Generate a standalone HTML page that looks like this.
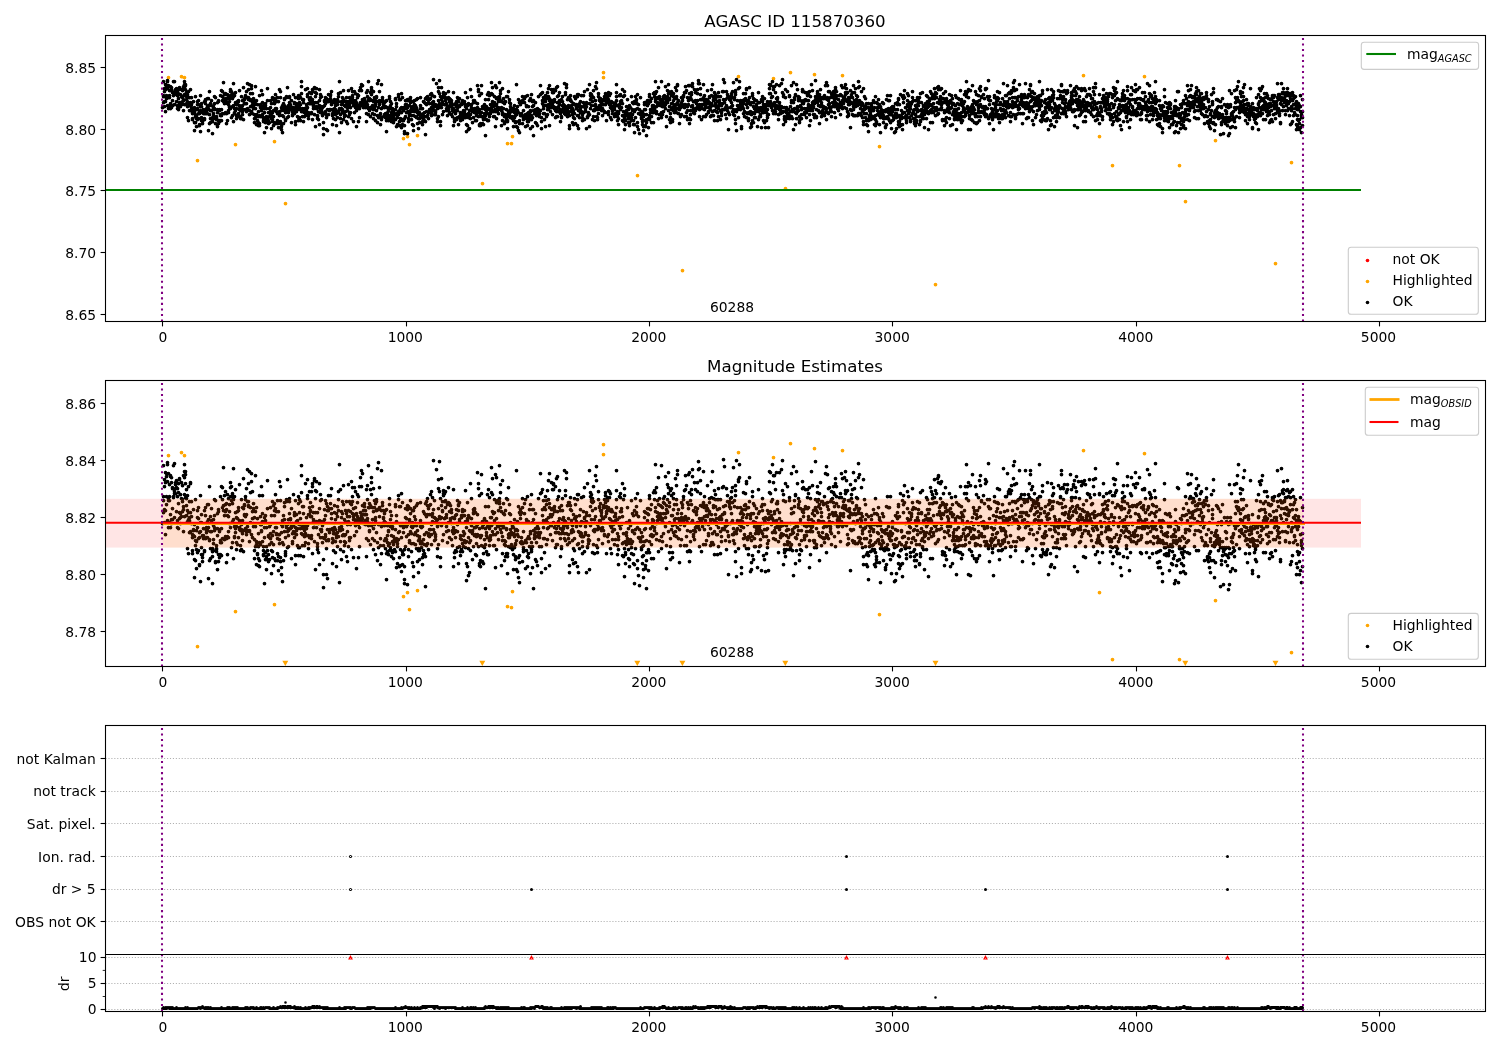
<!DOCTYPE html>
<html><head><meta charset="utf-8"><title>AGASC ID 115870360</title>
<style>html,body{margin:0;padding:0;background:#fff}svg{display:block;will-change:transform}text{font-family:"DejaVu Sans","Liberation Sans",sans-serif;fill:#000}</style></head><body>
<svg width="1500" height="1050" viewBox="0 0 1500 1050">
<rect width="1500" height="1050" fill="#fff"/>
<defs><clipPath id="c1"><rect x="105.5" y="35.5" width="1380" height="286"/></clipPath><clipPath id="c2"><rect x="105.5" y="380.5" width="1380" height="286"/></clipPath><clipPath id="c3"><rect x="105.5" y="725.5" width="1380" height="286"/></clipPath></defs>
<g clip-path="url(#c1)">
<path d="M168.5 77.5h0M181.5 76.5h0M184.5 77.5h0M197.5 160.5h0M235.5 144.5h0M274.5 141.5h0M285.5 203.5h0M403.5 138.5h0M407.5 136.5h0M409.5 144.5h0M417.5 135.5h0M482.5 183.5h0M507.5 143.5h0M511.5 143.5h0M512.5 136.5h0M603.5 72.5h0M603.5 77.5h0M637.5 175.5h0M682.5 270.5h0M738.5 76.5h0M773.5 78.5h0M790.5 72.5h0M814.5 74.5h0M842.5 75.5h0M785.5 188.5h0M879.5 146.5h0M935.5 284.5h0M1083.5 75.5h0M1144.5 76.5h0M1099.5 136.5h0M1112.5 165.5h0M1179.5 165.5h0M1185.5 201.5h0M1215.5 140.5h0M1291.5 162.5h0M1275.5 263.5h0" stroke="#ffa500" stroke-width="3.75" stroke-linecap="round" fill="none"/>
<path d="M162.5 107.5h0M163.5 81.5h0M163.5 102.5h0M163.5 96.5h0M163.5 95.5h0M164.5 101.5h0M164.5 106.5h0M164.5 88.5h0M164.5 91.5h0M165.5 111.5h0M165.5 89.5h0M165.5 84.5h0M165.5 101.5h0M166.5 85.5h0M166.5 98.5h0M166.5 95.5h0M166.5 86.5h0M167.5 105.5h0M167.5 88.5h0M167.5 80.5h0M167.5 81.5h0M168.5 97.5h0M168.5 85.5h0M168.5 108.5h0M168.5 96.5h0M169.5 90.5h0M169.5 106.5h0M169.5 95.5h0M169.5 97.5h0M170.5 108.5h0M170.5 86.5h0M170.5 86.5h0M170.5 103.5h0M171.5 105.5h0M171.5 107.5h0M171.5 89.5h0M171.5 87.5h0M172.5 100.5h0M172.5 105.5h0M172.5 92.5h0M172.5 91.5h0M173.5 95.5h0M173.5 81.5h0M173.5 95.5h0M173.5 95.5h0M174.5 104.5h0M174.5 93.5h0M174.5 81.5h0M174.5 94.5h0M175.5 93.5h0M175.5 90.5h0M175.5 91.5h0M175.5 89.5h0M176.5 89.5h0M176.5 88.5h0M176.5 101.5h0M176.5 91.5h0M177.5 108.5h0M177.5 91.5h0M177.5 105.5h0M177.5 95.5h0M178.5 89.5h0M178.5 98.5h0M178.5 93.5h0M178.5 109.5h0M179.5 102.5h0M179.5 87.5h0M179.5 104.5h0M179.5 88.5h0M180.5 106.5h0M180.5 102.5h0M180.5 104.5h0M180.5 94.5h0M181.5 89.5h0M181.5 104.5h0M181.5 96.5h0M181.5 89.5h0M182.5 97.5h0M182.5 101.5h0M182.5 90.5h0M182.5 96.5h0M183.5 100.5h0M183.5 110.5h0M183.5 86.5h0M183.5 99.5h0M184.5 94.5h0M184.5 104.5h0M184.5 81.5h0M184.5 87.5h0M184.5 84.5h0M185.5 95.5h0M185.5 89.5h0M185.5 85.5h0M185.5 84.5h0M186.5 92.5h0M186.5 96.5h0M186.5 99.5h0M186.5 103.5h0M187.5 106.5h0M187.5 94.5h0M187.5 101.5h0M187.5 117.5h0M188.5 102.5h0M188.5 91.5h0M188.5 105.5h0M188.5 120.5h0M189.5 105.5h0M189.5 97.5h0M189.5 104.5h0M189.5 110.5h0M190.5 89.5h0M190.5 89.5h0M190.5 110.5h0M190.5 102.5h0M191.5 107.5h0M191.5 103.5h0M191.5 97.5h0M191.5 104.5h0M192.5 111.5h0M192.5 118.5h0M192.5 119.5h0M192.5 113.5h0M193.5 101.5h0M193.5 109.5h0M193.5 112.5h0M193.5 110.5h0M194.5 112.5h0M194.5 107.5h0M194.5 122.5h0M194.5 130.5h0M195.5 116.5h0M195.5 122.5h0M195.5 96.5h0M195.5 114.5h0M196.5 115.5h0M196.5 126.5h0M196.5 109.5h0M196.5 118.5h0M197.5 101.5h0M197.5 104.5h0M197.5 119.5h0M197.5 108.5h0M198.5 113.5h0M198.5 118.5h0M198.5 100.5h0M198.5 104.5h0M199.5 111.5h0M199.5 113.5h0M199.5 125.5h0M199.5 124.5h0M200.5 110.5h0M200.5 95.5h0M200.5 131.5h0M200.5 106.5h0M201.5 106.5h0M201.5 103.5h0M201.5 120.5h0M201.5 117.5h0M202.5 112.5h0M202.5 121.5h0M202.5 123.5h0M202.5 120.5h0M203.5 113.5h0M203.5 109.5h0M203.5 113.5h0M203.5 112.5h0M204.5 118.5h0M204.5 119.5h0M204.5 101.5h0M204.5 113.5h0M205.5 113.5h0M205.5 103.5h0M205.5 100.5h0M205.5 99.5h0M206.5 108.5h0M206.5 113.5h0M206.5 109.5h0M206.5 111.5h0M207.5 98.5h0M207.5 109.5h0M207.5 106.5h0M207.5 113.5h0M208.5 98.5h0M208.5 130.5h0M208.5 108.5h0M208.5 105.5h0M209.5 123.5h0M209.5 91.5h0M209.5 114.5h0M209.5 114.5h0M210.5 122.5h0M210.5 103.5h0M210.5 110.5h0M210.5 118.5h0M211.5 110.5h0M211.5 105.5h0M211.5 100.5h0M211.5 110.5h0M212.5 121.5h0M212.5 117.5h0M212.5 133.5h0M212.5 119.5h0M213.5 105.5h0M213.5 108.5h0M213.5 113.5h0M213.5 115.5h0M214.5 96.5h0M214.5 109.5h0M214.5 103.5h0M214.5 108.5h0M215.5 118.5h0M215.5 97.5h0M215.5 123.5h0M215.5 123.5h0M216.5 116.5h0M216.5 119.5h0M216.5 117.5h0M216.5 118.5h0M217.5 102.5h0M217.5 112.5h0M217.5 109.5h0M217.5 126.5h0M218.5 120.5h0M218.5 101.5h0M218.5 123.5h0M218.5 100.5h0M219.5 121.5h0M219.5 109.5h0M219.5 120.5h0M219.5 110.5h0M220.5 120.5h0M220.5 114.5h0M220.5 95.5h0M220.5 115.5h0M221.5 90.5h0M221.5 115.5h0M221.5 120.5h0M221.5 109.5h0M222.5 113.5h0M222.5 91.5h0M222.5 100.5h0M222.5 96.5h0M223.5 101.5h0M223.5 82.5h0M223.5 99.5h0M223.5 101.5h0M224.5 113.5h0M224.5 113.5h0M224.5 103.5h0M224.5 94.5h0M225.5 93.5h0M225.5 112.5h0M225.5 98.5h0M225.5 102.5h0M226.5 113.5h0M226.5 98.5h0M226.5 123.5h0M226.5 101.5h0M227.5 94.5h0M227.5 112.5h0M227.5 103.5h0M227.5 120.5h0M228.5 110.5h0M228.5 96.5h0M228.5 112.5h0M228.5 104.5h0M229.5 106.5h0M229.5 107.5h0M229.5 101.5h0M229.5 98.5h0M230.5 91.5h0M230.5 95.5h0M230.5 108.5h0M230.5 89.5h0M231.5 91.5h0M231.5 117.5h0M231.5 97.5h0M231.5 95.5h0M232.5 93.5h0M232.5 98.5h0M232.5 115.5h0M232.5 106.5h0M233.5 121.5h0M233.5 105.5h0M233.5 83.5h0M233.5 96.5h0M234.5 95.5h0M234.5 108.5h0M234.5 112.5h0M234.5 113.5h0M235.5 102.5h0M235.5 110.5h0M235.5 109.5h0M235.5 92.5h0M236.5 118.5h0M236.5 115.5h0M236.5 108.5h0M236.5 104.5h0M237.5 104.5h0M237.5 116.5h0M237.5 101.5h0M237.5 104.5h0M238.5 100.5h0M238.5 113.5h0M238.5 101.5h0M238.5 101.5h0M239.5 109.5h0M239.5 105.5h0M239.5 108.5h0M239.5 90.5h0M240.5 110.5h0M240.5 116.5h0M240.5 118.5h0M240.5 107.5h0M241.5 109.5h0M241.5 107.5h0M241.5 96.5h0M241.5 118.5h0M242.5 111.5h0M242.5 105.5h0M242.5 114.5h0M242.5 100.5h0M243.5 100.5h0M243.5 109.5h0M243.5 119.5h0M243.5 87.5h0M244.5 98.5h0M244.5 99.5h0M244.5 103.5h0M244.5 103.5h0M245.5 95.5h0M245.5 103.5h0M245.5 109.5h0M245.5 96.5h0M246.5 103.5h0M246.5 110.5h0M246.5 111.5h0M246.5 91.5h0M247.5 97.5h0M247.5 83.5h0M247.5 108.5h0M247.5 110.5h0M248.5 99.5h0M248.5 89.5h0M248.5 97.5h0M248.5 99.5h0M249.5 84.5h0M249.5 110.5h0M249.5 114.5h0M249.5 110.5h0M250.5 106.5h0M250.5 100.5h0M250.5 93.5h0M250.5 99.5h0M251.5 88.5h0M251.5 111.5h0M251.5 85.5h0M251.5 111.5h0M252.5 93.5h0M252.5 113.5h0M252.5 101.5h0M252.5 104.5h0M253.5 100.5h0M253.5 98.5h0M253.5 108.5h0M253.5 107.5h0M254.5 104.5h0M254.5 118.5h0M254.5 114.5h0M254.5 122.5h0M255.5 108.5h0M255.5 86.5h0M255.5 101.5h0M255.5 117.5h0M256.5 116.5h0M256.5 100.5h0M256.5 114.5h0M256.5 124.5h0M257.5 120.5h0M257.5 120.5h0M257.5 120.5h0M257.5 104.5h0M258.5 111.5h0M258.5 125.5h0M258.5 116.5h0M258.5 122.5h0M259.5 123.5h0M259.5 125.5h0M259.5 95.5h0M259.5 115.5h0M260.5 106.5h0M260.5 104.5h0M260.5 116.5h0M260.5 107.5h0M261.5 107.5h0M261.5 110.5h0M261.5 90.5h0M261.5 109.5h0M262.5 114.5h0M262.5 106.5h0M262.5 94.5h0M262.5 102.5h0M263.5 117.5h0M263.5 120.5h0M263.5 121.5h0M263.5 118.5h0M264.5 108.5h0M264.5 104.5h0M264.5 132.5h0M264.5 112.5h0M265.5 122.5h0M265.5 105.5h0M265.5 103.5h0M265.5 119.5h0M266.5 116.5h0M266.5 121.5h0M266.5 108.5h0M266.5 127.5h0M267.5 122.5h0M267.5 118.5h0M267.5 100.5h0M267.5 88.5h0M268.5 112.5h0M268.5 123.5h0M268.5 112.5h0M268.5 120.5h0M269.5 108.5h0M269.5 122.5h0M269.5 116.5h0M269.5 112.5h0M270.5 107.5h0M270.5 113.5h0M270.5 100.5h0M270.5 111.5h0M271.5 128.5h0M271.5 103.5h0M271.5 115.5h0M271.5 118.5h0M272.5 97.5h0M272.5 121.5h0M272.5 112.5h0M272.5 119.5h0M273.5 99.5h0M273.5 116.5h0M273.5 110.5h0M273.5 125.5h0M274.5 98.5h0M274.5 122.5h0M274.5 103.5h0M274.5 101.5h0M275.5 100.5h0M275.5 94.5h0M275.5 123.5h0M275.5 108.5h0M276.5 111.5h0M276.5 108.5h0M276.5 101.5h0M276.5 111.5h0M277.5 120.5h0M277.5 113.5h0M277.5 97.5h0M277.5 123.5h0M278.5 112.5h0M278.5 121.5h0M278.5 101.5h0M278.5 127.5h0M279.5 115.5h0M279.5 113.5h0M279.5 111.5h0M279.5 89.5h0M280.5 97.5h0M280.5 121.5h0M280.5 91.5h0M280.5 123.5h0M281.5 129.5h0M281.5 126.5h0M281.5 110.5h0M281.5 107.5h0M282.5 132.5h0M282.5 108.5h0M282.5 115.5h0M282.5 105.5h0M283.5 116.5h0M283.5 103.5h0M283.5 107.5h0M283.5 123.5h0M284.5 98.5h0M284.5 110.5h0M284.5 105.5h0M284.5 99.5h0M285.5 120.5h0M285.5 112.5h0M285.5 119.5h0M285.5 120.5h0M286.5 108.5h0M286.5 107.5h0M286.5 97.5h0M286.5 96.5h0M287.5 110.5h0M287.5 117.5h0M287.5 107.5h0M287.5 87.5h0M288.5 110.5h0M288.5 116.5h0M288.5 112.5h0M288.5 105.5h0M289.5 96.5h0M289.5 97.5h0M289.5 102.5h0M289.5 109.5h0M290.5 104.5h0M290.5 109.5h0M290.5 105.5h0M290.5 106.5h0M291.5 100.5h0M291.5 122.5h0M291.5 108.5h0M291.5 108.5h0M292.5 115.5h0M292.5 107.5h0M292.5 114.5h0M292.5 111.5h0M293.5 108.5h0M293.5 107.5h0M293.5 110.5h0M293.5 94.5h0M294.5 103.5h0M294.5 102.5h0M294.5 103.5h0M294.5 111.5h0M294.5 113.5h0M295.5 97.5h0M295.5 108.5h0M295.5 121.5h0M295.5 124.5h0M296.5 103.5h0M296.5 111.5h0M296.5 106.5h0M296.5 110.5h0M297.5 109.5h0M297.5 106.5h0M297.5 116.5h0M297.5 105.5h0M298.5 95.5h0M298.5 98.5h0M298.5 120.5h0M298.5 117.5h0M299.5 117.5h0M299.5 107.5h0M299.5 96.5h0M299.5 102.5h0M300.5 120.5h0M300.5 104.5h0M300.5 97.5h0M300.5 109.5h0M301.5 86.5h0M301.5 111.5h0M301.5 93.5h0M301.5 81.5h0M302.5 116.5h0M302.5 108.5h0M302.5 99.5h0M302.5 111.5h0M303.5 121.5h0M303.5 99.5h0M303.5 102.5h0M303.5 109.5h0M304.5 112.5h0M304.5 110.5h0M304.5 108.5h0M304.5 116.5h0M305.5 89.5h0M305.5 115.5h0M305.5 109.5h0M305.5 111.5h0M306.5 109.5h0M306.5 104.5h0M306.5 112.5h0M306.5 107.5h0M307.5 88.5h0M307.5 94.5h0M307.5 107.5h0M307.5 96.5h0M308.5 112.5h0M308.5 103.5h0M308.5 118.5h0M308.5 115.5h0M309.5 113.5h0M309.5 92.5h0M309.5 103.5h0M309.5 99.5h0M310.5 103.5h0M310.5 101.5h0M310.5 101.5h0M310.5 97.5h0M311.5 103.5h0M311.5 113.5h0M311.5 112.5h0M311.5 93.5h0M312.5 91.5h0M312.5 99.5h0M312.5 119.5h0M312.5 89.5h0M313.5 102.5h0M313.5 106.5h0M313.5 105.5h0M313.5 108.5h0M314.5 87.5h0M314.5 88.5h0M314.5 114.5h0M314.5 107.5h0M315.5 102.5h0M315.5 92.5h0M315.5 126.5h0M315.5 96.5h0M316.5 88.5h0M316.5 108.5h0M316.5 106.5h0M316.5 93.5h0M317.5 102.5h0M317.5 118.5h0M317.5 116.5h0M317.5 115.5h0M318.5 119.5h0M318.5 107.5h0M318.5 111.5h0M318.5 107.5h0M319.5 100.5h0M319.5 89.5h0M319.5 105.5h0M319.5 124.5h0M320.5 94.5h0M320.5 109.5h0M320.5 97.5h0M320.5 112.5h0M321.5 106.5h0M321.5 110.5h0M321.5 109.5h0M321.5 96.5h0M322.5 115.5h0M322.5 107.5h0M322.5 107.5h0M322.5 112.5h0M323.5 128.5h0M323.5 106.5h0M323.5 134.5h0M323.5 122.5h0M324.5 113.5h0M324.5 105.5h0M324.5 100.5h0M324.5 101.5h0M325.5 103.5h0M325.5 112.5h0M325.5 97.5h0M325.5 111.5h0M326.5 98.5h0M326.5 129.5h0M326.5 117.5h0M326.5 114.5h0M327.5 109.5h0M327.5 130.5h0M327.5 101.5h0M327.5 99.5h0M328.5 101.5h0M328.5 114.5h0M328.5 94.5h0M328.5 114.5h0M329.5 100.5h0M329.5 110.5h0M329.5 109.5h0M329.5 110.5h0M330.5 109.5h0M330.5 98.5h0M330.5 94.5h0M330.5 95.5h0M331.5 100.5h0M331.5 102.5h0M331.5 104.5h0M331.5 91.5h0M332.5 113.5h0M332.5 115.5h0M332.5 109.5h0M332.5 124.5h0M333.5 111.5h0M333.5 110.5h0M333.5 118.5h0M333.5 114.5h0M334.5 102.5h0M334.5 111.5h0M334.5 108.5h0M334.5 99.5h0M335.5 114.5h0M335.5 119.5h0M335.5 109.5h0M335.5 105.5h0M336.5 125.5h0M336.5 102.5h0M336.5 112.5h0M336.5 113.5h0M337.5 117.5h0M337.5 111.5h0M337.5 99.5h0M337.5 104.5h0M338.5 101.5h0M338.5 112.5h0M338.5 93.5h0M338.5 96.5h0M339.5 109.5h0M339.5 132.5h0M339.5 108.5h0M339.5 81.5h0M340.5 109.5h0M340.5 118.5h0M340.5 92.5h0M340.5 114.5h0M341.5 104.5h0M341.5 101.5h0M341.5 122.5h0M341.5 108.5h0M342.5 97.5h0M342.5 112.5h0M342.5 102.5h0M342.5 109.5h0M343.5 99.5h0M343.5 90.5h0M343.5 119.5h0M343.5 111.5h0M344.5 105.5h0M344.5 114.5h0M344.5 116.5h0M344.5 112.5h0M345.5 111.5h0M345.5 115.5h0M345.5 106.5h0M345.5 101.5h0M346.5 101.5h0M346.5 102.5h0M346.5 97.5h0M346.5 121.5h0M347.5 110.5h0M347.5 107.5h0M347.5 104.5h0M347.5 123.5h0M348.5 90.5h0M348.5 116.5h0M348.5 106.5h0M348.5 101.5h0M349.5 97.5h0M349.5 114.5h0M349.5 112.5h0M349.5 104.5h0M350.5 101.5h0M350.5 98.5h0M350.5 107.5h0M350.5 112.5h0M351.5 118.5h0M351.5 88.5h0M351.5 118.5h0M351.5 98.5h0M352.5 102.5h0M352.5 97.5h0M352.5 95.5h0M352.5 91.5h0M353.5 105.5h0M353.5 100.5h0M353.5 121.5h0M353.5 103.5h0M354.5 112.5h0M354.5 105.5h0M354.5 91.5h0M354.5 103.5h0M355.5 93.5h0M355.5 105.5h0M355.5 100.5h0M355.5 107.5h0M356.5 126.5h0M356.5 110.5h0M356.5 106.5h0M356.5 102.5h0M357.5 104.5h0M357.5 105.5h0M357.5 94.5h0M357.5 97.5h0M358.5 107.5h0M358.5 95.5h0M358.5 121.5h0M358.5 106.5h0M359.5 105.5h0M359.5 90.5h0M359.5 108.5h0M359.5 117.5h0M360.5 102.5h0M360.5 87.5h0M360.5 105.5h0M360.5 104.5h0M361.5 105.5h0M361.5 103.5h0M361.5 90.5h0M361.5 84.5h0M362.5 99.5h0M362.5 104.5h0M362.5 85.5h0M362.5 103.5h0M363.5 103.5h0M363.5 107.5h0M363.5 106.5h0M363.5 101.5h0M364.5 106.5h0M364.5 99.5h0M364.5 103.5h0M364.5 98.5h0M365.5 107.5h0M365.5 105.5h0M365.5 101.5h0M365.5 103.5h0M366.5 102.5h0M366.5 92.5h0M366.5 113.5h0M366.5 121.5h0M367.5 96.5h0M367.5 106.5h0M367.5 90.5h0M367.5 104.5h0M368.5 114.5h0M368.5 81.5h0M368.5 99.5h0M368.5 108.5h0M369.5 110.5h0M369.5 98.5h0M369.5 109.5h0M369.5 100.5h0M370.5 92.5h0M370.5 116.5h0M370.5 107.5h0M370.5 99.5h0M371.5 87.5h0M371.5 94.5h0M371.5 108.5h0M371.5 89.5h0M372.5 107.5h0M372.5 105.5h0M372.5 100.5h0M372.5 113.5h0M373.5 118.5h0M373.5 91.5h0M373.5 101.5h0M373.5 109.5h0M374.5 114.5h0M374.5 100.5h0M374.5 97.5h0M374.5 107.5h0M375.5 105.5h0M375.5 98.5h0M375.5 104.5h0M375.5 120.5h0M376.5 97.5h0M376.5 101.5h0M376.5 96.5h0M376.5 110.5h0M377.5 122.5h0M377.5 115.5h0M377.5 101.5h0M377.5 83.5h0M378.5 80.5h0M378.5 101.5h0M378.5 117.5h0M378.5 107.5h0M379.5 100.5h0M379.5 100.5h0M379.5 104.5h0M379.5 91.5h0M380.5 113.5h0M380.5 124.5h0M380.5 113.5h0M380.5 116.5h0M381.5 84.5h0M381.5 108.5h0M381.5 119.5h0M381.5 101.5h0M382.5 97.5h0M382.5 107.5h0M382.5 107.5h0M382.5 99.5h0M383.5 104.5h0M383.5 116.5h0M383.5 104.5h0M383.5 101.5h0M384.5 107.5h0M384.5 102.5h0M384.5 106.5h0M384.5 114.5h0M385.5 113.5h0M385.5 106.5h0M385.5 117.5h0M385.5 101.5h0M386.5 100.5h0M386.5 131.5h0M386.5 114.5h0M386.5 120.5h0M387.5 119.5h0M387.5 112.5h0M387.5 115.5h0M387.5 107.5h0M388.5 110.5h0M388.5 109.5h0M388.5 120.5h0M388.5 116.5h0M389.5 98.5h0M389.5 115.5h0M389.5 96.5h0M389.5 118.5h0M390.5 101.5h0M390.5 108.5h0M390.5 117.5h0M390.5 105.5h0M391.5 112.5h0M391.5 103.5h0M391.5 121.5h0M391.5 118.5h0M392.5 119.5h0M392.5 108.5h0M392.5 109.5h0M392.5 114.5h0M393.5 115.5h0M393.5 116.5h0M393.5 112.5h0M393.5 122.5h0M394.5 114.5h0M394.5 114.5h0M394.5 118.5h0M394.5 118.5h0M395.5 98.5h0M395.5 119.5h0M395.5 109.5h0M395.5 99.5h0M396.5 106.5h0M396.5 113.5h0M396.5 103.5h0M396.5 126.5h0M397.5 124.5h0M397.5 117.5h0M397.5 115.5h0M397.5 114.5h0M398.5 94.5h0M398.5 96.5h0M398.5 114.5h0M398.5 111.5h0M399.5 121.5h0M399.5 110.5h0M399.5 125.5h0M399.5 99.5h0M400.5 118.5h0M400.5 108.5h0M400.5 125.5h0M400.5 99.5h0M401.5 107.5h0M401.5 93.5h0M401.5 112.5h0M401.5 127.5h0M402.5 120.5h0M402.5 124.5h0M402.5 97.5h0M402.5 119.5h0M403.5 120.5h0M403.5 107.5h0M403.5 110.5h0M403.5 108.5h0M404.5 118.5h0M404.5 131.5h0M404.5 125.5h0M404.5 133.5h0M405.5 100.5h0M405.5 104.5h0M405.5 116.5h0M405.5 107.5h0M405.5 106.5h0M406.5 107.5h0M406.5 108.5h0M406.5 104.5h0M406.5 112.5h0M407.5 133.5h0M407.5 99.5h0M407.5 100.5h0M407.5 107.5h0M408.5 99.5h0M408.5 111.5h0M408.5 121.5h0M408.5 118.5h0M409.5 115.5h0M409.5 105.5h0M409.5 114.5h0M409.5 105.5h0M410.5 102.5h0M410.5 100.5h0M410.5 97.5h0M410.5 110.5h0M411.5 111.5h0M411.5 119.5h0M411.5 108.5h0M411.5 115.5h0M412.5 124.5h0M412.5 101.5h0M412.5 106.5h0M412.5 108.5h0M413.5 130.5h0M413.5 115.5h0M413.5 125.5h0M413.5 101.5h0M414.5 111.5h0M414.5 107.5h0M414.5 104.5h0M414.5 100.5h0M415.5 116.5h0M415.5 107.5h0M415.5 110.5h0M415.5 105.5h0M416.5 107.5h0M416.5 99.5h0M416.5 108.5h0M416.5 117.5h0M417.5 112.5h0M417.5 123.5h0M417.5 110.5h0M417.5 98.5h0M418.5 118.5h0M418.5 128.5h0M418.5 114.5h0M418.5 118.5h0M419.5 113.5h0M419.5 118.5h0M419.5 112.5h0M419.5 122.5h0M420.5 97.5h0M420.5 115.5h0M420.5 108.5h0M420.5 105.5h0M421.5 114.5h0M421.5 108.5h0M421.5 115.5h0M421.5 117.5h0M422.5 115.5h0M422.5 108.5h0M422.5 124.5h0M422.5 121.5h0M423.5 120.5h0M423.5 118.5h0M423.5 101.5h0M423.5 113.5h0M424.5 116.5h0M424.5 112.5h0M424.5 102.5h0M424.5 120.5h0M425.5 103.5h0M425.5 134.5h0M425.5 121.5h0M425.5 98.5h0M426.5 97.5h0M426.5 111.5h0M426.5 116.5h0M426.5 104.5h0M427.5 115.5h0M427.5 96.5h0M427.5 99.5h0M427.5 103.5h0M428.5 118.5h0M428.5 100.5h0M428.5 112.5h0M428.5 111.5h0M429.5 112.5h0M429.5 109.5h0M429.5 103.5h0M429.5 99.5h0M430.5 98.5h0M430.5 111.5h0M430.5 109.5h0M430.5 94.5h0M431.5 112.5h0M431.5 107.5h0M431.5 115.5h0M431.5 93.5h0M432.5 102.5h0M432.5 103.5h0M432.5 106.5h0M432.5 95.5h0M433.5 109.5h0M433.5 101.5h0M433.5 79.5h0M433.5 106.5h0M434.5 110.5h0M434.5 114.5h0M434.5 96.5h0M434.5 104.5h0M435.5 111.5h0M435.5 112.5h0M435.5 104.5h0M435.5 114.5h0M436.5 83.5h0M436.5 106.5h0M436.5 106.5h0M436.5 105.5h0M437.5 121.5h0M437.5 118.5h0M437.5 108.5h0M437.5 105.5h0M438.5 116.5h0M438.5 87.5h0M438.5 100.5h0M438.5 91.5h0M439.5 93.5h0M439.5 107.5h0M439.5 80.5h0M439.5 103.5h0M440.5 121.5h0M440.5 125.5h0M440.5 105.5h0M440.5 96.5h0M441.5 104.5h0M441.5 87.5h0M441.5 107.5h0M441.5 99.5h0M442.5 97.5h0M442.5 114.5h0M442.5 101.5h0M442.5 101.5h0M443.5 93.5h0M443.5 92.5h0M443.5 95.5h0M443.5 111.5h0M444.5 97.5h0M444.5 94.5h0M444.5 104.5h0M444.5 97.5h0M445.5 97.5h0M445.5 93.5h0M445.5 104.5h0M445.5 100.5h0M446.5 103.5h0M446.5 104.5h0M446.5 110.5h0M446.5 108.5h0M447.5 115.5h0M447.5 106.5h0M447.5 98.5h0M447.5 98.5h0M448.5 97.5h0M448.5 106.5h0M448.5 91.5h0M448.5 109.5h0M449.5 98.5h0M449.5 101.5h0M449.5 113.5h0M449.5 112.5h0M450.5 99.5h0M450.5 106.5h0M450.5 104.5h0M450.5 105.5h0M451.5 102.5h0M451.5 106.5h0M451.5 100.5h0M451.5 114.5h0M452.5 110.5h0M452.5 104.5h0M452.5 116.5h0M452.5 109.5h0M453.5 111.5h0M453.5 108.5h0M453.5 125.5h0M453.5 92.5h0M454.5 111.5h0M454.5 104.5h0M454.5 119.5h0M454.5 121.5h0M455.5 110.5h0M455.5 113.5h0M455.5 103.5h0M455.5 118.5h0M456.5 119.5h0M456.5 106.5h0M456.5 103.5h0M456.5 101.5h0M457.5 110.5h0M457.5 107.5h0M457.5 117.5h0M457.5 97.5h0M458.5 98.5h0M458.5 99.5h0M458.5 124.5h0M458.5 101.5h0M459.5 116.5h0M459.5 105.5h0M459.5 106.5h0M459.5 98.5h0M460.5 112.5h0M460.5 113.5h0M460.5 119.5h0M460.5 120.5h0M461.5 104.5h0M461.5 118.5h0M461.5 103.5h0M461.5 113.5h0M462.5 115.5h0M462.5 100.5h0M462.5 101.5h0M462.5 119.5h0M463.5 112.5h0M463.5 110.5h0M463.5 103.5h0M463.5 117.5h0M464.5 114.5h0M464.5 111.5h0M464.5 103.5h0M464.5 101.5h0M465.5 115.5h0M465.5 92.5h0M465.5 106.5h0M465.5 117.5h0M466.5 124.5h0M466.5 114.5h0M466.5 131.5h0M466.5 108.5h0M467.5 104.5h0M467.5 97.5h0M467.5 105.5h0M467.5 125.5h0M468.5 113.5h0M468.5 103.5h0M468.5 129.5h0M468.5 117.5h0M469.5 104.5h0M469.5 110.5h0M469.5 128.5h0M469.5 115.5h0M470.5 110.5h0M470.5 89.5h0M470.5 114.5h0M470.5 118.5h0M471.5 108.5h0M471.5 107.5h0M471.5 104.5h0M471.5 96.5h0M472.5 111.5h0M472.5 122.5h0M472.5 110.5h0M472.5 110.5h0M473.5 100.5h0M473.5 102.5h0M473.5 117.5h0M473.5 102.5h0M474.5 100.5h0M474.5 112.5h0M474.5 101.5h0M474.5 108.5h0M475.5 108.5h0M475.5 111.5h0M475.5 102.5h0M475.5 120.5h0M476.5 108.5h0M476.5 120.5h0M476.5 112.5h0M476.5 115.5h0M477.5 107.5h0M477.5 111.5h0M477.5 85.5h0M477.5 103.5h0M478.5 91.5h0M478.5 116.5h0M478.5 112.5h0M478.5 89.5h0M479.5 125.5h0M479.5 109.5h0M479.5 124.5h0M479.5 95.5h0M480.5 123.5h0M480.5 113.5h0M480.5 112.5h0M480.5 125.5h0M481.5 85.5h0M481.5 112.5h0M481.5 93.5h0M481.5 116.5h0M482.5 123.5h0M482.5 108.5h0M482.5 108.5h0M482.5 106.5h0M483.5 119.5h0M483.5 124.5h0M483.5 116.5h0M483.5 107.5h0M484.5 104.5h0M484.5 117.5h0M484.5 113.5h0M484.5 105.5h0M485.5 99.5h0M485.5 115.5h0M485.5 109.5h0M485.5 135.5h0M486.5 119.5h0M486.5 106.5h0M486.5 110.5h0M486.5 112.5h0M487.5 94.5h0M487.5 113.5h0M487.5 120.5h0M487.5 108.5h0M488.5 108.5h0M488.5 120.5h0M488.5 99.5h0M488.5 92.5h0M489.5 114.5h0M489.5 116.5h0M489.5 109.5h0M489.5 95.5h0M490.5 112.5h0M490.5 113.5h0M490.5 112.5h0M490.5 104.5h0M491.5 104.5h0M491.5 107.5h0M491.5 93.5h0M491.5 82.5h0M492.5 110.5h0M492.5 94.5h0M492.5 101.5h0M492.5 87.5h0M493.5 111.5h0M493.5 106.5h0M493.5 102.5h0M493.5 116.5h0M494.5 105.5h0M494.5 96.5h0M494.5 116.5h0M494.5 102.5h0M495.5 85.5h0M495.5 109.5h0M495.5 111.5h0M495.5 126.5h0M496.5 104.5h0M496.5 118.5h0M496.5 98.5h0M496.5 87.5h0M497.5 98.5h0M497.5 110.5h0M497.5 97.5h0M497.5 107.5h0M498.5 113.5h0M498.5 108.5h0M498.5 101.5h0M498.5 107.5h0M499.5 98.5h0M499.5 82.5h0M499.5 97.5h0M499.5 96.5h0M500.5 109.5h0M500.5 90.5h0M500.5 100.5h0M500.5 93.5h0M501.5 110.5h0M501.5 101.5h0M501.5 125.5h0M501.5 107.5h0M502.5 112.5h0M502.5 114.5h0M502.5 88.5h0M502.5 120.5h0M503.5 108.5h0M503.5 108.5h0M503.5 102.5h0M503.5 98.5h0M504.5 123.5h0M504.5 114.5h0M504.5 116.5h0M504.5 103.5h0M505.5 101.5h0M505.5 114.5h0M505.5 116.5h0M505.5 121.5h0M506.5 109.5h0M506.5 96.5h0M506.5 109.5h0M506.5 119.5h0M507.5 121.5h0M507.5 120.5h0M507.5 128.5h0M507.5 96.5h0M508.5 113.5h0M508.5 116.5h0M508.5 91.5h0M508.5 111.5h0M509.5 99.5h0M509.5 111.5h0M509.5 102.5h0M509.5 113.5h0M510.5 117.5h0M510.5 109.5h0M510.5 106.5h0M510.5 103.5h0M511.5 111.5h0M511.5 116.5h0M511.5 117.5h0M511.5 110.5h0M512.5 118.5h0M512.5 116.5h0M512.5 108.5h0M512.5 108.5h0M513.5 108.5h0M513.5 120.5h0M513.5 126.5h0M513.5 111.5h0M514.5 112.5h0M514.5 117.5h0M514.5 111.5h0M514.5 105.5h0M515.5 115.5h0M515.5 109.5h0M515.5 122.5h0M515.5 115.5h0M515.5 121.5h0M516.5 126.5h0M516.5 109.5h0M516.5 84.5h0M516.5 114.5h0M517.5 106.5h0M517.5 110.5h0M517.5 127.5h0M517.5 111.5h0M518.5 130.5h0M518.5 121.5h0M518.5 99.5h0M518.5 112.5h0M519.5 102.5h0M519.5 123.5h0M519.5 132.5h0M519.5 120.5h0M520.5 101.5h0M520.5 104.5h0M520.5 103.5h0M520.5 115.5h0M521.5 114.5h0M521.5 115.5h0M521.5 102.5h0M521.5 113.5h0M522.5 96.5h0M522.5 115.5h0M522.5 100.5h0M522.5 123.5h0M523.5 118.5h0M523.5 110.5h0M523.5 119.5h0M523.5 117.5h0M524.5 115.5h0M524.5 118.5h0M524.5 98.5h0M524.5 102.5h0M525.5 126.5h0M525.5 96.5h0M525.5 114.5h0M525.5 114.5h0M526.5 115.5h0M526.5 105.5h0M526.5 106.5h0M526.5 118.5h0M527.5 113.5h0M527.5 125.5h0M527.5 95.5h0M527.5 121.5h0M528.5 121.5h0M528.5 120.5h0M528.5 112.5h0M528.5 106.5h0M529.5 117.5h0M529.5 113.5h0M529.5 116.5h0M529.5 100.5h0M530.5 111.5h0M530.5 128.5h0M530.5 98.5h0M530.5 110.5h0M531.5 94.5h0M531.5 119.5h0M531.5 118.5h0M531.5 115.5h0M532.5 126.5h0M532.5 117.5h0M532.5 101.5h0M532.5 106.5h0M533.5 135.5h0M533.5 100.5h0M533.5 110.5h0M533.5 105.5h0M534.5 113.5h0M534.5 111.5h0M534.5 113.5h0M534.5 113.5h0M535.5 122.5h0M535.5 102.5h0M535.5 111.5h0M535.5 109.5h0M536.5 109.5h0M536.5 115.5h0M536.5 112.5h0M536.5 123.5h0M537.5 108.5h0M537.5 108.5h0M537.5 112.5h0M537.5 125.5h0M538.5 96.5h0M538.5 110.5h0M538.5 109.5h0M538.5 111.5h0M539.5 113.5h0M539.5 111.5h0M539.5 116.5h0M539.5 111.5h0M540.5 85.5h0M540.5 94.5h0M540.5 85.5h0M540.5 110.5h0M541.5 121.5h0M541.5 117.5h0M541.5 128.5h0M541.5 93.5h0M542.5 92.5h0M542.5 103.5h0M542.5 100.5h0M542.5 100.5h0M543.5 105.5h0M543.5 97.5h0M543.5 113.5h0M543.5 108.5h0M544.5 105.5h0M544.5 119.5h0M544.5 113.5h0M544.5 100.5h0M545.5 101.5h0M545.5 126.5h0M545.5 95.5h0M545.5 101.5h0M546.5 96.5h0M546.5 105.5h0M546.5 98.5h0M546.5 116.5h0M547.5 106.5h0M547.5 114.5h0M547.5 109.5h0M547.5 92.5h0M548.5 88.5h0M548.5 104.5h0M548.5 108.5h0M548.5 96.5h0M549.5 100.5h0M549.5 85.5h0M549.5 98.5h0M549.5 125.5h0M550.5 104.5h0M550.5 107.5h0M550.5 111.5h0M550.5 103.5h0M551.5 104.5h0M551.5 107.5h0M551.5 89.5h0M551.5 100.5h0M552.5 100.5h0M552.5 103.5h0M552.5 92.5h0M552.5 114.5h0M553.5 92.5h0M553.5 106.5h0M553.5 89.5h0M553.5 90.5h0M554.5 99.5h0M554.5 108.5h0M554.5 101.5h0M554.5 101.5h0M555.5 117.5h0M555.5 107.5h0M555.5 110.5h0M555.5 90.5h0M556.5 87.5h0M556.5 111.5h0M556.5 109.5h0M556.5 116.5h0M557.5 102.5h0M557.5 96.5h0M557.5 86.5h0M557.5 116.5h0M558.5 95.5h0M558.5 106.5h0M558.5 111.5h0M558.5 107.5h0M559.5 111.5h0M559.5 100.5h0M559.5 104.5h0M559.5 92.5h0M560.5 109.5h0M560.5 121.5h0M560.5 113.5h0M560.5 101.5h0M561.5 117.5h0M561.5 111.5h0M561.5 99.5h0M561.5 116.5h0M562.5 96.5h0M562.5 101.5h0M562.5 109.5h0M562.5 105.5h0M563.5 109.5h0M563.5 108.5h0M563.5 107.5h0M563.5 104.5h0M564.5 105.5h0M564.5 111.5h0M564.5 113.5h0M564.5 83.5h0M565.5 114.5h0M565.5 106.5h0M565.5 92.5h0M565.5 94.5h0M566.5 111.5h0M566.5 84.5h0M566.5 87.5h0M566.5 108.5h0M567.5 116.5h0M567.5 99.5h0M567.5 107.5h0M567.5 108.5h0M568.5 113.5h0M568.5 111.5h0M568.5 105.5h0M568.5 97.5h0M569.5 125.5h0M569.5 128.5h0M569.5 97.5h0M569.5 115.5h0M570.5 100.5h0M570.5 107.5h0M570.5 95.5h0M570.5 99.5h0M571.5 111.5h0M571.5 110.5h0M571.5 105.5h0M571.5 101.5h0M572.5 114.5h0M572.5 122.5h0M572.5 108.5h0M572.5 109.5h0M573.5 110.5h0M573.5 117.5h0M573.5 103.5h0M573.5 124.5h0M574.5 113.5h0M574.5 96.5h0M574.5 118.5h0M574.5 104.5h0M575.5 104.5h0M575.5 104.5h0M575.5 123.5h0M575.5 98.5h0M576.5 107.5h0M576.5 104.5h0M576.5 106.5h0M576.5 108.5h0M577.5 96.5h0M577.5 94.5h0M577.5 125.5h0M577.5 115.5h0M578.5 110.5h0M578.5 128.5h0M578.5 94.5h0M578.5 115.5h0M579.5 103.5h0M579.5 106.5h0M579.5 110.5h0M579.5 117.5h0M580.5 112.5h0M580.5 108.5h0M580.5 101.5h0M580.5 110.5h0M581.5 112.5h0M581.5 111.5h0M581.5 95.5h0M581.5 106.5h0M582.5 114.5h0M582.5 120.5h0M582.5 112.5h0M582.5 117.5h0M583.5 112.5h0M583.5 95.5h0M583.5 102.5h0M583.5 106.5h0M584.5 104.5h0M584.5 91.5h0M584.5 119.5h0M584.5 104.5h0M585.5 110.5h0M585.5 107.5h0M585.5 108.5h0M585.5 111.5h0M586.5 103.5h0M586.5 128.5h0M586.5 106.5h0M586.5 102.5h0M587.5 117.5h0M587.5 117.5h0M587.5 89.5h0M587.5 116.5h0M588.5 112.5h0M588.5 115.5h0M588.5 114.5h0M588.5 114.5h0M589.5 126.5h0M589.5 84.5h0M589.5 114.5h0M589.5 103.5h0M590.5 108.5h0M590.5 93.5h0M590.5 99.5h0M590.5 95.5h0M591.5 94.5h0M591.5 97.5h0M591.5 105.5h0M591.5 96.5h0M592.5 119.5h0M592.5 96.5h0M592.5 97.5h0M592.5 101.5h0M593.5 116.5h0M593.5 90.5h0M593.5 110.5h0M593.5 97.5h0M594.5 120.5h0M594.5 105.5h0M594.5 109.5h0M594.5 110.5h0M595.5 109.5h0M595.5 86.5h0M595.5 104.5h0M595.5 100.5h0M596.5 82.5h0M596.5 116.5h0M596.5 88.5h0M596.5 107.5h0M597.5 109.5h0M597.5 107.5h0M597.5 119.5h0M597.5 117.5h0M598.5 113.5h0M598.5 108.5h0M598.5 96.5h0M598.5 93.5h0M599.5 107.5h0M599.5 100.5h0M599.5 99.5h0M599.5 105.5h0M600.5 101.5h0M600.5 109.5h0M600.5 98.5h0M600.5 105.5h0M601.5 103.5h0M601.5 101.5h0M601.5 102.5h0M601.5 110.5h0M602.5 115.5h0M602.5 104.5h0M602.5 108.5h0M602.5 108.5h0M603.5 104.5h0M603.5 110.5h0M603.5 99.5h0M603.5 99.5h0M604.5 111.5h0M604.5 100.5h0M604.5 112.5h0M604.5 96.5h0M605.5 97.5h0M605.5 104.5h0M605.5 95.5h0M605.5 93.5h0M606.5 99.5h0M606.5 120.5h0M606.5 102.5h0M606.5 101.5h0M607.5 95.5h0M607.5 112.5h0M607.5 96.5h0M607.5 100.5h0M608.5 99.5h0M608.5 114.5h0M608.5 111.5h0M608.5 92.5h0M609.5 95.5h0M609.5 104.5h0M609.5 93.5h0M609.5 101.5h0M610.5 107.5h0M610.5 117.5h0M610.5 93.5h0M610.5 105.5h0M611.5 101.5h0M611.5 119.5h0M611.5 108.5h0M611.5 101.5h0M612.5 106.5h0M612.5 110.5h0M612.5 113.5h0M612.5 102.5h0M613.5 107.5h0M613.5 107.5h0M613.5 106.5h0M613.5 109.5h0M614.5 107.5h0M614.5 109.5h0M614.5 103.5h0M614.5 116.5h0M615.5 113.5h0M615.5 103.5h0M615.5 105.5h0M615.5 102.5h0M616.5 84.5h0M616.5 96.5h0M616.5 92.5h0M616.5 100.5h0M617.5 105.5h0M617.5 111.5h0M617.5 120.5h0M617.5 116.5h0M618.5 124.5h0M618.5 113.5h0M618.5 118.5h0M618.5 112.5h0M619.5 104.5h0M619.5 107.5h0M619.5 95.5h0M619.5 95.5h0M620.5 94.5h0M620.5 95.5h0M620.5 101.5h0M620.5 109.5h0M621.5 100.5h0M621.5 107.5h0M621.5 107.5h0M621.5 101.5h0M622.5 115.5h0M622.5 120.5h0M622.5 103.5h0M622.5 89.5h0M623.5 96.5h0M623.5 111.5h0M623.5 121.5h0M623.5 115.5h0M624.5 129.5h0M624.5 117.5h0M624.5 91.5h0M624.5 95.5h0M625.5 120.5h0M625.5 114.5h0M625.5 119.5h0M625.5 124.5h0M625.5 115.5h0M626.5 115.5h0M626.5 112.5h0M626.5 110.5h0M626.5 106.5h0M627.5 99.5h0M627.5 114.5h0M627.5 115.5h0M627.5 113.5h0M628.5 109.5h0M628.5 114.5h0M628.5 122.5h0M628.5 118.5h0M629.5 106.5h0M629.5 122.5h0M629.5 105.5h0M629.5 125.5h0M630.5 107.5h0M630.5 107.5h0M630.5 115.5h0M630.5 113.5h0M631.5 115.5h0M631.5 96.5h0M631.5 117.5h0M631.5 120.5h0M632.5 109.5h0M632.5 102.5h0M632.5 110.5h0M632.5 114.5h0M633.5 103.5h0M633.5 120.5h0M633.5 120.5h0M633.5 124.5h0M634.5 101.5h0M634.5 132.5h0M634.5 124.5h0M634.5 111.5h0M635.5 109.5h0M635.5 96.5h0M635.5 109.5h0M635.5 117.5h0M636.5 99.5h0M636.5 103.5h0M636.5 102.5h0M636.5 103.5h0M637.5 108.5h0M637.5 126.5h0M637.5 122.5h0M637.5 94.5h0M638.5 113.5h0M638.5 129.5h0M638.5 113.5h0M638.5 104.5h0M639.5 109.5h0M639.5 113.5h0M639.5 133.5h0M639.5 113.5h0M640.5 114.5h0M640.5 97.5h0M640.5 113.5h0M640.5 114.5h0M641.5 117.5h0M641.5 114.5h0M641.5 111.5h0M641.5 118.5h0M642.5 121.5h0M642.5 124.5h0M642.5 112.5h0M642.5 116.5h0M643.5 116.5h0M643.5 126.5h0M643.5 120.5h0M643.5 130.5h0M644.5 104.5h0M644.5 102.5h0M644.5 109.5h0M644.5 114.5h0M645.5 109.5h0M645.5 126.5h0M645.5 125.5h0M645.5 102.5h0M646.5 122.5h0M646.5 114.5h0M646.5 119.5h0M646.5 135.5h0M647.5 119.5h0M647.5 105.5h0M647.5 100.5h0M647.5 102.5h0M648.5 127.5h0M648.5 118.5h0M648.5 103.5h0M648.5 100.5h0M649.5 96.5h0M649.5 94.5h0M649.5 115.5h0M649.5 119.5h0M650.5 101.5h0M650.5 112.5h0M650.5 109.5h0M650.5 112.5h0M651.5 111.5h0M651.5 98.5h0M651.5 116.5h0M651.5 122.5h0M652.5 112.5h0M652.5 105.5h0M652.5 108.5h0M652.5 106.5h0M653.5 122.5h0M653.5 112.5h0M653.5 93.5h0M653.5 105.5h0M654.5 109.5h0M654.5 92.5h0M654.5 108.5h0M654.5 96.5h0M655.5 101.5h0M655.5 99.5h0M655.5 93.5h0M655.5 81.5h0M656.5 91.5h0M656.5 111.5h0M656.5 113.5h0M656.5 106.5h0M657.5 105.5h0M657.5 97.5h0M657.5 103.5h0M657.5 102.5h0M658.5 118.5h0M658.5 104.5h0M658.5 98.5h0M658.5 87.5h0M659.5 96.5h0M659.5 103.5h0M659.5 114.5h0M659.5 104.5h0M660.5 104.5h0M660.5 105.5h0M660.5 102.5h0M660.5 99.5h0M661.5 99.5h0M661.5 81.5h0M661.5 112.5h0M661.5 117.5h0M662.5 100.5h0M662.5 114.5h0M662.5 106.5h0M662.5 104.5h0M663.5 111.5h0M663.5 96.5h0M663.5 97.5h0M663.5 102.5h0M664.5 98.5h0M664.5 95.5h0M664.5 106.5h0M664.5 98.5h0M665.5 102.5h0M665.5 104.5h0M665.5 108.5h0M665.5 86.5h0M666.5 101.5h0M666.5 116.5h0M666.5 99.5h0M666.5 126.5h0M667.5 101.5h0M667.5 96.5h0M667.5 90.5h0M667.5 102.5h0M668.5 110.5h0M668.5 84.5h0M668.5 93.5h0M668.5 91.5h0M669.5 106.5h0M669.5 98.5h0M669.5 119.5h0M669.5 99.5h0M670.5 122.5h0M670.5 113.5h0M670.5 117.5h0M670.5 92.5h0M671.5 95.5h0M671.5 109.5h0M671.5 91.5h0M671.5 103.5h0M672.5 121.5h0M672.5 107.5h0M672.5 119.5h0M672.5 103.5h0M673.5 100.5h0M673.5 110.5h0M673.5 96.5h0M673.5 93.5h0M674.5 112.5h0M674.5 98.5h0M674.5 105.5h0M674.5 106.5h0M675.5 87.5h0M675.5 110.5h0M675.5 107.5h0M675.5 104.5h0M676.5 98.5h0M676.5 96.5h0M676.5 112.5h0M676.5 90.5h0M677.5 85.5h0M677.5 84.5h0M677.5 102.5h0M677.5 108.5h0M678.5 113.5h0M678.5 100.5h0M678.5 104.5h0M678.5 104.5h0M679.5 109.5h0M679.5 123.5h0M679.5 106.5h0M679.5 105.5h0M680.5 107.5h0M680.5 116.5h0M680.5 106.5h0M680.5 105.5h0M681.5 114.5h0M681.5 97.5h0M681.5 104.5h0M681.5 102.5h0M682.5 100.5h0M682.5 106.5h0M682.5 104.5h0M682.5 98.5h0M683.5 96.5h0M683.5 95.5h0M683.5 105.5h0M683.5 96.5h0M684.5 92.5h0M684.5 116.5h0M684.5 107.5h0M684.5 104.5h0M685.5 104.5h0M685.5 86.5h0M685.5 92.5h0M685.5 105.5h0M686.5 105.5h0M686.5 116.5h0M686.5 112.5h0M686.5 90.5h0M687.5 119.5h0M687.5 97.5h0M687.5 110.5h0M687.5 106.5h0M688.5 104.5h0M688.5 85.5h0M688.5 100.5h0M688.5 98.5h0M689.5 93.5h0M689.5 123.5h0M689.5 85.5h0M689.5 118.5h0M690.5 110.5h0M690.5 97.5h0M690.5 114.5h0M690.5 119.5h0M691.5 92.5h0M691.5 106.5h0M691.5 94.5h0M691.5 99.5h0M692.5 105.5h0M692.5 86.5h0M692.5 106.5h0M692.5 83.5h0M693.5 111.5h0M693.5 112.5h0M693.5 109.5h0M693.5 101.5h0M694.5 113.5h0M694.5 109.5h0M694.5 89.5h0M694.5 101.5h0M695.5 92.5h0M695.5 100.5h0M695.5 108.5h0M695.5 110.5h0M696.5 101.5h0M696.5 103.5h0M696.5 108.5h0M696.5 108.5h0M697.5 89.5h0M697.5 93.5h0M697.5 100.5h0M697.5 106.5h0M698.5 107.5h0M698.5 83.5h0M698.5 108.5h0M698.5 80.5h0M699.5 109.5h0M699.5 116.5h0M699.5 83.5h0M699.5 104.5h0M700.5 88.5h0M700.5 99.5h0M700.5 105.5h0M700.5 94.5h0M701.5 106.5h0M701.5 99.5h0M701.5 104.5h0M701.5 119.5h0M702.5 99.5h0M702.5 108.5h0M702.5 104.5h0M702.5 99.5h0M703.5 116.5h0M703.5 98.5h0M703.5 97.5h0M703.5 84.5h0M704.5 95.5h0M704.5 100.5h0M704.5 109.5h0M704.5 103.5h0M705.5 116.5h0M705.5 99.5h0M705.5 105.5h0M705.5 107.5h0M706.5 103.5h0M706.5 99.5h0M706.5 101.5h0M706.5 114.5h0M707.5 90.5h0M707.5 103.5h0M707.5 100.5h0M707.5 103.5h0M708.5 112.5h0M708.5 101.5h0M708.5 107.5h0M708.5 111.5h0M709.5 102.5h0M709.5 96.5h0M709.5 97.5h0M709.5 102.5h0M710.5 109.5h0M710.5 106.5h0M710.5 105.5h0M710.5 116.5h0M711.5 95.5h0M711.5 103.5h0M711.5 115.5h0M711.5 89.5h0M712.5 84.5h0M712.5 115.5h0M712.5 105.5h0M712.5 111.5h0M713.5 96.5h0M713.5 115.5h0M713.5 99.5h0M713.5 100.5h0M714.5 92.5h0M714.5 120.5h0M714.5 110.5h0M714.5 105.5h0M715.5 94.5h0M715.5 103.5h0M715.5 96.5h0M715.5 99.5h0M716.5 111.5h0M716.5 105.5h0M716.5 107.5h0M716.5 106.5h0M717.5 112.5h0M717.5 96.5h0M717.5 101.5h0M717.5 120.5h0M718.5 96.5h0M718.5 108.5h0M718.5 116.5h0M718.5 92.5h0M719.5 104.5h0M719.5 100.5h0M719.5 105.5h0M719.5 104.5h0M720.5 119.5h0M720.5 96.5h0M720.5 110.5h0M720.5 103.5h0M721.5 104.5h0M721.5 112.5h0M721.5 115.5h0M721.5 105.5h0M722.5 91.5h0M722.5 109.5h0M722.5 109.5h0M722.5 103.5h0M723.5 109.5h0M723.5 91.5h0M723.5 99.5h0M723.5 79.5h0M724.5 102.5h0M724.5 82.5h0M724.5 109.5h0M724.5 102.5h0M725.5 114.5h0M725.5 108.5h0M725.5 107.5h0M725.5 99.5h0M726.5 91.5h0M726.5 107.5h0M726.5 118.5h0M726.5 105.5h0M727.5 107.5h0M727.5 110.5h0M727.5 97.5h0M727.5 94.5h0M728.5 112.5h0M728.5 112.5h0M728.5 129.5h0M728.5 112.5h0M729.5 98.5h0M729.5 114.5h0M729.5 97.5h0M729.5 99.5h0M730.5 100.5h0M730.5 100.5h0M730.5 107.5h0M730.5 96.5h0M731.5 95.5h0M731.5 102.5h0M731.5 106.5h0M731.5 93.5h0M732.5 91.5h0M732.5 111.5h0M732.5 97.5h0M732.5 105.5h0M733.5 82.5h0M733.5 109.5h0M733.5 111.5h0M733.5 114.5h0M734.5 97.5h0M734.5 115.5h0M734.5 99.5h0M734.5 110.5h0M735.5 92.5h0M735.5 90.5h0M735.5 94.5h0M735.5 123.5h0M735.5 119.5h0M736.5 130.5h0M736.5 79.5h0M736.5 111.5h0M736.5 109.5h0M737.5 105.5h0M737.5 100.5h0M737.5 109.5h0M737.5 105.5h0M738.5 106.5h0M738.5 117.5h0M738.5 88.5h0M738.5 88.5h0M739.5 105.5h0M739.5 107.5h0M739.5 87.5h0M739.5 81.5h0M740.5 105.5h0M740.5 100.5h0M740.5 109.5h0M740.5 102.5h0M741.5 128.5h0M741.5 126.5h0M741.5 101.5h0M741.5 108.5h0M742.5 102.5h0M742.5 106.5h0M742.5 100.5h0M742.5 104.5h0M743.5 108.5h0M743.5 103.5h0M743.5 113.5h0M743.5 93.5h0M744.5 116.5h0M744.5 111.5h0M744.5 99.5h0M744.5 111.5h0M745.5 98.5h0M745.5 93.5h0M745.5 100.5h0M745.5 112.5h0M746.5 89.5h0M746.5 104.5h0M746.5 117.5h0M746.5 88.5h0M747.5 107.5h0M747.5 103.5h0M747.5 100.5h0M747.5 113.5h0M748.5 100.5h0M748.5 120.5h0M748.5 118.5h0M748.5 112.5h0M749.5 87.5h0M749.5 103.5h0M749.5 97.5h0M749.5 113.5h0M750.5 103.5h0M750.5 127.5h0M750.5 111.5h0M750.5 104.5h0M751.5 114.5h0M751.5 126.5h0M751.5 123.5h0M751.5 102.5h0M752.5 95.5h0M752.5 112.5h0M752.5 93.5h0M752.5 120.5h0M753.5 102.5h0M753.5 106.5h0M753.5 98.5h0M753.5 122.5h0M754.5 99.5h0M754.5 108.5h0M754.5 117.5h0M754.5 113.5h0M755.5 111.5h0M755.5 106.5h0M755.5 117.5h0M755.5 117.5h0M756.5 108.5h0M756.5 109.5h0M756.5 104.5h0M756.5 100.5h0M757.5 126.5h0M757.5 110.5h0M757.5 107.5h0M757.5 109.5h0M758.5 119.5h0M758.5 102.5h0M758.5 92.5h0M758.5 111.5h0M759.5 116.5h0M759.5 102.5h0M759.5 109.5h0M759.5 108.5h0M760.5 107.5h0M760.5 114.5h0M760.5 110.5h0M760.5 116.5h0M761.5 127.5h0M761.5 99.5h0M761.5 107.5h0M761.5 110.5h0M762.5 96.5h0M762.5 111.5h0M762.5 98.5h0M762.5 101.5h0M763.5 112.5h0M763.5 120.5h0M763.5 104.5h0M763.5 107.5h0M764.5 98.5h0M764.5 122.5h0M764.5 109.5h0M764.5 105.5h0M765.5 104.5h0M765.5 106.5h0M765.5 104.5h0M765.5 127.5h0M766.5 109.5h0M766.5 112.5h0M766.5 120.5h0M766.5 104.5h0M767.5 109.5h0M767.5 115.5h0M767.5 117.5h0M767.5 101.5h0M768.5 127.5h0M768.5 105.5h0M768.5 114.5h0M768.5 102.5h0M769.5 84.5h0M769.5 93.5h0M769.5 104.5h0M769.5 88.5h0M770.5 84.5h0M770.5 93.5h0M770.5 85.5h0M770.5 101.5h0M771.5 97.5h0M771.5 104.5h0M771.5 107.5h0M771.5 103.5h0M772.5 110.5h0M772.5 104.5h0M772.5 81.5h0M772.5 96.5h0M773.5 105.5h0M773.5 86.5h0M773.5 89.5h0M773.5 113.5h0M774.5 110.5h0M774.5 86.5h0M774.5 102.5h0M774.5 102.5h0M775.5 108.5h0M775.5 113.5h0M775.5 92.5h0M775.5 111.5h0M776.5 98.5h0M776.5 84.5h0M776.5 98.5h0M776.5 105.5h0M777.5 97.5h0M777.5 98.5h0M777.5 107.5h0M777.5 101.5h0M778.5 114.5h0M778.5 119.5h0M778.5 108.5h0M778.5 119.5h0M779.5 109.5h0M779.5 105.5h0M779.5 102.5h0M779.5 85.5h0M780.5 112.5h0M780.5 108.5h0M780.5 108.5h0M780.5 113.5h0M781.5 83.5h0M781.5 111.5h0M781.5 106.5h0M781.5 106.5h0M782.5 79.5h0M782.5 107.5h0M782.5 112.5h0M782.5 92.5h0M783.5 111.5h0M783.5 124.5h0M783.5 94.5h0M783.5 96.5h0M784.5 119.5h0M784.5 118.5h0M784.5 107.5h0M784.5 116.5h0M785.5 121.5h0M785.5 118.5h0M785.5 89.5h0M785.5 97.5h0M786.5 118.5h0M786.5 110.5h0M786.5 107.5h0M786.5 112.5h0M787.5 109.5h0M787.5 91.5h0M787.5 114.5h0M787.5 116.5h0M788.5 109.5h0M788.5 115.5h0M788.5 113.5h0M788.5 113.5h0M789.5 118.5h0M789.5 96.5h0M789.5 115.5h0M789.5 95.5h0M790.5 117.5h0M790.5 117.5h0M790.5 106.5h0M790.5 111.5h0M791.5 100.5h0M791.5 102.5h0M791.5 85.5h0M791.5 116.5h0M792.5 118.5h0M792.5 109.5h0M792.5 111.5h0M792.5 109.5h0M793.5 82.5h0M793.5 129.5h0M793.5 102.5h0M793.5 110.5h0M794.5 108.5h0M794.5 97.5h0M794.5 108.5h0M794.5 99.5h0M795.5 94.5h0M795.5 95.5h0M795.5 124.5h0M795.5 112.5h0M796.5 118.5h0M796.5 113.5h0M796.5 108.5h0M796.5 84.5h0M797.5 111.5h0M797.5 108.5h0M797.5 106.5h0M797.5 89.5h0M798.5 110.5h0M798.5 100.5h0M798.5 96.5h0M798.5 98.5h0M799.5 122.5h0M799.5 116.5h0M799.5 97.5h0M799.5 120.5h0M800.5 106.5h0M800.5 118.5h0M800.5 100.5h0M800.5 105.5h0M801.5 118.5h0M801.5 107.5h0M801.5 114.5h0M801.5 109.5h0M802.5 91.5h0M802.5 102.5h0M802.5 101.5h0M802.5 89.5h0M803.5 103.5h0M803.5 91.5h0M803.5 100.5h0M803.5 102.5h0M804.5 108.5h0M804.5 112.5h0M804.5 114.5h0M804.5 113.5h0M805.5 99.5h0M805.5 100.5h0M805.5 112.5h0M805.5 92.5h0M806.5 110.5h0M806.5 108.5h0M806.5 117.5h0M806.5 112.5h0M807.5 95.5h0M807.5 100.5h0M807.5 110.5h0M807.5 92.5h0M808.5 105.5h0M808.5 104.5h0M808.5 94.5h0M808.5 100.5h0M809.5 107.5h0M809.5 114.5h0M809.5 91.5h0M809.5 125.5h0M810.5 110.5h0M810.5 120.5h0M810.5 110.5h0M810.5 96.5h0M811.5 107.5h0M811.5 108.5h0M811.5 105.5h0M811.5 84.5h0M812.5 90.5h0M812.5 102.5h0M812.5 110.5h0M812.5 108.5h0M813.5 101.5h0M813.5 107.5h0M813.5 106.5h0M813.5 114.5h0M814.5 117.5h0M814.5 115.5h0M814.5 103.5h0M814.5 114.5h0M815.5 80.5h0M815.5 100.5h0M815.5 99.5h0M815.5 96.5h0M816.5 116.5h0M816.5 117.5h0M816.5 109.5h0M816.5 101.5h0M817.5 102.5h0M817.5 91.5h0M817.5 93.5h0M817.5 97.5h0M818.5 96.5h0M818.5 105.5h0M818.5 99.5h0M818.5 110.5h0M819.5 112.5h0M819.5 98.5h0M819.5 123.5h0M819.5 94.5h0M820.5 89.5h0M820.5 112.5h0M820.5 100.5h0M820.5 106.5h0M821.5 116.5h0M821.5 104.5h0M821.5 102.5h0M821.5 97.5h0M822.5 110.5h0M822.5 106.5h0M822.5 113.5h0M822.5 97.5h0M823.5 108.5h0M823.5 98.5h0M823.5 113.5h0M823.5 106.5h0M824.5 115.5h0M824.5 113.5h0M824.5 95.5h0M824.5 108.5h0M825.5 107.5h0M825.5 98.5h0M825.5 112.5h0M825.5 85.5h0M826.5 111.5h0M826.5 108.5h0M826.5 82.5h0M826.5 119.5h0M827.5 85.5h0M827.5 99.5h0M827.5 97.5h0M827.5 112.5h0M828.5 100.5h0M828.5 113.5h0M828.5 91.5h0M828.5 104.5h0M829.5 107.5h0M829.5 106.5h0M829.5 103.5h0M829.5 91.5h0M830.5 97.5h0M830.5 108.5h0M830.5 109.5h0M830.5 110.5h0M831.5 93.5h0M831.5 96.5h0M831.5 111.5h0M831.5 116.5h0M832.5 102.5h0M832.5 106.5h0M832.5 96.5h0M832.5 102.5h0M833.5 97.5h0M833.5 93.5h0M833.5 91.5h0M833.5 103.5h0M834.5 94.5h0M834.5 106.5h0M834.5 112.5h0M834.5 99.5h0M835.5 89.5h0M835.5 87.5h0M835.5 102.5h0M835.5 117.5h0M836.5 98.5h0M836.5 103.5h0M836.5 95.5h0M836.5 91.5h0M837.5 105.5h0M837.5 108.5h0M837.5 105.5h0M837.5 108.5h0M838.5 110.5h0M838.5 99.5h0M838.5 108.5h0M838.5 104.5h0M839.5 104.5h0M839.5 107.5h0M839.5 95.5h0M839.5 106.5h0M840.5 102.5h0M840.5 94.5h0M840.5 103.5h0M840.5 114.5h0M841.5 106.5h0M841.5 106.5h0M841.5 95.5h0M841.5 85.5h0M842.5 100.5h0M842.5 103.5h0M842.5 87.5h0M842.5 108.5h0M843.5 99.5h0M843.5 97.5h0M843.5 102.5h0M843.5 103.5h0M844.5 100.5h0M844.5 87.5h0M844.5 96.5h0M844.5 107.5h0M845.5 99.5h0M845.5 92.5h0M845.5 84.5h0M845.5 94.5h0M845.5 100.5h0M846.5 88.5h0M846.5 93.5h0M846.5 100.5h0M846.5 108.5h0M847.5 101.5h0M847.5 92.5h0M847.5 111.5h0M847.5 116.5h0M848.5 97.5h0M848.5 115.5h0M848.5 113.5h0M848.5 104.5h0M849.5 104.5h0M849.5 101.5h0M849.5 100.5h0M849.5 97.5h0M850.5 103.5h0M850.5 109.5h0M850.5 127.5h0M850.5 90.5h0M851.5 94.5h0M851.5 96.5h0M851.5 102.5h0M851.5 110.5h0M852.5 97.5h0M852.5 103.5h0M852.5 114.5h0M852.5 92.5h0M853.5 115.5h0M853.5 106.5h0M853.5 85.5h0M853.5 109.5h0M854.5 100.5h0M854.5 92.5h0M854.5 102.5h0M854.5 115.5h0M855.5 106.5h0M855.5 103.5h0M855.5 115.5h0M855.5 88.5h0M856.5 99.5h0M856.5 95.5h0M856.5 100.5h0M856.5 99.5h0M857.5 105.5h0M857.5 115.5h0M857.5 96.5h0M857.5 102.5h0M858.5 87.5h0M858.5 113.5h0M858.5 101.5h0M858.5 81.5h0M859.5 114.5h0M859.5 113.5h0M859.5 100.5h0M859.5 86.5h0M860.5 113.5h0M860.5 102.5h0M860.5 104.5h0M860.5 108.5h0M861.5 105.5h0M861.5 91.5h0M861.5 102.5h0M861.5 115.5h0M862.5 109.5h0M862.5 103.5h0M862.5 117.5h0M862.5 111.5h0M863.5 109.5h0M863.5 124.5h0M863.5 88.5h0M863.5 121.5h0M864.5 106.5h0M864.5 109.5h0M864.5 113.5h0M864.5 96.5h0M865.5 108.5h0M865.5 117.5h0M865.5 98.5h0M865.5 105.5h0M866.5 120.5h0M866.5 124.5h0M866.5 103.5h0M866.5 113.5h0M867.5 125.5h0M867.5 107.5h0M867.5 125.5h0M867.5 119.5h0M868.5 120.5h0M868.5 131.5h0M868.5 107.5h0M868.5 103.5h0M869.5 108.5h0M869.5 110.5h0M869.5 116.5h0M869.5 115.5h0M870.5 112.5h0M870.5 108.5h0M870.5 119.5h0M870.5 114.5h0M871.5 116.5h0M871.5 109.5h0M871.5 105.5h0M871.5 103.5h0M872.5 118.5h0M872.5 118.5h0M872.5 107.5h0M872.5 116.5h0M873.5 116.5h0M873.5 109.5h0M873.5 110.5h0M873.5 100.5h0M874.5 124.5h0M874.5 102.5h0M874.5 118.5h0M874.5 107.5h0M875.5 125.5h0M875.5 115.5h0M875.5 119.5h0M875.5 96.5h0M876.5 122.5h0M876.5 102.5h0M876.5 121.5h0M876.5 123.5h0M877.5 110.5h0M877.5 103.5h0M877.5 114.5h0M877.5 107.5h0M878.5 111.5h0M878.5 114.5h0M878.5 99.5h0M878.5 113.5h0M879.5 105.5h0M879.5 124.5h0M879.5 115.5h0M879.5 104.5h0M880.5 117.5h0M880.5 132.5h0M880.5 106.5h0M880.5 107.5h0M881.5 116.5h0M881.5 112.5h0M881.5 116.5h0M881.5 109.5h0M882.5 102.5h0M882.5 110.5h0M882.5 114.5h0M882.5 117.5h0M883.5 115.5h0M883.5 118.5h0M883.5 103.5h0M883.5 122.5h0M884.5 118.5h0M884.5 110.5h0M884.5 110.5h0M884.5 111.5h0M885.5 117.5h0M885.5 111.5h0M885.5 126.5h0M885.5 127.5h0M886.5 124.5h0M886.5 109.5h0M886.5 99.5h0M886.5 117.5h0M887.5 118.5h0M887.5 116.5h0M887.5 95.5h0M887.5 111.5h0M888.5 112.5h0M888.5 118.5h0M888.5 108.5h0M888.5 100.5h0M889.5 111.5h0M889.5 120.5h0M889.5 100.5h0M889.5 113.5h0M890.5 95.5h0M890.5 122.5h0M890.5 114.5h0M890.5 110.5h0M891.5 128.5h0M891.5 112.5h0M891.5 107.5h0M891.5 114.5h0M892.5 108.5h0M892.5 111.5h0M892.5 120.5h0M892.5 106.5h0M893.5 119.5h0M893.5 116.5h0M893.5 119.5h0M893.5 106.5h0M894.5 117.5h0M894.5 117.5h0M894.5 132.5h0M894.5 115.5h0M895.5 103.5h0M895.5 131.5h0M895.5 109.5h0M895.5 113.5h0M896.5 128.5h0M896.5 117.5h0M896.5 103.5h0M896.5 113.5h0M897.5 109.5h0M897.5 102.5h0M897.5 116.5h0M897.5 104.5h0M898.5 124.5h0M898.5 121.5h0M898.5 98.5h0M898.5 99.5h0M899.5 104.5h0M899.5 126.5h0M899.5 115.5h0M899.5 121.5h0M900.5 94.5h0M900.5 125.5h0M900.5 124.5h0M900.5 118.5h0M901.5 110.5h0M901.5 118.5h0M901.5 116.5h0M901.5 110.5h0M902.5 113.5h0M902.5 129.5h0M902.5 124.5h0M902.5 96.5h0M903.5 112.5h0M903.5 95.5h0M903.5 98.5h0M903.5 102.5h0M904.5 112.5h0M904.5 97.5h0M904.5 117.5h0M904.5 90.5h0M905.5 107.5h0M905.5 107.5h0M905.5 116.5h0M905.5 117.5h0M906.5 115.5h0M906.5 117.5h0M906.5 120.5h0M906.5 122.5h0M907.5 110.5h0M907.5 100.5h0M907.5 93.5h0M907.5 104.5h0M908.5 113.5h0M908.5 106.5h0M908.5 95.5h0M908.5 111.5h0M909.5 102.5h0M909.5 108.5h0M909.5 111.5h0M909.5 117.5h0M910.5 105.5h0M910.5 119.5h0M910.5 121.5h0M910.5 108.5h0M911.5 102.5h0M911.5 103.5h0M911.5 103.5h0M911.5 115.5h0M912.5 113.5h0M912.5 101.5h0M912.5 91.5h0M912.5 97.5h0M913.5 100.5h0M913.5 110.5h0M913.5 112.5h0M913.5 118.5h0M914.5 118.5h0M914.5 123.5h0M914.5 109.5h0M914.5 121.5h0M915.5 114.5h0M915.5 125.5h0M915.5 100.5h0M915.5 105.5h0M916.5 122.5h0M916.5 108.5h0M916.5 116.5h0M916.5 120.5h0M917.5 111.5h0M917.5 104.5h0M917.5 97.5h0M917.5 109.5h0M918.5 100.5h0M918.5 105.5h0M918.5 105.5h0M918.5 102.5h0M919.5 124.5h0M919.5 116.5h0M919.5 97.5h0M919.5 124.5h0M920.5 120.5h0M920.5 93.5h0M920.5 121.5h0M920.5 110.5h0M921.5 109.5h0M921.5 114.5h0M921.5 102.5h0M921.5 102.5h0M922.5 117.5h0M922.5 92.5h0M922.5 117.5h0M922.5 113.5h0M923.5 110.5h0M923.5 106.5h0M923.5 118.5h0M923.5 105.5h0M924.5 127.5h0M924.5 111.5h0M924.5 114.5h0M924.5 112.5h0M925.5 107.5h0M925.5 103.5h0M925.5 112.5h0M925.5 105.5h0M926.5 118.5h0M926.5 108.5h0M926.5 95.5h0M926.5 110.5h0M927.5 107.5h0M927.5 105.5h0M927.5 96.5h0M927.5 101.5h0M928.5 106.5h0M928.5 113.5h0M928.5 102.5h0M928.5 129.5h0M929.5 100.5h0M929.5 111.5h0M929.5 98.5h0M929.5 105.5h0M930.5 91.5h0M930.5 110.5h0M930.5 122.5h0M930.5 104.5h0M931.5 109.5h0M931.5 105.5h0M931.5 93.5h0M931.5 112.5h0M932.5 98.5h0M932.5 96.5h0M932.5 94.5h0M932.5 122.5h0M933.5 103.5h0M933.5 111.5h0M933.5 107.5h0M933.5 112.5h0M934.5 107.5h0M934.5 95.5h0M934.5 88.5h0M934.5 98.5h0M935.5 115.5h0M935.5 92.5h0M935.5 115.5h0M935.5 108.5h0M936.5 93.5h0M936.5 110.5h0M936.5 97.5h0M936.5 107.5h0M937.5 114.5h0M937.5 102.5h0M937.5 109.5h0M937.5 87.5h0M938.5 86.5h0M938.5 89.5h0M938.5 113.5h0M938.5 86.5h0M939.5 101.5h0M939.5 99.5h0M939.5 103.5h0M939.5 109.5h0M940.5 103.5h0M940.5 96.5h0M940.5 89.5h0M940.5 99.5h0M941.5 104.5h0M941.5 109.5h0M941.5 107.5h0M941.5 88.5h0M942.5 98.5h0M942.5 102.5h0M942.5 119.5h0M942.5 120.5h0M943.5 98.5h0M943.5 98.5h0M943.5 93.5h0M943.5 102.5h0M944.5 110.5h0M944.5 119.5h0M944.5 112.5h0M944.5 125.5h0M945.5 102.5h0M945.5 100.5h0M945.5 91.5h0M945.5 120.5h0M946.5 117.5h0M946.5 98.5h0M946.5 101.5h0M946.5 122.5h0M947.5 111.5h0M947.5 104.5h0M947.5 108.5h0M947.5 101.5h0M948.5 104.5h0M948.5 110.5h0M948.5 101.5h0M948.5 106.5h0M949.5 94.5h0M949.5 118.5h0M949.5 108.5h0M949.5 112.5h0M950.5 108.5h0M950.5 102.5h0M950.5 100.5h0M950.5 125.5h0M951.5 95.5h0M951.5 102.5h0M951.5 102.5h0M951.5 107.5h0M952.5 98.5h0M952.5 104.5h0M952.5 124.5h0M952.5 114.5h0M953.5 111.5h0M953.5 112.5h0M953.5 113.5h0M953.5 103.5h0M954.5 119.5h0M954.5 115.5h0M954.5 118.5h0M954.5 109.5h0M955.5 105.5h0M955.5 117.5h0M955.5 105.5h0M955.5 114.5h0M955.5 95.5h0M956.5 129.5h0M956.5 109.5h0M956.5 97.5h0M956.5 112.5h0M957.5 119.5h0M957.5 117.5h0M957.5 103.5h0M957.5 114.5h0M958.5 98.5h0M958.5 108.5h0M958.5 114.5h0M958.5 113.5h0M959.5 104.5h0M959.5 99.5h0M959.5 116.5h0M959.5 119.5h0M960.5 119.5h0M960.5 104.5h0M960.5 90.5h0M960.5 113.5h0M961.5 102.5h0M961.5 112.5h0M961.5 99.5h0M961.5 122.5h0M962.5 103.5h0M962.5 120.5h0M962.5 116.5h0M962.5 105.5h0M963.5 111.5h0M963.5 109.5h0M963.5 103.5h0M963.5 107.5h0M964.5 94.5h0M964.5 101.5h0M964.5 116.5h0M964.5 109.5h0M965.5 113.5h0M965.5 112.5h0M965.5 91.5h0M965.5 115.5h0M966.5 96.5h0M966.5 93.5h0M966.5 81.5h0M966.5 108.5h0M967.5 106.5h0M967.5 106.5h0M967.5 112.5h0M967.5 91.5h0M968.5 89.5h0M968.5 129.5h0M968.5 111.5h0M968.5 97.5h0M969.5 118.5h0M969.5 115.5h0M969.5 108.5h0M969.5 109.5h0M970.5 110.5h0M970.5 110.5h0M970.5 90.5h0M970.5 129.5h0M971.5 113.5h0M971.5 119.5h0M971.5 106.5h0M971.5 113.5h0M972.5 104.5h0M972.5 109.5h0M972.5 85.5h0M972.5 120.5h0M973.5 113.5h0M973.5 100.5h0M973.5 112.5h0M973.5 107.5h0M974.5 122.5h0M974.5 101.5h0M974.5 109.5h0M974.5 102.5h0M975.5 116.5h0M975.5 113.5h0M975.5 115.5h0M975.5 91.5h0M976.5 123.5h0M976.5 103.5h0M976.5 104.5h0M976.5 94.5h0M977.5 104.5h0M977.5 116.5h0M977.5 101.5h0M977.5 122.5h0M978.5 95.5h0M978.5 107.5h0M978.5 112.5h0M978.5 110.5h0M979.5 100.5h0M979.5 120.5h0M979.5 88.5h0M979.5 112.5h0M980.5 90.5h0M980.5 104.5h0M980.5 86.5h0M980.5 116.5h0M981.5 96.5h0M981.5 106.5h0M981.5 111.5h0M981.5 97.5h0M982.5 107.5h0M982.5 112.5h0M982.5 107.5h0M982.5 112.5h0M983.5 107.5h0M983.5 106.5h0M983.5 94.5h0M983.5 106.5h0M984.5 112.5h0M984.5 98.5h0M984.5 109.5h0M984.5 114.5h0M985.5 116.5h0M985.5 88.5h0M985.5 106.5h0M985.5 89.5h0M986.5 114.5h0M986.5 115.5h0M986.5 88.5h0M986.5 108.5h0M987.5 108.5h0M987.5 108.5h0M987.5 116.5h0M987.5 96.5h0M988.5 118.5h0M988.5 99.5h0M988.5 117.5h0M988.5 80.5h0M989.5 100.5h0M989.5 96.5h0M989.5 123.5h0M989.5 104.5h0M990.5 114.5h0M990.5 116.5h0M990.5 116.5h0M990.5 100.5h0M991.5 108.5h0M991.5 113.5h0M991.5 114.5h0M991.5 115.5h0M992.5 114.5h0M992.5 111.5h0M992.5 119.5h0M992.5 117.5h0M993.5 129.5h0M993.5 109.5h0M993.5 103.5h0M993.5 113.5h0M994.5 95.5h0M994.5 116.5h0M994.5 109.5h0M994.5 97.5h0M995.5 107.5h0M995.5 116.5h0M995.5 105.5h0M995.5 113.5h0M996.5 98.5h0M996.5 101.5h0M996.5 111.5h0M996.5 104.5h0M997.5 91.5h0M997.5 97.5h0M997.5 100.5h0M997.5 110.5h0M998.5 114.5h0M998.5 115.5h0M998.5 98.5h0M998.5 118.5h0M999.5 104.5h0M999.5 92.5h0M999.5 122.5h0M999.5 104.5h0M1000.5 116.5h0M1000.5 108.5h0M1000.5 102.5h0M1000.5 115.5h0M1001.5 118.5h0M1001.5 110.5h0M1001.5 104.5h0M1001.5 109.5h0M1002.5 114.5h0M1002.5 98.5h0M1002.5 115.5h0M1002.5 118.5h0M1003.5 104.5h0M1003.5 83.5h0M1003.5 109.5h0M1003.5 105.5h0M1004.5 113.5h0M1004.5 110.5h0M1004.5 114.5h0M1004.5 101.5h0M1005.5 110.5h0M1005.5 111.5h0M1005.5 95.5h0M1005.5 117.5h0M1006.5 95.5h0M1006.5 106.5h0M1006.5 112.5h0M1006.5 104.5h0M1007.5 107.5h0M1007.5 101.5h0M1007.5 106.5h0M1007.5 85.5h0M1008.5 93.5h0M1008.5 93.5h0M1008.5 115.5h0M1008.5 107.5h0M1009.5 92.5h0M1009.5 98.5h0M1009.5 104.5h0M1009.5 105.5h0M1010.5 93.5h0M1010.5 121.5h0M1010.5 112.5h0M1010.5 116.5h0M1011.5 92.5h0M1011.5 116.5h0M1011.5 106.5h0M1011.5 90.5h0M1012.5 107.5h0M1012.5 101.5h0M1012.5 104.5h0M1012.5 97.5h0M1013.5 82.5h0M1013.5 114.5h0M1013.5 104.5h0M1013.5 87.5h0M1014.5 80.5h0M1014.5 106.5h0M1014.5 90.5h0M1014.5 97.5h0M1015.5 97.5h0M1015.5 117.5h0M1015.5 118.5h0M1015.5 102.5h0M1016.5 105.5h0M1016.5 105.5h0M1016.5 114.5h0M1016.5 89.5h0M1017.5 106.5h0M1017.5 97.5h0M1017.5 106.5h0M1017.5 100.5h0M1018.5 96.5h0M1018.5 107.5h0M1018.5 113.5h0M1018.5 109.5h0M1019.5 104.5h0M1019.5 108.5h0M1019.5 84.5h0M1019.5 108.5h0M1020.5 96.5h0M1020.5 96.5h0M1020.5 102.5h0M1020.5 113.5h0M1021.5 99.5h0M1021.5 94.5h0M1021.5 102.5h0M1021.5 104.5h0M1022.5 123.5h0M1022.5 113.5h0M1022.5 105.5h0M1022.5 102.5h0M1023.5 96.5h0M1023.5 106.5h0M1023.5 102.5h0M1023.5 113.5h0M1024.5 97.5h0M1024.5 96.5h0M1024.5 105.5h0M1024.5 94.5h0M1025.5 106.5h0M1025.5 108.5h0M1025.5 106.5h0M1025.5 83.5h0M1026.5 118.5h0M1026.5 102.5h0M1026.5 107.5h0M1026.5 103.5h0M1027.5 117.5h0M1027.5 96.5h0M1027.5 97.5h0M1027.5 106.5h0M1028.5 108.5h0M1028.5 103.5h0M1028.5 94.5h0M1028.5 117.5h0M1029.5 89.5h0M1029.5 106.5h0M1029.5 95.5h0M1029.5 111.5h0M1030.5 84.5h0M1030.5 101.5h0M1030.5 85.5h0M1030.5 109.5h0M1031.5 109.5h0M1031.5 92.5h0M1031.5 96.5h0M1031.5 100.5h0M1032.5 91.5h0M1032.5 99.5h0M1032.5 106.5h0M1032.5 120.5h0M1033.5 124.5h0M1033.5 97.5h0M1033.5 97.5h0M1033.5 111.5h0M1034.5 98.5h0M1034.5 105.5h0M1034.5 103.5h0M1034.5 93.5h0M1035.5 117.5h0M1035.5 100.5h0M1035.5 98.5h0M1035.5 105.5h0M1036.5 102.5h0M1036.5 114.5h0M1036.5 102.5h0M1036.5 97.5h0M1037.5 96.5h0M1037.5 110.5h0M1037.5 96.5h0M1037.5 101.5h0M1038.5 98.5h0M1038.5 105.5h0M1038.5 99.5h0M1038.5 104.5h0M1039.5 81.5h0M1039.5 109.5h0M1039.5 95.5h0M1039.5 107.5h0M1040.5 120.5h0M1040.5 102.5h0M1040.5 95.5h0M1040.5 100.5h0M1041.5 100.5h0M1041.5 115.5h0M1041.5 105.5h0M1041.5 121.5h0M1042.5 90.5h0M1042.5 93.5h0M1042.5 118.5h0M1042.5 112.5h0M1043.5 119.5h0M1043.5 115.5h0M1043.5 112.5h0M1043.5 119.5h0M1044.5 113.5h0M1044.5 102.5h0M1044.5 111.5h0M1044.5 101.5h0M1045.5 110.5h0M1045.5 107.5h0M1045.5 120.5h0M1045.5 99.5h0M1046.5 119.5h0M1046.5 112.5h0M1046.5 120.5h0M1046.5 103.5h0M1047.5 118.5h0M1047.5 103.5h0M1047.5 89.5h0M1047.5 105.5h0M1048.5 129.5h0M1048.5 98.5h0M1048.5 107.5h0M1048.5 102.5h0M1049.5 104.5h0M1049.5 97.5h0M1049.5 98.5h0M1049.5 109.5h0M1050.5 120.5h0M1050.5 109.5h0M1050.5 101.5h0M1050.5 125.5h0M1051.5 107.5h0M1051.5 124.5h0M1051.5 97.5h0M1051.5 89.5h0M1052.5 99.5h0M1052.5 112.5h0M1052.5 100.5h0M1052.5 95.5h0M1053.5 91.5h0M1053.5 94.5h0M1053.5 97.5h0M1053.5 117.5h0M1054.5 109.5h0M1054.5 103.5h0M1054.5 108.5h0M1054.5 126.5h0M1055.5 110.5h0M1055.5 115.5h0M1055.5 106.5h0M1055.5 105.5h0M1056.5 121.5h0M1056.5 115.5h0M1056.5 106.5h0M1056.5 117.5h0M1057.5 108.5h0M1057.5 115.5h0M1057.5 113.5h0M1057.5 98.5h0M1058.5 108.5h0M1058.5 111.5h0M1058.5 90.5h0M1058.5 108.5h0M1059.5 105.5h0M1059.5 105.5h0M1059.5 117.5h0M1059.5 98.5h0M1060.5 95.5h0M1060.5 107.5h0M1060.5 95.5h0M1060.5 91.5h0M1061.5 113.5h0M1061.5 98.5h0M1061.5 85.5h0M1061.5 84.5h0M1062.5 99.5h0M1062.5 102.5h0M1062.5 108.5h0M1062.5 91.5h0M1063.5 96.5h0M1063.5 111.5h0M1063.5 91.5h0M1063.5 113.5h0M1064.5 108.5h0M1064.5 103.5h0M1064.5 113.5h0M1064.5 90.5h0M1065.5 106.5h0M1065.5 113.5h0M1065.5 99.5h0M1065.5 102.5h0M1065.5 111.5h0M1066.5 107.5h0M1066.5 93.5h0M1066.5 93.5h0M1066.5 116.5h0M1067.5 92.5h0M1067.5 92.5h0M1067.5 90.5h0M1067.5 106.5h0M1068.5 109.5h0M1068.5 103.5h0M1068.5 107.5h0M1068.5 104.5h0M1069.5 107.5h0M1069.5 104.5h0M1069.5 106.5h0M1069.5 101.5h0M1070.5 100.5h0M1070.5 104.5h0M1070.5 107.5h0M1070.5 85.5h0M1071.5 92.5h0M1071.5 97.5h0M1071.5 109.5h0M1071.5 95.5h0M1072.5 103.5h0M1072.5 95.5h0M1072.5 99.5h0M1072.5 111.5h0M1073.5 101.5h0M1073.5 111.5h0M1073.5 91.5h0M1073.5 90.5h0M1074.5 88.5h0M1074.5 125.5h0M1074.5 110.5h0M1074.5 109.5h0M1075.5 116.5h0M1075.5 100.5h0M1075.5 95.5h0M1075.5 91.5h0M1076.5 93.5h0M1076.5 102.5h0M1076.5 86.5h0M1076.5 99.5h0M1077.5 127.5h0M1077.5 105.5h0M1077.5 109.5h0M1077.5 99.5h0M1078.5 106.5h0M1078.5 105.5h0M1078.5 88.5h0M1078.5 109.5h0M1079.5 115.5h0M1079.5 100.5h0M1079.5 96.5h0M1079.5 103.5h0M1080.5 103.5h0M1080.5 108.5h0M1080.5 114.5h0M1080.5 109.5h0M1081.5 112.5h0M1081.5 90.5h0M1081.5 105.5h0M1081.5 88.5h0M1082.5 104.5h0M1082.5 111.5h0M1082.5 101.5h0M1082.5 101.5h0M1083.5 89.5h0M1083.5 121.5h0M1083.5 106.5h0M1083.5 99.5h0M1084.5 109.5h0M1084.5 101.5h0M1084.5 105.5h0M1084.5 88.5h0M1085.5 90.5h0M1085.5 121.5h0M1085.5 116.5h0M1085.5 110.5h0M1086.5 103.5h0M1086.5 104.5h0M1086.5 107.5h0M1086.5 96.5h0M1087.5 94.5h0M1087.5 102.5h0M1087.5 105.5h0M1087.5 102.5h0M1088.5 110.5h0M1088.5 94.5h0M1088.5 94.5h0M1088.5 111.5h0M1089.5 88.5h0M1089.5 103.5h0M1089.5 94.5h0M1089.5 103.5h0M1090.5 104.5h0M1090.5 95.5h0M1090.5 112.5h0M1090.5 105.5h0M1091.5 114.5h0M1091.5 98.5h0M1091.5 106.5h0M1091.5 107.5h0M1092.5 109.5h0M1092.5 98.5h0M1092.5 102.5h0M1092.5 107.5h0M1093.5 109.5h0M1093.5 87.5h0M1093.5 91.5h0M1093.5 116.5h0M1094.5 94.5h0M1094.5 101.5h0M1094.5 104.5h0M1094.5 103.5h0M1095.5 120.5h0M1095.5 83.5h0M1095.5 87.5h0M1095.5 108.5h0M1096.5 108.5h0M1096.5 107.5h0M1096.5 115.5h0M1096.5 103.5h0M1097.5 109.5h0M1097.5 119.5h0M1097.5 113.5h0M1097.5 115.5h0M1098.5 114.5h0M1098.5 112.5h0M1098.5 102.5h0M1098.5 113.5h0M1099.5 123.5h0M1099.5 94.5h0M1099.5 114.5h0M1099.5 94.5h0M1100.5 106.5h0M1100.5 102.5h0M1100.5 115.5h0M1100.5 107.5h0M1101.5 111.5h0M1101.5 108.5h0M1101.5 102.5h0M1101.5 110.5h0M1102.5 98.5h0M1102.5 119.5h0M1102.5 116.5h0M1102.5 102.5h0M1103.5 101.5h0M1103.5 95.5h0M1103.5 89.5h0M1103.5 101.5h0M1104.5 98.5h0M1104.5 103.5h0M1104.5 104.5h0M1104.5 106.5h0M1105.5 104.5h0M1105.5 110.5h0M1105.5 106.5h0M1105.5 97.5h0M1106.5 100.5h0M1106.5 93.5h0M1106.5 109.5h0M1106.5 108.5h0M1107.5 101.5h0M1107.5 113.5h0M1107.5 113.5h0M1107.5 99.5h0M1108.5 108.5h0M1108.5 96.5h0M1108.5 104.5h0M1108.5 109.5h0M1109.5 114.5h0M1109.5 93.5h0M1109.5 106.5h0M1109.5 113.5h0M1110.5 119.5h0M1110.5 116.5h0M1110.5 109.5h0M1110.5 93.5h0M1111.5 114.5h0M1111.5 103.5h0M1111.5 103.5h0M1111.5 114.5h0M1112.5 117.5h0M1112.5 97.5h0M1112.5 124.5h0M1112.5 94.5h0M1113.5 106.5h0M1113.5 121.5h0M1113.5 87.5h0M1113.5 107.5h0M1114.5 90.5h0M1114.5 104.5h0M1114.5 113.5h0M1114.5 95.5h0M1115.5 88.5h0M1115.5 93.5h0M1115.5 116.5h0M1115.5 100.5h0M1116.5 116.5h0M1116.5 111.5h0M1116.5 92.5h0M1116.5 119.5h0M1117.5 81.5h0M1117.5 120.5h0M1117.5 118.5h0M1117.5 98.5h0M1118.5 108.5h0M1118.5 107.5h0M1118.5 114.5h0M1118.5 99.5h0M1119.5 104.5h0M1119.5 107.5h0M1119.5 113.5h0M1119.5 119.5h0M1120.5 106.5h0M1120.5 125.5h0M1120.5 112.5h0M1120.5 100.5h0M1121.5 99.5h0M1121.5 110.5h0M1121.5 129.5h0M1121.5 100.5h0M1122.5 97.5h0M1122.5 105.5h0M1122.5 93.5h0M1122.5 96.5h0M1123.5 121.5h0M1123.5 108.5h0M1123.5 110.5h0M1123.5 90.5h0M1124.5 95.5h0M1124.5 105.5h0M1124.5 100.5h0M1124.5 97.5h0M1125.5 112.5h0M1125.5 108.5h0M1125.5 107.5h0M1125.5 110.5h0M1126.5 109.5h0M1126.5 104.5h0M1126.5 117.5h0M1126.5 116.5h0M1127.5 98.5h0M1127.5 90.5h0M1127.5 86.5h0M1127.5 121.5h0M1128.5 102.5h0M1128.5 113.5h0M1128.5 110.5h0M1128.5 107.5h0M1129.5 101.5h0M1129.5 99.5h0M1129.5 127.5h0M1129.5 110.5h0M1130.5 94.5h0M1130.5 104.5h0M1130.5 119.5h0M1130.5 113.5h0M1131.5 112.5h0M1131.5 94.5h0M1131.5 87.5h0M1131.5 114.5h0M1132.5 99.5h0M1132.5 107.5h0M1132.5 99.5h0M1132.5 106.5h0M1133.5 114.5h0M1133.5 110.5h0M1133.5 110.5h0M1133.5 90.5h0M1134.5 111.5h0M1134.5 99.5h0M1134.5 112.5h0M1134.5 110.5h0M1135.5 102.5h0M1135.5 110.5h0M1135.5 84.5h0M1135.5 91.5h0M1136.5 115.5h0M1136.5 99.5h0M1136.5 89.5h0M1136.5 115.5h0M1137.5 108.5h0M1137.5 89.5h0M1137.5 112.5h0M1137.5 98.5h0M1138.5 105.5h0M1138.5 103.5h0M1138.5 114.5h0M1138.5 105.5h0M1139.5 108.5h0M1139.5 87.5h0M1139.5 98.5h0M1139.5 103.5h0M1140.5 105.5h0M1140.5 98.5h0M1140.5 119.5h0M1140.5 114.5h0M1141.5 113.5h0M1141.5 112.5h0M1141.5 119.5h0M1141.5 99.5h0M1142.5 109.5h0M1142.5 92.5h0M1142.5 106.5h0M1142.5 108.5h0M1143.5 100.5h0M1143.5 100.5h0M1143.5 107.5h0M1143.5 99.5h0M1144.5 92.5h0M1144.5 109.5h0M1144.5 92.5h0M1144.5 106.5h0M1145.5 96.5h0M1145.5 105.5h0M1145.5 108.5h0M1145.5 102.5h0M1146.5 115.5h0M1146.5 119.5h0M1146.5 105.5h0M1146.5 107.5h0M1147.5 115.5h0M1147.5 83.5h0M1147.5 101.5h0M1147.5 111.5h0M1148.5 99.5h0M1148.5 99.5h0M1148.5 108.5h0M1148.5 107.5h0M1149.5 121.5h0M1149.5 102.5h0M1149.5 85.5h0M1149.5 93.5h0M1150.5 94.5h0M1150.5 110.5h0M1150.5 114.5h0M1150.5 96.5h0M1151.5 102.5h0M1151.5 106.5h0M1151.5 107.5h0M1151.5 95.5h0M1152.5 98.5h0M1152.5 109.5h0M1152.5 106.5h0M1152.5 119.5h0M1153.5 115.5h0M1153.5 99.5h0M1153.5 109.5h0M1153.5 112.5h0M1154.5 102.5h0M1154.5 92.5h0M1154.5 112.5h0M1154.5 108.5h0M1155.5 108.5h0M1155.5 81.5h0M1155.5 96.5h0M1155.5 103.5h0M1156.5 119.5h0M1156.5 99.5h0M1156.5 101.5h0M1156.5 109.5h0M1157.5 115.5h0M1157.5 112.5h0M1157.5 124.5h0M1157.5 113.5h0M1158.5 114.5h0M1158.5 118.5h0M1158.5 114.5h0M1158.5 125.5h0M1159.5 100.5h0M1159.5 114.5h0M1159.5 123.5h0M1159.5 105.5h0M1160.5 108.5h0M1160.5 118.5h0M1160.5 126.5h0M1160.5 115.5h0M1161.5 110.5h0M1161.5 108.5h0M1161.5 106.5h0M1161.5 106.5h0M1162.5 128.5h0M1162.5 114.5h0M1162.5 132.5h0M1162.5 105.5h0M1163.5 111.5h0M1163.5 106.5h0M1163.5 115.5h0M1163.5 115.5h0M1164.5 120.5h0M1164.5 96.5h0M1164.5 117.5h0M1164.5 89.5h0M1165.5 102.5h0M1165.5 117.5h0M1165.5 112.5h0M1165.5 111.5h0M1166.5 120.5h0M1166.5 115.5h0M1166.5 112.5h0M1166.5 119.5h0M1167.5 111.5h0M1167.5 103.5h0M1167.5 107.5h0M1167.5 112.5h0M1168.5 116.5h0M1168.5 108.5h0M1168.5 120.5h0M1168.5 121.5h0M1169.5 102.5h0M1169.5 118.5h0M1169.5 127.5h0M1169.5 106.5h0M1170.5 108.5h0M1170.5 104.5h0M1170.5 116.5h0M1170.5 103.5h0M1171.5 116.5h0M1171.5 124.5h0M1171.5 116.5h0M1171.5 112.5h0M1172.5 124.5h0M1172.5 116.5h0M1172.5 112.5h0M1172.5 118.5h0M1173.5 114.5h0M1173.5 115.5h0M1173.5 122.5h0M1173.5 111.5h0M1174.5 109.5h0M1174.5 132.5h0M1174.5 121.5h0M1174.5 106.5h0M1175.5 110.5h0M1175.5 131.5h0M1175.5 112.5h0M1175.5 100.5h0M1175.5 106.5h0M1176.5 107.5h0M1176.5 115.5h0M1176.5 114.5h0M1176.5 125.5h0M1177.5 114.5h0M1177.5 91.5h0M1177.5 115.5h0M1177.5 122.5h0M1178.5 109.5h0M1178.5 132.5h0M1178.5 91.5h0M1178.5 108.5h0M1179.5 117.5h0M1179.5 117.5h0M1179.5 122.5h0M1179.5 113.5h0M1180.5 114.5h0M1180.5 128.5h0M1180.5 104.5h0M1180.5 117.5h0M1181.5 124.5h0M1181.5 105.5h0M1181.5 107.5h0M1181.5 119.5h0M1182.5 120.5h0M1182.5 103.5h0M1182.5 118.5h0M1182.5 112.5h0M1183.5 100.5h0M1183.5 125.5h0M1183.5 127.5h0M1183.5 121.5h0M1184.5 119.5h0M1184.5 113.5h0M1184.5 103.5h0M1184.5 116.5h0M1185.5 95.5h0M1185.5 109.5h0M1185.5 128.5h0M1185.5 111.5h0M1186.5 103.5h0M1186.5 98.5h0M1186.5 115.5h0M1186.5 109.5h0M1187.5 85.5h0M1187.5 105.5h0M1187.5 114.5h0M1187.5 119.5h0M1188.5 109.5h0M1188.5 101.5h0M1188.5 114.5h0M1188.5 90.5h0M1189.5 110.5h0M1189.5 120.5h0M1189.5 96.5h0M1189.5 102.5h0M1190.5 104.5h0M1190.5 89.5h0M1190.5 107.5h0M1190.5 95.5h0M1191.5 107.5h0M1191.5 85.5h0M1191.5 102.5h0M1191.5 102.5h0M1192.5 96.5h0M1192.5 103.5h0M1192.5 97.5h0M1192.5 104.5h0M1193.5 96.5h0M1193.5 101.5h0M1193.5 107.5h0M1193.5 96.5h0M1194.5 97.5h0M1194.5 111.5h0M1194.5 104.5h0M1194.5 117.5h0M1195.5 101.5h0M1195.5 93.5h0M1195.5 110.5h0M1195.5 99.5h0M1196.5 91.5h0M1196.5 87.5h0M1196.5 94.5h0M1196.5 118.5h0M1197.5 106.5h0M1197.5 98.5h0M1197.5 99.5h0M1197.5 101.5h0M1198.5 110.5h0M1198.5 118.5h0M1198.5 98.5h0M1198.5 90.5h0M1199.5 106.5h0M1199.5 96.5h0M1199.5 106.5h0M1199.5 103.5h0M1200.5 107.5h0M1200.5 93.5h0M1200.5 110.5h0M1200.5 100.5h0M1201.5 93.5h0M1201.5 102.5h0M1201.5 113.5h0M1201.5 98.5h0M1202.5 104.5h0M1202.5 114.5h0M1202.5 104.5h0M1202.5 106.5h0M1203.5 97.5h0M1203.5 108.5h0M1203.5 104.5h0M1203.5 99.5h0M1204.5 123.5h0M1204.5 97.5h0M1204.5 107.5h0M1204.5 116.5h0M1205.5 107.5h0M1205.5 98.5h0M1205.5 115.5h0M1205.5 115.5h0M1206.5 97.5h0M1206.5 95.5h0M1206.5 92.5h0M1206.5 111.5h0M1207.5 121.5h0M1207.5 121.5h0M1207.5 116.5h0M1207.5 122.5h0M1208.5 109.5h0M1208.5 101.5h0M1208.5 123.5h0M1208.5 99.5h0M1209.5 121.5h0M1209.5 120.5h0M1209.5 126.5h0M1209.5 106.5h0M1210.5 114.5h0M1210.5 113.5h0M1210.5 128.5h0M1210.5 119.5h0M1211.5 110.5h0M1211.5 122.5h0M1211.5 94.5h0M1211.5 110.5h0M1212.5 103.5h0M1212.5 116.5h0M1212.5 104.5h0M1212.5 101.5h0M1213.5 88.5h0M1213.5 122.5h0M1213.5 92.5h0M1213.5 123.5h0M1214.5 112.5h0M1214.5 117.5h0M1214.5 115.5h0M1214.5 130.5h0M1215.5 116.5h0M1215.5 124.5h0M1215.5 115.5h0M1215.5 110.5h0M1216.5 112.5h0M1216.5 114.5h0M1216.5 99.5h0M1216.5 109.5h0M1217.5 107.5h0M1217.5 99.5h0M1217.5 113.5h0M1217.5 112.5h0M1218.5 106.5h0M1218.5 115.5h0M1218.5 100.5h0M1218.5 118.5h0M1219.5 115.5h0M1219.5 114.5h0M1219.5 116.5h0M1219.5 113.5h0M1220.5 117.5h0M1220.5 134.5h0M1220.5 101.5h0M1220.5 117.5h0M1221.5 106.5h0M1221.5 122.5h0M1221.5 107.5h0M1221.5 124.5h0M1222.5 98.5h0M1222.5 114.5h0M1222.5 117.5h0M1222.5 121.5h0M1223.5 133.5h0M1223.5 118.5h0M1223.5 119.5h0M1223.5 119.5h0M1224.5 118.5h0M1224.5 104.5h0M1224.5 117.5h0M1224.5 117.5h0M1225.5 120.5h0M1225.5 123.5h0M1225.5 110.5h0M1225.5 117.5h0M1226.5 117.5h0M1226.5 111.5h0M1226.5 113.5h0M1226.5 106.5h0M1227.5 106.5h0M1227.5 125.5h0M1227.5 120.5h0M1227.5 104.5h0M1228.5 117.5h0M1228.5 107.5h0M1228.5 121.5h0M1228.5 135.5h0M1229.5 133.5h0M1229.5 120.5h0M1229.5 117.5h0M1229.5 90.5h0M1230.5 106.5h0M1230.5 106.5h0M1230.5 104.5h0M1230.5 127.5h0M1231.5 113.5h0M1231.5 114.5h0M1231.5 93.5h0M1231.5 119.5h0M1232.5 126.5h0M1232.5 112.5h0M1232.5 115.5h0M1232.5 112.5h0M1233.5 111.5h0M1233.5 111.5h0M1233.5 119.5h0M1233.5 117.5h0M1234.5 90.5h0M1234.5 118.5h0M1234.5 107.5h0M1234.5 121.5h0M1235.5 127.5h0M1235.5 102.5h0M1235.5 109.5h0M1235.5 97.5h0M1236.5 99.5h0M1236.5 107.5h0M1236.5 116.5h0M1236.5 89.5h0M1237.5 107.5h0M1237.5 86.5h0M1237.5 100.5h0M1237.5 97.5h0M1238.5 100.5h0M1238.5 101.5h0M1238.5 107.5h0M1238.5 81.5h0M1239.5 112.5h0M1239.5 117.5h0M1239.5 101.5h0M1239.5 109.5h0M1240.5 93.5h0M1240.5 105.5h0M1240.5 91.5h0M1240.5 102.5h0M1241.5 110.5h0M1241.5 106.5h0M1241.5 96.5h0M1241.5 109.5h0M1242.5 111.5h0M1242.5 105.5h0M1242.5 101.5h0M1242.5 92.5h0M1243.5 100.5h0M1243.5 96.5h0M1243.5 107.5h0M1243.5 87.5h0M1244.5 84.5h0M1244.5 112.5h0M1244.5 104.5h0M1244.5 108.5h0M1245.5 104.5h0M1245.5 110.5h0M1245.5 114.5h0M1245.5 120.5h0M1246.5 113.5h0M1246.5 108.5h0M1246.5 99.5h0M1246.5 104.5h0M1247.5 113.5h0M1247.5 116.5h0M1247.5 123.5h0M1247.5 103.5h0M1248.5 109.5h0M1248.5 104.5h0M1248.5 103.5h0M1248.5 105.5h0M1249.5 111.5h0M1249.5 113.5h0M1249.5 119.5h0M1249.5 116.5h0M1250.5 106.5h0M1250.5 88.5h0M1250.5 114.5h0M1250.5 108.5h0M1251.5 108.5h0M1251.5 110.5h0M1251.5 114.5h0M1251.5 111.5h0M1252.5 113.5h0M1252.5 128.5h0M1252.5 103.5h0M1252.5 127.5h0M1253.5 116.5h0M1253.5 115.5h0M1253.5 107.5h0M1253.5 113.5h0M1254.5 116.5h0M1254.5 119.5h0M1254.5 109.5h0M1254.5 114.5h0M1255.5 117.5h0M1255.5 122.5h0M1255.5 118.5h0M1255.5 108.5h0M1256.5 123.5h0M1256.5 108.5h0M1256.5 108.5h0M1256.5 97.5h0M1257.5 114.5h0M1257.5 116.5h0M1257.5 108.5h0M1257.5 110.5h0M1258.5 129.5h0M1258.5 94.5h0M1258.5 103.5h0M1258.5 104.5h0M1259.5 112.5h0M1259.5 101.5h0M1259.5 107.5h0M1259.5 88.5h0M1260.5 97.5h0M1260.5 90.5h0M1260.5 115.5h0M1260.5 112.5h0M1261.5 108.5h0M1261.5 109.5h0M1261.5 88.5h0M1261.5 100.5h0M1262.5 113.5h0M1262.5 106.5h0M1262.5 86.5h0M1262.5 107.5h0M1263.5 98.5h0M1263.5 119.5h0M1263.5 109.5h0M1263.5 105.5h0M1264.5 106.5h0M1264.5 104.5h0M1264.5 101.5h0M1264.5 93.5h0M1265.5 119.5h0M1265.5 103.5h0M1265.5 97.5h0M1265.5 102.5h0M1266.5 93.5h0M1266.5 105.5h0M1266.5 108.5h0M1266.5 111.5h0M1267.5 95.5h0M1267.5 115.5h0M1267.5 108.5h0M1267.5 104.5h0M1268.5 98.5h0M1268.5 107.5h0M1268.5 112.5h0M1268.5 98.5h0M1269.5 114.5h0M1269.5 111.5h0M1269.5 122.5h0M1269.5 103.5h0M1270.5 103.5h0M1270.5 120.5h0M1270.5 106.5h0M1270.5 99.5h0M1271.5 110.5h0M1271.5 119.5h0M1271.5 105.5h0M1271.5 98.5h0M1272.5 121.5h0M1272.5 96.5h0M1272.5 105.5h0M1272.5 95.5h0M1273.5 114.5h0M1273.5 95.5h0M1273.5 101.5h0M1273.5 97.5h0M1274.5 104.5h0M1274.5 95.5h0M1274.5 106.5h0M1274.5 108.5h0M1275.5 113.5h0M1275.5 118.5h0M1275.5 104.5h0M1275.5 107.5h0M1276.5 105.5h0M1276.5 107.5h0M1276.5 101.5h0M1276.5 104.5h0M1277.5 110.5h0M1277.5 97.5h0M1277.5 83.5h0M1277.5 112.5h0M1278.5 108.5h0M1278.5 99.5h0M1278.5 111.5h0M1278.5 94.5h0M1279.5 110.5h0M1279.5 115.5h0M1279.5 113.5h0M1279.5 94.5h0M1280.5 122.5h0M1280.5 103.5h0M1280.5 123.5h0M1280.5 97.5h0M1281.5 100.5h0M1281.5 97.5h0M1281.5 83.5h0M1281.5 104.5h0M1282.5 92.5h0M1282.5 98.5h0M1282.5 93.5h0M1282.5 110.5h0M1283.5 92.5h0M1283.5 106.5h0M1283.5 88.5h0M1283.5 93.5h0M1284.5 102.5h0M1284.5 97.5h0M1284.5 97.5h0M1284.5 100.5h0M1285.5 95.5h0M1285.5 110.5h0M1285.5 114.5h0M1285.5 114.5h0M1286.5 105.5h0M1286.5 103.5h0M1286.5 95.5h0M1286.5 92.5h0M1286.5 100.5h0M1287.5 101.5h0M1287.5 110.5h0M1287.5 92.5h0M1287.5 88.5h0M1288.5 103.5h0M1288.5 95.5h0M1288.5 108.5h0M1288.5 102.5h0M1289.5 101.5h0M1289.5 93.5h0M1289.5 115.5h0M1289.5 101.5h0M1290.5 93.5h0M1290.5 98.5h0M1290.5 95.5h0M1290.5 124.5h0M1291.5 110.5h0M1291.5 106.5h0M1291.5 109.5h0M1291.5 123.5h0M1292.5 92.5h0M1292.5 100.5h0M1292.5 121.5h0M1292.5 108.5h0M1293.5 104.5h0M1293.5 95.5h0M1293.5 98.5h0M1293.5 115.5h0M1294.5 112.5h0M1294.5 104.5h0M1294.5 97.5h0M1294.5 112.5h0M1295.5 114.5h0M1295.5 103.5h0M1295.5 108.5h0M1295.5 96.5h0M1296.5 105.5h0M1296.5 101.5h0M1296.5 129.5h0M1296.5 124.5h0M1297.5 126.5h0M1297.5 119.5h0M1297.5 109.5h0M1297.5 115.5h0M1298.5 108.5h0M1298.5 120.5h0M1298.5 103.5h0M1298.5 105.5h0M1299.5 129.5h0M1299.5 123.5h0M1299.5 119.5h0M1299.5 105.5h0M1300.5 106.5h0M1300.5 95.5h0M1300.5 127.5h0M1300.5 111.5h0M1301.5 114.5h0M1301.5 116.5h0M1301.5 115.5h0M1301.5 132.5h0M1302.5 111.5h0M1302.5 117.5h0M1302.5 125.5h0M1302.5 99.5h0" stroke="#000" stroke-width="3.75" stroke-linecap="round" fill="none"/>
<line x1="105.5" y1="190" x2="1361" y2="190" stroke="#008000" stroke-width="2.08"/>
<line x1="162.0" y1="321.5" x2="162.0" y2="35.5" stroke="#800080" stroke-width="2.08" stroke-dasharray="2.08 3.44"/>
<line x1="1303.0" y1="321.5" x2="1303.0" y2="35.5" stroke="#800080" stroke-width="2.08" stroke-dasharray="2.08 3.44"/>
</g>
<rect x="105.5" y="35.5" width="1380" height="286" fill="none" stroke="#000" stroke-width="1.1"/>
<line x1="162.5" y1="321.5" x2="162.5" y2="326.4" stroke="#000" stroke-width="1.1"/><text x="163.0" y="341.8" font-size="13.89" text-anchor="middle">0</text>
<line x1="406.5" y1="321.5" x2="406.5" y2="326.4" stroke="#000" stroke-width="1.1"/><text x="405.3" y="341.8" font-size="13.89" text-anchor="middle">1000</text>
<line x1="649.5" y1="321.5" x2="649.5" y2="326.4" stroke="#000" stroke-width="1.1"/><text x="648.8" y="341.8" font-size="13.89" text-anchor="middle">2000</text>
<line x1="892.5" y1="321.5" x2="892.5" y2="326.4" stroke="#000" stroke-width="1.1"/><text x="892.2" y="341.8" font-size="13.89" text-anchor="middle">3000</text>
<line x1="1136.5" y1="321.5" x2="1136.5" y2="326.4" stroke="#000" stroke-width="1.1"/><text x="1135.8" y="341.8" font-size="13.89" text-anchor="middle">4000</text>
<line x1="1379.5" y1="321.5" x2="1379.5" y2="326.4" stroke="#000" stroke-width="1.1"/><text x="1378.5" y="341.8" font-size="13.89" text-anchor="middle">5000</text>
<line x1="100.6" y1="314.5" x2="105.5" y2="314.5" stroke="#000" stroke-width="1.1"/><text x="96.2" y="319.8" font-size="13.89" text-anchor="end">8.65</text>
<line x1="100.6" y1="252.5" x2="105.5" y2="252.5" stroke="#000" stroke-width="1.1"/><text x="96.2" y="257.8" font-size="13.89" text-anchor="end">8.70</text>
<line x1="100.6" y1="190.5" x2="105.5" y2="190.5" stroke="#000" stroke-width="1.1"/><text x="96.2" y="195.8" font-size="13.89" text-anchor="end">8.75</text>
<line x1="100.6" y1="129.5" x2="105.5" y2="129.5" stroke="#000" stroke-width="1.1"/><text x="96.2" y="134.8" font-size="13.89" text-anchor="end">8.80</text>
<line x1="100.6" y1="67.5" x2="105.5" y2="67.5" stroke="#000" stroke-width="1.1"/><text x="96.2" y="72.8" font-size="13.89" text-anchor="end">8.85</text>
<text x="795" y="27" font-size="16.67" text-anchor="middle">AGASC ID 115870360</text>
<text x="732" y="312" font-size="13.89" text-anchor="middle">60288</text>
<rect x="1361.3" y="42.2" width="117.3" height="27.2" rx="2.8" fill="#fff" fill-opacity="0.8" stroke="#ccc" stroke-width="1.1"/>
<line x1="1366.3" y1="54" x2="1396" y2="54" stroke="#008000" stroke-width="2.08"/>
<text x="1407" y="59.2" font-size="13.89">mag<tspan font-size="9.72" font-style="oblique" dy="2.3">AGASC</tspan></text>
<rect x="1348.3" y="247.3" width="130" height="67" rx="2.8" fill="#fff" fill-opacity="0.8" stroke="#ccc" stroke-width="1.1"/>
<circle cx="1367.5" cy="260.5" r="1.8" fill="#f00"/><text x="1392.5" y="264.3" font-size="13.89">not OK</text>
<circle cx="1367.5" cy="281.5" r="1.8" fill="#ffa500"/><text x="1392.5" y="285.4" font-size="13.89">Highlighted</text>
<circle cx="1367.5" cy="302.5" r="1.8" fill="#000"/><text x="1392.5" y="306.2" font-size="13.89">OK</text>
<g clip-path="url(#c2)">
<path d="M168.5 455.5h0M181.5 452.5h0M184.5 455.5h0M197.5 646.5h0M235.5 611.5h0M274.5 604.5h0M403.5 596.5h0M407.5 592.5h0M409.5 609.5h0M417.5 590.5h0M507.5 606.5h0M511.5 607.5h0M512.5 591.5h0M603.5 444.5h0M603.5 454.5h0M738.5 452.5h0M773.5 457.5h0M790.5 443.5h0M814.5 448.5h0M842.5 450.5h0M879.5 614.5h0M1083.5 450.5h0M1144.5 453.5h0M1099.5 592.5h0M1112.5 659.5h0M1179.5 659.5h0M1215.5 600.5h0M1291.5 652.5h0" stroke="#ffa500" stroke-width="3.75" stroke-linecap="round" fill="none"/>
<path d="M282.3 660.7h6l-3 5.2zM479.3 660.7h6l-3 5.2zM634.3 660.7h6l-3 5.2zM679.4 660.7h6l-3 5.2zM782.3 660.7h6l-3 5.2zM932.5 660.7h6l-3 5.2zM1182.3 660.7h6l-3 5.2zM1272.5 660.7h6l-3 5.2z" fill="#ffa500"/>
<path d="M162.5 523.5h0M163.5 465.5h0M163.5 512.5h0M163.5 500.5h0M163.5 496.5h0M164.5 509.5h0M164.5 522.5h0M164.5 479.5h0M164.5 486.5h0M165.5 534.5h0M165.5 482.5h0M165.5 472.5h0M165.5 510.5h0M166.5 473.5h0M166.5 504.5h0M166.5 496.5h0M166.5 476.5h0M167.5 520.5h0M167.5 481.5h0M167.5 462.5h0M167.5 464.5h0M168.5 500.5h0M168.5 473.5h0M168.5 527.5h0M168.5 498.5h0M169.5 484.5h0M169.5 522.5h0M169.5 496.5h0M169.5 500.5h0M170.5 527.5h0M170.5 476.5h0M170.5 475.5h0M170.5 514.5h0M171.5 519.5h0M171.5 523.5h0M171.5 482.5h0M171.5 477.5h0M172.5 508.5h0M172.5 519.5h0M172.5 488.5h0M172.5 487.5h0M173.5 497.5h0M173.5 465.5h0M173.5 496.5h0M173.5 496.5h0M174.5 517.5h0M174.5 491.5h0M174.5 463.5h0M174.5 493.5h0M175.5 493.5h0M175.5 484.5h0M175.5 488.5h0M175.5 482.5h0M176.5 482.5h0M176.5 480.5h0M176.5 511.5h0M176.5 487.5h0M177.5 527.5h0M177.5 488.5h0M177.5 520.5h0M177.5 496.5h0M178.5 483.5h0M178.5 503.5h0M178.5 492.5h0M178.5 528.5h0M179.5 512.5h0M179.5 478.5h0M179.5 518.5h0M179.5 479.5h0M180.5 523.5h0M180.5 513.5h0M180.5 517.5h0M180.5 494.5h0M181.5 482.5h0M181.5 516.5h0M181.5 498.5h0M181.5 482.5h0M182.5 501.5h0M182.5 511.5h0M182.5 485.5h0M182.5 499.5h0M183.5 509.5h0M183.5 531.5h0M183.5 475.5h0M183.5 506.5h0M184.5 494.5h0M184.5 516.5h0M184.5 464.5h0M184.5 477.5h0M184.5 471.5h0M185.5 497.5h0M185.5 483.5h0M185.5 474.5h0M185.5 471.5h0M186.5 489.5h0M186.5 498.5h0M186.5 505.5h0M186.5 515.5h0M187.5 521.5h0M187.5 495.5h0M187.5 510.5h0M187.5 548.5h0M188.5 512.5h0M188.5 486.5h0M188.5 519.5h0M188.5 553.5h0M189.5 520.5h0M189.5 501.5h0M189.5 517.5h0M189.5 532.5h0M190.5 482.5h0M190.5 483.5h0M190.5 531.5h0M190.5 512.5h0M191.5 523.5h0M191.5 516.5h0M191.5 501.5h0M191.5 516.5h0M192.5 534.5h0M192.5 550.5h0M192.5 553.5h0M192.5 537.5h0M193.5 509.5h0M193.5 529.5h0M193.5 535.5h0M193.5 530.5h0M194.5 536.5h0M194.5 524.5h0M194.5 559.5h0M194.5 577.5h0M195.5 545.5h0M195.5 560.5h0M195.5 499.5h0M195.5 540.5h0M196.5 541.5h0M196.5 568.5h0M196.5 530.5h0M196.5 549.5h0M197.5 510.5h0M197.5 517.5h0M197.5 552.5h0M197.5 527.5h0M198.5 538.5h0M198.5 550.5h0M198.5 507.5h0M198.5 518.5h0M199.5 532.5h0M199.5 537.5h0M199.5 565.5h0M199.5 564.5h0M200.5 531.5h0M200.5 495.5h0M200.5 581.5h0M200.5 522.5h0M201.5 522.5h0M201.5 514.5h0M201.5 554.5h0M201.5 547.5h0M202.5 535.5h0M202.5 557.5h0M202.5 561.5h0M202.5 554.5h0M203.5 538.5h0M203.5 528.5h0M203.5 537.5h0M203.5 535.5h0M204.5 550.5h0M204.5 551.5h0M204.5 510.5h0M204.5 537.5h0M205.5 538.5h0M205.5 515.5h0M205.5 507.5h0M205.5 507.5h0M206.5 527.5h0M206.5 537.5h0M206.5 530.5h0M206.5 532.5h0M207.5 504.5h0M207.5 530.5h0M207.5 521.5h0M207.5 537.5h0M208.5 504.5h0M208.5 578.5h0M208.5 527.5h0M208.5 519.5h0M209.5 560.5h0M209.5 486.5h0M209.5 539.5h0M209.5 540.5h0M210.5 558.5h0M210.5 516.5h0M210.5 531.5h0M210.5 548.5h0M211.5 531.5h0M211.5 520.5h0M211.5 508.5h0M211.5 531.5h0M212.5 556.5h0M212.5 548.5h0M212.5 583.5h0M212.5 551.5h0M213.5 519.5h0M213.5 525.5h0M213.5 539.5h0M213.5 543.5h0M214.5 499.5h0M214.5 530.5h0M214.5 515.5h0M214.5 527.5h0M215.5 550.5h0M215.5 500.5h0M215.5 562.5h0M215.5 561.5h0M216.5 545.5h0M216.5 551.5h0M216.5 548.5h0M216.5 549.5h0M217.5 513.5h0M217.5 535.5h0M217.5 528.5h0M217.5 569.5h0M218.5 554.5h0M218.5 511.5h0M218.5 561.5h0M218.5 509.5h0M219.5 557.5h0M219.5 529.5h0M219.5 554.5h0M219.5 531.5h0M220.5 554.5h0M220.5 540.5h0M220.5 496.5h0M220.5 542.5h0M221.5 486.5h0M221.5 542.5h0M221.5 555.5h0M221.5 528.5h0M222.5 538.5h0M222.5 487.5h0M222.5 507.5h0M222.5 499.5h0M223.5 510.5h0M223.5 467.5h0M223.5 505.5h0M223.5 510.5h0M224.5 538.5h0M224.5 539.5h0M224.5 515.5h0M224.5 495.5h0M225.5 491.5h0M225.5 536.5h0M225.5 504.5h0M225.5 511.5h0M226.5 538.5h0M226.5 503.5h0M226.5 562.5h0M226.5 509.5h0M227.5 494.5h0M227.5 536.5h0M227.5 515.5h0M227.5 554.5h0M228.5 531.5h0M228.5 498.5h0M228.5 537.5h0M228.5 516.5h0M229.5 523.5h0M229.5 523.5h0M229.5 511.5h0M229.5 504.5h0M230.5 487.5h0M230.5 496.5h0M230.5 527.5h0M230.5 482.5h0M231.5 486.5h0M231.5 547.5h0M231.5 500.5h0M231.5 496.5h0M232.5 493.5h0M232.5 503.5h0M232.5 542.5h0M232.5 521.5h0M233.5 558.5h0M233.5 519.5h0M233.5 468.5h0M233.5 499.5h0M234.5 496.5h0M234.5 526.5h0M234.5 536.5h0M234.5 537.5h0M235.5 512.5h0M235.5 532.5h0M235.5 528.5h0M235.5 489.5h0M236.5 549.5h0M236.5 542.5h0M236.5 526.5h0M236.5 517.5h0M237.5 518.5h0M237.5 544.5h0M237.5 511.5h0M237.5 518.5h0M238.5 507.5h0M238.5 537.5h0M238.5 510.5h0M238.5 510.5h0M239.5 529.5h0M239.5 520.5h0M239.5 527.5h0M239.5 484.5h0M240.5 530.5h0M240.5 545.5h0M240.5 550.5h0M240.5 523.5h0M241.5 529.5h0M241.5 524.5h0M241.5 499.5h0M241.5 549.5h0M242.5 533.5h0M242.5 520.5h0M242.5 540.5h0M242.5 507.5h0M243.5 508.5h0M243.5 530.5h0M243.5 551.5h0M243.5 478.5h0M244.5 504.5h0M244.5 505.5h0M244.5 514.5h0M244.5 515.5h0M245.5 496.5h0M245.5 516.5h0M245.5 528.5h0M245.5 499.5h0M246.5 514.5h0M246.5 531.5h0M246.5 534.5h0M246.5 488.5h0M247.5 501.5h0M247.5 469.5h0M247.5 526.5h0M247.5 530.5h0M248.5 506.5h0M248.5 483.5h0M248.5 501.5h0M248.5 505.5h0M249.5 471.5h0M249.5 530.5h0M249.5 541.5h0M249.5 531.5h0M250.5 522.5h0M250.5 507.5h0M250.5 492.5h0M250.5 507.5h0M251.5 481.5h0M251.5 534.5h0M251.5 473.5h0M251.5 534.5h0M252.5 491.5h0M252.5 537.5h0M252.5 511.5h0M252.5 518.5h0M253.5 508.5h0M253.5 503.5h0M253.5 526.5h0M253.5 523.5h0M254.5 517.5h0M254.5 550.5h0M254.5 539.5h0M254.5 558.5h0M255.5 526.5h0M255.5 475.5h0M255.5 511.5h0M255.5 546.5h0M256.5 544.5h0M256.5 507.5h0M256.5 541.5h0M256.5 564.5h0M257.5 553.5h0M257.5 554.5h0M257.5 554.5h0M257.5 518.5h0M258.5 533.5h0M258.5 565.5h0M258.5 546.5h0M258.5 558.5h0M259.5 560.5h0M259.5 566.5h0M259.5 495.5h0M259.5 542.5h0M260.5 523.5h0M260.5 516.5h0M260.5 544.5h0M260.5 524.5h0M261.5 524.5h0M261.5 531.5h0M261.5 486.5h0M261.5 530.5h0M262.5 541.5h0M262.5 521.5h0M262.5 495.5h0M262.5 513.5h0M263.5 546.5h0M263.5 554.5h0M263.5 555.5h0M263.5 550.5h0M264.5 527.5h0M264.5 517.5h0M264.5 583.5h0M264.5 537.5h0M265.5 559.5h0M265.5 520.5h0M265.5 515.5h0M265.5 552.5h0M266.5 546.5h0M266.5 556.5h0M266.5 527.5h0M266.5 569.5h0M267.5 559.5h0M267.5 550.5h0M267.5 508.5h0M267.5 480.5h0M268.5 536.5h0M268.5 561.5h0M268.5 535.5h0M268.5 554.5h0M269.5 526.5h0M269.5 559.5h0M269.5 544.5h0M269.5 537.5h0M270.5 524.5h0M270.5 538.5h0M270.5 507.5h0M270.5 533.5h0M271.5 573.5h0M271.5 515.5h0M271.5 542.5h0M271.5 550.5h0M272.5 501.5h0M272.5 557.5h0M272.5 535.5h0M272.5 551.5h0M273.5 505.5h0M273.5 544.5h0M273.5 531.5h0M273.5 565.5h0M274.5 503.5h0M274.5 558.5h0M274.5 515.5h0M274.5 510.5h0M275.5 508.5h0M275.5 494.5h0M275.5 560.5h0M275.5 527.5h0M276.5 533.5h0M276.5 527.5h0M276.5 511.5h0M276.5 534.5h0M277.5 553.5h0M277.5 538.5h0M277.5 500.5h0M277.5 560.5h0M278.5 534.5h0M278.5 556.5h0M278.5 511.5h0M278.5 570.5h0M279.5 543.5h0M279.5 539.5h0M279.5 534.5h0M279.5 481.5h0M280.5 500.5h0M280.5 557.5h0M280.5 486.5h0M280.5 561.5h0M281.5 574.5h0M281.5 567.5h0M281.5 532.5h0M281.5 524.5h0M282.5 581.5h0M282.5 526.5h0M282.5 542.5h0M282.5 520.5h0M283.5 544.5h0M283.5 515.5h0M283.5 523.5h0M283.5 560.5h0M284.5 502.5h0M284.5 531.5h0M284.5 519.5h0M284.5 506.5h0M285.5 555.5h0M285.5 537.5h0M285.5 551.5h0M285.5 553.5h0M286.5 527.5h0M286.5 525.5h0M286.5 501.5h0M286.5 499.5h0M287.5 531.5h0M287.5 547.5h0M287.5 524.5h0M287.5 479.5h0M288.5 530.5h0M288.5 546.5h0M288.5 535.5h0M288.5 519.5h0M289.5 498.5h0M289.5 501.5h0M289.5 513.5h0M289.5 528.5h0M290.5 518.5h0M290.5 528.5h0M290.5 519.5h0M290.5 523.5h0M291.5 508.5h0M291.5 558.5h0M291.5 527.5h0M291.5 526.5h0M292.5 543.5h0M292.5 523.5h0M292.5 541.5h0M292.5 533.5h0M293.5 525.5h0M293.5 524.5h0M293.5 531.5h0M293.5 494.5h0M294.5 515.5h0M294.5 512.5h0M294.5 514.5h0M294.5 533.5h0M294.5 537.5h0M295.5 500.5h0M295.5 527.5h0M295.5 555.5h0M295.5 564.5h0M296.5 514.5h0M296.5 534.5h0M296.5 521.5h0M296.5 530.5h0M297.5 528.5h0M297.5 523.5h0M297.5 545.5h0M297.5 520.5h0M298.5 496.5h0M298.5 503.5h0M298.5 555.5h0M298.5 547.5h0M299.5 547.5h0M299.5 524.5h0M299.5 499.5h0M299.5 512.5h0M300.5 555.5h0M300.5 518.5h0M300.5 501.5h0M300.5 528.5h0M301.5 475.5h0M301.5 533.5h0M301.5 492.5h0M301.5 465.5h0M302.5 545.5h0M302.5 526.5h0M302.5 506.5h0M302.5 534.5h0M303.5 556.5h0M303.5 506.5h0M303.5 513.5h0M303.5 528.5h0M304.5 536.5h0M304.5 530.5h0M304.5 526.5h0M304.5 545.5h0M305.5 483.5h0M305.5 542.5h0M305.5 528.5h0M305.5 533.5h0M306.5 528.5h0M306.5 517.5h0M306.5 535.5h0M306.5 524.5h0M307.5 479.5h0M307.5 495.5h0M307.5 525.5h0M307.5 498.5h0M308.5 535.5h0M308.5 514.5h0M308.5 548.5h0M308.5 543.5h0M309.5 537.5h0M309.5 491.5h0M309.5 514.5h0M309.5 507.5h0M310.5 516.5h0M310.5 511.5h0M310.5 510.5h0M310.5 502.5h0M311.5 516.5h0M311.5 538.5h0M311.5 535.5h0M311.5 491.5h0M312.5 486.5h0M312.5 506.5h0M312.5 553.5h0M312.5 483.5h0M313.5 512.5h0M313.5 521.5h0M313.5 519.5h0M313.5 527.5h0M314.5 478.5h0M314.5 480.5h0M314.5 541.5h0M314.5 523.5h0M315.5 512.5h0M315.5 490.5h0M315.5 569.5h0M315.5 498.5h0M316.5 481.5h0M316.5 527.5h0M316.5 521.5h0M316.5 491.5h0M317.5 512.5h0M317.5 549.5h0M317.5 546.5h0M317.5 543.5h0M318.5 552.5h0M318.5 523.5h0M318.5 534.5h0M318.5 523.5h0M319.5 508.5h0M319.5 483.5h0M319.5 520.5h0M319.5 564.5h0M320.5 494.5h0M320.5 529.5h0M320.5 500.5h0M320.5 537.5h0M321.5 521.5h0M321.5 531.5h0M321.5 529.5h0M321.5 499.5h0M322.5 542.5h0M322.5 525.5h0M322.5 524.5h0M322.5 537.5h0M323.5 574.5h0M323.5 521.5h0M323.5 587.5h0M323.5 559.5h0M324.5 538.5h0M324.5 519.5h0M324.5 509.5h0M324.5 509.5h0M325.5 515.5h0M325.5 536.5h0M325.5 500.5h0M325.5 534.5h0M326.5 503.5h0M326.5 574.5h0M326.5 548.5h0M326.5 540.5h0M327.5 529.5h0M327.5 578.5h0M327.5 510.5h0M327.5 506.5h0M328.5 510.5h0M328.5 539.5h0M328.5 495.5h0M328.5 540.5h0M329.5 508.5h0M329.5 530.5h0M329.5 529.5h0M329.5 532.5h0M330.5 529.5h0M330.5 503.5h0M330.5 495.5h0M330.5 495.5h0M331.5 508.5h0M331.5 513.5h0M331.5 518.5h0M331.5 488.5h0M332.5 538.5h0M332.5 542.5h0M332.5 528.5h0M332.5 563.5h0M333.5 533.5h0M333.5 530.5h0M333.5 550.5h0M333.5 540.5h0M334.5 512.5h0M334.5 533.5h0M334.5 527.5h0M334.5 505.5h0M335.5 541.5h0M335.5 552.5h0M335.5 529.5h0M335.5 519.5h0M336.5 566.5h0M336.5 513.5h0M336.5 535.5h0M336.5 537.5h0M337.5 546.5h0M337.5 532.5h0M337.5 506.5h0M337.5 516.5h0M338.5 510.5h0M338.5 536.5h0M338.5 491.5h0M338.5 499.5h0M339.5 529.5h0M339.5 582.5h0M339.5 527.5h0M339.5 464.5h0M340.5 530.5h0M340.5 549.5h0M340.5 489.5h0M340.5 541.5h0M341.5 517.5h0M341.5 511.5h0M341.5 559.5h0M341.5 526.5h0M342.5 501.5h0M342.5 535.5h0M342.5 513.5h0M342.5 529.5h0M343.5 504.5h0M343.5 485.5h0M343.5 551.5h0M343.5 534.5h0M344.5 519.5h0M344.5 541.5h0M344.5 545.5h0M344.5 535.5h0M345.5 534.5h0M345.5 542.5h0M345.5 521.5h0M345.5 510.5h0M346.5 511.5h0M346.5 513.5h0M346.5 501.5h0M346.5 556.5h0M347.5 531.5h0M347.5 524.5h0M347.5 516.5h0M347.5 561.5h0M348.5 484.5h0M348.5 546.5h0M348.5 521.5h0M348.5 510.5h0M349.5 501.5h0M349.5 540.5h0M349.5 537.5h0M349.5 516.5h0M350.5 511.5h0M350.5 503.5h0M350.5 524.5h0M350.5 537.5h0M351.5 549.5h0M351.5 481.5h0M351.5 549.5h0M351.5 504.5h0M352.5 513.5h0M352.5 501.5h0M352.5 496.5h0M352.5 487.5h0M353.5 519.5h0M353.5 508.5h0M353.5 557.5h0M353.5 516.5h0M354.5 535.5h0M354.5 519.5h0M354.5 487.5h0M354.5 514.5h0M355.5 491.5h0M355.5 520.5h0M355.5 507.5h0M355.5 525.5h0M356.5 568.5h0M356.5 531.5h0M356.5 522.5h0M356.5 513.5h0M357.5 516.5h0M357.5 519.5h0M357.5 494.5h0M357.5 502.5h0M358.5 524.5h0M358.5 496.5h0M358.5 557.5h0M358.5 522.5h0M359.5 519.5h0M359.5 486.5h0M359.5 527.5h0M359.5 546.5h0M360.5 512.5h0M360.5 477.5h0M360.5 520.5h0M360.5 518.5h0M361.5 520.5h0M361.5 515.5h0M361.5 486.5h0M361.5 470.5h0M362.5 505.5h0M362.5 518.5h0M362.5 473.5h0M362.5 514.5h0M363.5 514.5h0M363.5 523.5h0M363.5 522.5h0M363.5 510.5h0M364.5 522.5h0M364.5 506.5h0M364.5 514.5h0M364.5 503.5h0M365.5 524.5h0M365.5 520.5h0M365.5 510.5h0M365.5 514.5h0M366.5 514.5h0M366.5 489.5h0M366.5 538.5h0M366.5 556.5h0M367.5 499.5h0M367.5 521.5h0M367.5 485.5h0M367.5 518.5h0M368.5 540.5h0M368.5 465.5h0M368.5 507.5h0M368.5 525.5h0M369.5 531.5h0M369.5 503.5h0M369.5 530.5h0M369.5 507.5h0M370.5 489.5h0M370.5 544.5h0M370.5 523.5h0M370.5 505.5h0M371.5 477.5h0M371.5 494.5h0M371.5 525.5h0M371.5 482.5h0M372.5 523.5h0M372.5 519.5h0M372.5 507.5h0M372.5 538.5h0M373.5 549.5h0M373.5 488.5h0M373.5 511.5h0M373.5 528.5h0M374.5 540.5h0M374.5 507.5h0M374.5 500.5h0M374.5 524.5h0M375.5 520.5h0M375.5 503.5h0M375.5 517.5h0M375.5 554.5h0M376.5 501.5h0M376.5 510.5h0M376.5 499.5h0M376.5 532.5h0M377.5 560.5h0M377.5 542.5h0M377.5 509.5h0M377.5 468.5h0M378.5 462.5h0M378.5 509.5h0M378.5 547.5h0M378.5 524.5h0M379.5 507.5h0M379.5 508.5h0M379.5 516.5h0M379.5 487.5h0M380.5 538.5h0M380.5 564.5h0M380.5 538.5h0M380.5 545.5h0M381.5 470.5h0M381.5 526.5h0M381.5 553.5h0M381.5 510.5h0M382.5 502.5h0M382.5 525.5h0M382.5 523.5h0M382.5 505.5h0M383.5 517.5h0M383.5 545.5h0M383.5 518.5h0M383.5 510.5h0M384.5 525.5h0M384.5 513.5h0M384.5 521.5h0M384.5 540.5h0M385.5 538.5h0M385.5 522.5h0M385.5 548.5h0M385.5 510.5h0M386.5 509.5h0M386.5 579.5h0M386.5 539.5h0M386.5 553.5h0M387.5 551.5h0M387.5 535.5h0M387.5 542.5h0M387.5 525.5h0M388.5 531.5h0M388.5 530.5h0M388.5 554.5h0M388.5 545.5h0M389.5 504.5h0M389.5 543.5h0M389.5 498.5h0M389.5 550.5h0M390.5 511.5h0M390.5 526.5h0M390.5 547.5h0M390.5 519.5h0M391.5 535.5h0M391.5 515.5h0M391.5 556.5h0M391.5 550.5h0M392.5 552.5h0M392.5 526.5h0M392.5 528.5h0M392.5 541.5h0M393.5 544.5h0M393.5 544.5h0M393.5 536.5h0M393.5 558.5h0M394.5 539.5h0M394.5 541.5h0M394.5 549.5h0M394.5 550.5h0M395.5 504.5h0M395.5 551.5h0M395.5 529.5h0M395.5 506.5h0M396.5 521.5h0M396.5 538.5h0M396.5 515.5h0M396.5 567.5h0M397.5 563.5h0M397.5 546.5h0M397.5 543.5h0M397.5 540.5h0M398.5 495.5h0M398.5 499.5h0M398.5 539.5h0M398.5 532.5h0M399.5 557.5h0M399.5 531.5h0M399.5 566.5h0M399.5 506.5h0M400.5 549.5h0M400.5 525.5h0M400.5 565.5h0M400.5 506.5h0M401.5 524.5h0M401.5 493.5h0M401.5 537.5h0M401.5 571.5h0M402.5 554.5h0M402.5 564.5h0M402.5 502.5h0M402.5 551.5h0M403.5 554.5h0M403.5 524.5h0M403.5 532.5h0M403.5 527.5h0M404.5 549.5h0M404.5 579.5h0M404.5 566.5h0M404.5 583.5h0M405.5 508.5h0M405.5 517.5h0M405.5 546.5h0M405.5 524.5h0M405.5 523.5h0M406.5 523.5h0M406.5 526.5h0M406.5 518.5h0M406.5 536.5h0M407.5 584.5h0M407.5 505.5h0M407.5 509.5h0M407.5 524.5h0M408.5 506.5h0M408.5 534.5h0M408.5 556.5h0M408.5 549.5h0M409.5 542.5h0M409.5 520.5h0M409.5 540.5h0M409.5 519.5h0M410.5 513.5h0M410.5 508.5h0M410.5 500.5h0M410.5 531.5h0M411.5 533.5h0M411.5 551.5h0M411.5 526.5h0M411.5 543.5h0M412.5 562.5h0M412.5 510.5h0M412.5 522.5h0M412.5 527.5h0M413.5 576.5h0M413.5 543.5h0M413.5 566.5h0M413.5 510.5h0M414.5 534.5h0M414.5 525.5h0M414.5 516.5h0M414.5 507.5h0M415.5 544.5h0M415.5 523.5h0M415.5 532.5h0M415.5 519.5h0M416.5 525.5h0M416.5 505.5h0M416.5 525.5h0M416.5 548.5h0M417.5 535.5h0M417.5 561.5h0M417.5 530.5h0M417.5 503.5h0M418.5 550.5h0M418.5 572.5h0M418.5 540.5h0M418.5 548.5h0M419.5 538.5h0M419.5 550.5h0M419.5 536.5h0M419.5 559.5h0M420.5 502.5h0M420.5 543.5h0M420.5 526.5h0M420.5 520.5h0M421.5 541.5h0M421.5 527.5h0M421.5 543.5h0M421.5 547.5h0M422.5 543.5h0M422.5 526.5h0M422.5 564.5h0M422.5 557.5h0M423.5 554.5h0M423.5 550.5h0M423.5 511.5h0M423.5 539.5h0M424.5 544.5h0M424.5 534.5h0M424.5 513.5h0M424.5 553.5h0M425.5 514.5h0M425.5 586.5h0M425.5 556.5h0M425.5 503.5h0M426.5 501.5h0M426.5 532.5h0M426.5 545.5h0M426.5 516.5h0M427.5 543.5h0M427.5 498.5h0M427.5 505.5h0M427.5 514.5h0M428.5 549.5h0M428.5 508.5h0M428.5 535.5h0M428.5 533.5h0M429.5 536.5h0M429.5 529.5h0M429.5 514.5h0M429.5 505.5h0M430.5 504.5h0M430.5 534.5h0M430.5 529.5h0M430.5 494.5h0M431.5 534.5h0M431.5 524.5h0M431.5 544.5h0M431.5 491.5h0M432.5 513.5h0M432.5 516.5h0M432.5 521.5h0M432.5 497.5h0M433.5 529.5h0M433.5 509.5h0M433.5 460.5h0M433.5 522.5h0M434.5 532.5h0M434.5 540.5h0M434.5 500.5h0M434.5 517.5h0M435.5 534.5h0M435.5 536.5h0M435.5 518.5h0M435.5 539.5h0M436.5 469.5h0M436.5 523.5h0M436.5 522.5h0M436.5 521.5h0M437.5 556.5h0M437.5 548.5h0M437.5 526.5h0M437.5 519.5h0M438.5 544.5h0M438.5 479.5h0M438.5 508.5h0M438.5 488.5h0M439.5 491.5h0M439.5 523.5h0M439.5 461.5h0M439.5 516.5h0M440.5 557.5h0M440.5 566.5h0M440.5 518.5h0M440.5 498.5h0M441.5 517.5h0M441.5 478.5h0M441.5 525.5h0M441.5 505.5h0M442.5 501.5h0M442.5 540.5h0M442.5 511.5h0M442.5 510.5h0M443.5 493.5h0M443.5 490.5h0M443.5 495.5h0M443.5 534.5h0M444.5 501.5h0M444.5 493.5h0M444.5 518.5h0M444.5 501.5h0M445.5 500.5h0M445.5 491.5h0M445.5 517.5h0M445.5 507.5h0M446.5 514.5h0M446.5 517.5h0M446.5 531.5h0M446.5 526.5h0M447.5 542.5h0M447.5 523.5h0M447.5 503.5h0M447.5 504.5h0M448.5 502.5h0M448.5 522.5h0M448.5 487.5h0M448.5 530.5h0M449.5 503.5h0M449.5 511.5h0M449.5 537.5h0M449.5 537.5h0M450.5 505.5h0M450.5 522.5h0M450.5 518.5h0M450.5 519.5h0M451.5 512.5h0M451.5 523.5h0M451.5 509.5h0M451.5 539.5h0M452.5 531.5h0M452.5 517.5h0M452.5 545.5h0M452.5 530.5h0M453.5 533.5h0M453.5 527.5h0M453.5 566.5h0M453.5 489.5h0M454.5 532.5h0M454.5 518.5h0M454.5 552.5h0M454.5 557.5h0M455.5 530.5h0M455.5 537.5h0M455.5 515.5h0M455.5 550.5h0M456.5 551.5h0M456.5 523.5h0M456.5 514.5h0M456.5 509.5h0M457.5 531.5h0M457.5 524.5h0M457.5 547.5h0M457.5 500.5h0M458.5 504.5h0M458.5 505.5h0M458.5 563.5h0M458.5 510.5h0M459.5 546.5h0M459.5 519.5h0M459.5 521.5h0M459.5 502.5h0M460.5 535.5h0M460.5 538.5h0M460.5 551.5h0M460.5 555.5h0M461.5 517.5h0M461.5 549.5h0M461.5 515.5h0M461.5 539.5h0M462.5 543.5h0M462.5 509.5h0M462.5 511.5h0M462.5 551.5h0M463.5 535.5h0M463.5 531.5h0M463.5 515.5h0M463.5 546.5h0M464.5 540.5h0M464.5 533.5h0M464.5 515.5h0M464.5 510.5h0M465.5 542.5h0M465.5 490.5h0M465.5 521.5h0M465.5 547.5h0M466.5 563.5h0M466.5 541.5h0M466.5 580.5h0M466.5 527.5h0M467.5 518.5h0M467.5 502.5h0M467.5 520.5h0M467.5 566.5h0M468.5 537.5h0M468.5 515.5h0M468.5 575.5h0M468.5 548.5h0M469.5 517.5h0M469.5 530.5h0M469.5 572.5h0M469.5 542.5h0M470.5 531.5h0M470.5 483.5h0M470.5 540.5h0M470.5 550.5h0M471.5 525.5h0M471.5 523.5h0M471.5 518.5h0M471.5 498.5h0M472.5 533.5h0M472.5 559.5h0M472.5 530.5h0M472.5 531.5h0M473.5 509.5h0M473.5 512.5h0M473.5 546.5h0M473.5 513.5h0M474.5 508.5h0M474.5 535.5h0M474.5 509.5h0M474.5 527.5h0M475.5 527.5h0M475.5 534.5h0M475.5 512.5h0M475.5 554.5h0M476.5 526.5h0M476.5 555.5h0M476.5 536.5h0M476.5 543.5h0M477.5 524.5h0M477.5 534.5h0M477.5 472.5h0M477.5 514.5h0M478.5 488.5h0M478.5 546.5h0M478.5 535.5h0M478.5 483.5h0M479.5 565.5h0M479.5 528.5h0M479.5 563.5h0M479.5 495.5h0M480.5 560.5h0M480.5 537.5h0M480.5 535.5h0M480.5 566.5h0M481.5 474.5h0M481.5 535.5h0M481.5 493.5h0M481.5 545.5h0M482.5 561.5h0M482.5 526.5h0M482.5 527.5h0M482.5 521.5h0M483.5 553.5h0M483.5 563.5h0M483.5 546.5h0M483.5 524.5h0M484.5 518.5h0M484.5 547.5h0M484.5 539.5h0M484.5 519.5h0M485.5 506.5h0M485.5 544.5h0M485.5 528.5h0M485.5 588.5h0M486.5 551.5h0M486.5 521.5h0M486.5 532.5h0M486.5 535.5h0M487.5 494.5h0M487.5 537.5h0M487.5 554.5h0M487.5 526.5h0M488.5 526.5h0M488.5 554.5h0M488.5 506.5h0M488.5 489.5h0M489.5 540.5h0M489.5 545.5h0M489.5 528.5h0M489.5 497.5h0M490.5 536.5h0M490.5 539.5h0M490.5 535.5h0M490.5 517.5h0M491.5 517.5h0M491.5 525.5h0M491.5 492.5h0M491.5 467.5h0M492.5 531.5h0M492.5 494.5h0M492.5 511.5h0M492.5 478.5h0M493.5 534.5h0M493.5 523.5h0M493.5 513.5h0M493.5 545.5h0M494.5 520.5h0M494.5 499.5h0M494.5 545.5h0M494.5 512.5h0M495.5 474.5h0M495.5 528.5h0M495.5 534.5h0M495.5 567.5h0M496.5 518.5h0M496.5 549.5h0M496.5 502.5h0M496.5 477.5h0M497.5 502.5h0M497.5 532.5h0M497.5 500.5h0M497.5 525.5h0M498.5 539.5h0M498.5 526.5h0M498.5 510.5h0M498.5 523.5h0M499.5 503.5h0M499.5 465.5h0M499.5 501.5h0M499.5 498.5h0M500.5 529.5h0M500.5 484.5h0M500.5 507.5h0M500.5 492.5h0M501.5 532.5h0M501.5 511.5h0M501.5 565.5h0M501.5 525.5h0M502.5 536.5h0M502.5 540.5h0M502.5 480.5h0M502.5 553.5h0M503.5 526.5h0M503.5 527.5h0M503.5 513.5h0M503.5 503.5h0M504.5 560.5h0M504.5 540.5h0M504.5 544.5h0M504.5 514.5h0M505.5 510.5h0M505.5 541.5h0M505.5 545.5h0M505.5 556.5h0M506.5 528.5h0M506.5 498.5h0M506.5 529.5h0M506.5 553.5h0M507.5 556.5h0M507.5 553.5h0M507.5 573.5h0M507.5 499.5h0M508.5 537.5h0M508.5 546.5h0M508.5 487.5h0M508.5 534.5h0M509.5 504.5h0M509.5 533.5h0M509.5 513.5h0M509.5 537.5h0M510.5 547.5h0M510.5 529.5h0M510.5 522.5h0M510.5 514.5h0M511.5 534.5h0M511.5 544.5h0M511.5 547.5h0M511.5 532.5h0M512.5 549.5h0M512.5 546.5h0M512.5 526.5h0M512.5 525.5h0M513.5 527.5h0M513.5 554.5h0M513.5 569.5h0M513.5 533.5h0M514.5 536.5h0M514.5 547.5h0M514.5 534.5h0M514.5 519.5h0M515.5 543.5h0M515.5 530.5h0M515.5 559.5h0M515.5 544.5h0M515.5 556.5h0M516.5 569.5h0M516.5 529.5h0M516.5 470.5h0M516.5 540.5h0M517.5 521.5h0M517.5 530.5h0M517.5 571.5h0M517.5 534.5h0M518.5 577.5h0M518.5 557.5h0M518.5 506.5h0M518.5 536.5h0M519.5 512.5h0M519.5 562.5h0M519.5 582.5h0M519.5 555.5h0M520.5 509.5h0M520.5 518.5h0M520.5 514.5h0M520.5 542.5h0M521.5 541.5h0M521.5 543.5h0M521.5 512.5h0M521.5 537.5h0M522.5 498.5h0M522.5 543.5h0M522.5 507.5h0M522.5 561.5h0M523.5 549.5h0M523.5 531.5h0M523.5 551.5h0M523.5 547.5h0M524.5 542.5h0M524.5 550.5h0M524.5 503.5h0M524.5 513.5h0M525.5 568.5h0M525.5 499.5h0M525.5 540.5h0M525.5 540.5h0M526.5 542.5h0M526.5 519.5h0M526.5 522.5h0M526.5 550.5h0M527.5 538.5h0M527.5 566.5h0M527.5 496.5h0M527.5 556.5h0M528.5 557.5h0M528.5 553.5h0M528.5 536.5h0M528.5 521.5h0M529.5 546.5h0M529.5 538.5h0M529.5 546.5h0M529.5 509.5h0M530.5 533.5h0M530.5 573.5h0M530.5 504.5h0M530.5 531.5h0M531.5 494.5h0M531.5 551.5h0M531.5 549.5h0M531.5 542.5h0M532.5 567.5h0M532.5 546.5h0M532.5 509.5h0M532.5 522.5h0M533.5 588.5h0M533.5 509.5h0M533.5 530.5h0M533.5 519.5h0M534.5 538.5h0M534.5 534.5h0M534.5 537.5h0M534.5 537.5h0M535.5 559.5h0M535.5 513.5h0M535.5 532.5h0M535.5 528.5h0M536.5 528.5h0M536.5 542.5h0M536.5 536.5h0M536.5 561.5h0M537.5 527.5h0M537.5 526.5h0M537.5 536.5h0M537.5 565.5h0M538.5 498.5h0M538.5 532.5h0M538.5 528.5h0M538.5 533.5h0M539.5 537.5h0M539.5 533.5h0M539.5 546.5h0M539.5 534.5h0M540.5 473.5h0M540.5 493.5h0M540.5 473.5h0M540.5 532.5h0M541.5 558.5h0M541.5 546.5h0M541.5 572.5h0M541.5 492.5h0M542.5 489.5h0M542.5 515.5h0M542.5 509.5h0M542.5 509.5h0M543.5 520.5h0M543.5 500.5h0M543.5 538.5h0M543.5 527.5h0M544.5 521.5h0M544.5 552.5h0M544.5 538.5h0M544.5 507.5h0M545.5 509.5h0M545.5 568.5h0M545.5 496.5h0M545.5 509.5h0M546.5 500.5h0M546.5 519.5h0M546.5 504.5h0M546.5 544.5h0M547.5 522.5h0M547.5 539.5h0M547.5 528.5h0M547.5 490.5h0M548.5 480.5h0M548.5 517.5h0M548.5 527.5h0M548.5 499.5h0M549.5 507.5h0M549.5 473.5h0M549.5 503.5h0M549.5 565.5h0M550.5 516.5h0M550.5 524.5h0M550.5 534.5h0M550.5 514.5h0M551.5 516.5h0M551.5 525.5h0M551.5 482.5h0M551.5 509.5h0M552.5 508.5h0M552.5 514.5h0M552.5 489.5h0M552.5 540.5h0M553.5 489.5h0M553.5 522.5h0M553.5 483.5h0M553.5 484.5h0M554.5 506.5h0M554.5 527.5h0M554.5 511.5h0M554.5 509.5h0M555.5 547.5h0M555.5 524.5h0M555.5 532.5h0M555.5 486.5h0M556.5 478.5h0M556.5 532.5h0M556.5 528.5h0M556.5 544.5h0M557.5 511.5h0M557.5 499.5h0M557.5 476.5h0M557.5 544.5h0M558.5 496.5h0M558.5 521.5h0M558.5 532.5h0M558.5 525.5h0M559.5 533.5h0M559.5 507.5h0M559.5 518.5h0M559.5 490.5h0M560.5 528.5h0M560.5 556.5h0M560.5 538.5h0M560.5 510.5h0M561.5 548.5h0M561.5 533.5h0M561.5 505.5h0M561.5 546.5h0M562.5 498.5h0M562.5 510.5h0M562.5 530.5h0M562.5 519.5h0M563.5 528.5h0M563.5 526.5h0M563.5 524.5h0M563.5 517.5h0M564.5 520.5h0M564.5 533.5h0M564.5 538.5h0M564.5 470.5h0M565.5 540.5h0M565.5 521.5h0M565.5 490.5h0M565.5 495.5h0M566.5 533.5h0M566.5 472.5h0M566.5 478.5h0M566.5 525.5h0M567.5 544.5h0M567.5 505.5h0M567.5 524.5h0M567.5 527.5h0M568.5 538.5h0M568.5 534.5h0M568.5 518.5h0M568.5 502.5h0M569.5 565.5h0M569.5 572.5h0M569.5 502.5h0M569.5 542.5h0M570.5 509.5h0M570.5 523.5h0M570.5 497.5h0M570.5 505.5h0M571.5 532.5h0M571.5 530.5h0M571.5 520.5h0M571.5 510.5h0M572.5 540.5h0M572.5 559.5h0M572.5 525.5h0M572.5 529.5h0M573.5 531.5h0M573.5 548.5h0M573.5 514.5h0M573.5 563.5h0M574.5 538.5h0M574.5 498.5h0M574.5 550.5h0M574.5 518.5h0M575.5 517.5h0M575.5 518.5h0M575.5 562.5h0M575.5 504.5h0M576.5 524.5h0M576.5 516.5h0M576.5 521.5h0M576.5 526.5h0M577.5 499.5h0M577.5 494.5h0M577.5 566.5h0M577.5 544.5h0M578.5 531.5h0M578.5 572.5h0M578.5 494.5h0M578.5 543.5h0M579.5 515.5h0M579.5 523.5h0M579.5 532.5h0M579.5 548.5h0M580.5 535.5h0M580.5 525.5h0M580.5 509.5h0M580.5 532.5h0M581.5 536.5h0M581.5 533.5h0M581.5 497.5h0M581.5 521.5h0M582.5 541.5h0M582.5 553.5h0M582.5 536.5h0M582.5 546.5h0M583.5 536.5h0M583.5 496.5h0M583.5 511.5h0M583.5 522.5h0M584.5 518.5h0M584.5 487.5h0M584.5 551.5h0M584.5 517.5h0M585.5 532.5h0M585.5 524.5h0M585.5 526.5h0M585.5 534.5h0M586.5 515.5h0M586.5 572.5h0M586.5 521.5h0M586.5 512.5h0M587.5 547.5h0M587.5 547.5h0M587.5 483.5h0M587.5 546.5h0M588.5 535.5h0M588.5 543.5h0M588.5 539.5h0M588.5 540.5h0M589.5 569.5h0M589.5 470.5h0M589.5 540.5h0M589.5 515.5h0M590.5 525.5h0M590.5 492.5h0M590.5 506.5h0M590.5 496.5h0M591.5 494.5h0M591.5 501.5h0M591.5 519.5h0M591.5 499.5h0M592.5 552.5h0M592.5 498.5h0M592.5 502.5h0M592.5 510.5h0M593.5 544.5h0M593.5 486.5h0M593.5 530.5h0M593.5 501.5h0M594.5 553.5h0M594.5 519.5h0M594.5 529.5h0M594.5 531.5h0M595.5 529.5h0M595.5 475.5h0M595.5 516.5h0M595.5 508.5h0M596.5 466.5h0M596.5 545.5h0M596.5 480.5h0M596.5 523.5h0M597.5 529.5h0M597.5 524.5h0M597.5 552.5h0M597.5 547.5h0M598.5 539.5h0M598.5 527.5h0M598.5 499.5h0M598.5 491.5h0M599.5 523.5h0M599.5 507.5h0M599.5 506.5h0M599.5 520.5h0M600.5 510.5h0M600.5 528.5h0M600.5 503.5h0M600.5 520.5h0M601.5 515.5h0M601.5 510.5h0M601.5 512.5h0M601.5 530.5h0M602.5 543.5h0M602.5 517.5h0M602.5 527.5h0M602.5 527.5h0M603.5 518.5h0M603.5 530.5h0M603.5 505.5h0M603.5 507.5h0M604.5 534.5h0M604.5 507.5h0M604.5 535.5h0M604.5 499.5h0M605.5 502.5h0M605.5 516.5h0M605.5 495.5h0M605.5 492.5h0M606.5 506.5h0M606.5 553.5h0M606.5 513.5h0M606.5 511.5h0M607.5 497.5h0M607.5 536.5h0M607.5 500.5h0M607.5 508.5h0M608.5 507.5h0M608.5 541.5h0M608.5 534.5h0M608.5 490.5h0M609.5 497.5h0M609.5 518.5h0M609.5 491.5h0M609.5 510.5h0M610.5 525.5h0M610.5 548.5h0M610.5 493.5h0M610.5 519.5h0M611.5 511.5h0M611.5 553.5h0M611.5 527.5h0M611.5 509.5h0M612.5 521.5h0M612.5 531.5h0M612.5 539.5h0M612.5 511.5h0M613.5 524.5h0M613.5 523.5h0M613.5 522.5h0M613.5 529.5h0M614.5 523.5h0M614.5 529.5h0M614.5 516.5h0M614.5 544.5h0M615.5 539.5h0M615.5 516.5h0M615.5 520.5h0M615.5 513.5h0M616.5 470.5h0M616.5 499.5h0M616.5 490.5h0M616.5 507.5h0M617.5 519.5h0M617.5 533.5h0M617.5 554.5h0M617.5 545.5h0M618.5 564.5h0M618.5 539.5h0M618.5 549.5h0M618.5 536.5h0M619.5 517.5h0M619.5 525.5h0M619.5 496.5h0M619.5 496.5h0M620.5 493.5h0M620.5 497.5h0M620.5 511.5h0M620.5 528.5h0M621.5 508.5h0M621.5 524.5h0M621.5 524.5h0M621.5 511.5h0M622.5 543.5h0M622.5 555.5h0M622.5 516.5h0M622.5 483.5h0M623.5 499.5h0M623.5 533.5h0M623.5 556.5h0M623.5 542.5h0M624.5 576.5h0M624.5 548.5h0M624.5 488.5h0M624.5 495.5h0M625.5 554.5h0M625.5 541.5h0M625.5 552.5h0M625.5 563.5h0M625.5 541.5h0M626.5 544.5h0M626.5 535.5h0M626.5 532.5h0M626.5 522.5h0M627.5 507.5h0M627.5 540.5h0M627.5 543.5h0M627.5 538.5h0M628.5 528.5h0M628.5 541.5h0M628.5 558.5h0M628.5 549.5h0M629.5 521.5h0M629.5 559.5h0M629.5 520.5h0M629.5 566.5h0M630.5 524.5h0M630.5 525.5h0M630.5 543.5h0M630.5 539.5h0M631.5 543.5h0M631.5 500.5h0M631.5 547.5h0M631.5 553.5h0M632.5 530.5h0M632.5 513.5h0M632.5 531.5h0M632.5 541.5h0M633.5 515.5h0M633.5 554.5h0M633.5 554.5h0M633.5 563.5h0M634.5 510.5h0M634.5 583.5h0M634.5 564.5h0M634.5 533.5h0M635.5 529.5h0M635.5 498.5h0M635.5 529.5h0M635.5 548.5h0M636.5 506.5h0M636.5 514.5h0M636.5 512.5h0M636.5 514.5h0M637.5 527.5h0M637.5 568.5h0M637.5 560.5h0M637.5 493.5h0M638.5 537.5h0M638.5 575.5h0M638.5 537.5h0M638.5 516.5h0M639.5 529.5h0M639.5 538.5h0M639.5 585.5h0M639.5 537.5h0M640.5 541.5h0M640.5 500.5h0M640.5 538.5h0M640.5 539.5h0M641.5 547.5h0M641.5 541.5h0M641.5 532.5h0M641.5 549.5h0M642.5 556.5h0M642.5 563.5h0M642.5 536.5h0M642.5 546.5h0M643.5 545.5h0M643.5 569.5h0M643.5 555.5h0M643.5 577.5h0M644.5 517.5h0M644.5 511.5h0M644.5 529.5h0M644.5 541.5h0M645.5 528.5h0M645.5 568.5h0M645.5 565.5h0M645.5 512.5h0M646.5 560.5h0M646.5 540.5h0M646.5 552.5h0M646.5 588.5h0M647.5 552.5h0M647.5 520.5h0M647.5 508.5h0M647.5 513.5h0M648.5 570.5h0M648.5 549.5h0M648.5 514.5h0M648.5 508.5h0M649.5 498.5h0M649.5 495.5h0M649.5 541.5h0M649.5 552.5h0M650.5 509.5h0M650.5 535.5h0M650.5 528.5h0M650.5 535.5h0M651.5 534.5h0M651.5 504.5h0M651.5 544.5h0M651.5 558.5h0M652.5 536.5h0M652.5 519.5h0M652.5 526.5h0M652.5 522.5h0M653.5 558.5h0M653.5 535.5h0M653.5 492.5h0M653.5 520.5h0M654.5 530.5h0M654.5 490.5h0M654.5 527.5h0M654.5 499.5h0M655.5 511.5h0M655.5 507.5h0M655.5 492.5h0M655.5 464.5h0M656.5 487.5h0M656.5 533.5h0M656.5 539.5h0M656.5 523.5h0M657.5 520.5h0M657.5 500.5h0M657.5 516.5h0M657.5 512.5h0M658.5 551.5h0M658.5 517.5h0M658.5 504.5h0M658.5 477.5h0M659.5 498.5h0M659.5 514.5h0M659.5 540.5h0M659.5 516.5h0M660.5 516.5h0M660.5 519.5h0M660.5 513.5h0M660.5 505.5h0M661.5 506.5h0M661.5 465.5h0M661.5 536.5h0M661.5 548.5h0M662.5 507.5h0M662.5 541.5h0M662.5 521.5h0M662.5 518.5h0M663.5 533.5h0M663.5 498.5h0M663.5 502.5h0M663.5 513.5h0M664.5 503.5h0M664.5 496.5h0M664.5 523.5h0M664.5 503.5h0M665.5 513.5h0M665.5 517.5h0M665.5 526.5h0M665.5 476.5h0M666.5 509.5h0M666.5 545.5h0M666.5 505.5h0M666.5 568.5h0M667.5 511.5h0M667.5 499.5h0M667.5 484.5h0M667.5 512.5h0M668.5 531.5h0M668.5 472.5h0M668.5 493.5h0M668.5 487.5h0M669.5 522.5h0M669.5 502.5h0M669.5 552.5h0M669.5 506.5h0M670.5 559.5h0M670.5 538.5h0M670.5 546.5h0M670.5 490.5h0M671.5 495.5h0M671.5 529.5h0M671.5 488.5h0M671.5 515.5h0M672.5 557.5h0M672.5 525.5h0M672.5 552.5h0M672.5 515.5h0M673.5 509.5h0M673.5 532.5h0M673.5 498.5h0M673.5 493.5h0M674.5 535.5h0M674.5 504.5h0M674.5 519.5h0M674.5 522.5h0M675.5 478.5h0M675.5 531.5h0M675.5 524.5h0M675.5 518.5h0M676.5 504.5h0M676.5 499.5h0M676.5 536.5h0M676.5 485.5h0M677.5 474.5h0M677.5 470.5h0M677.5 513.5h0M677.5 527.5h0M678.5 538.5h0M678.5 509.5h0M678.5 518.5h0M678.5 518.5h0M679.5 529.5h0M679.5 562.5h0M679.5 522.5h0M679.5 520.5h0M680.5 524.5h0M680.5 545.5h0M680.5 522.5h0M680.5 520.5h0M681.5 539.5h0M681.5 502.5h0M681.5 517.5h0M681.5 513.5h0M682.5 507.5h0M682.5 522.5h0M682.5 518.5h0M682.5 504.5h0M683.5 499.5h0M683.5 496.5h0M683.5 520.5h0M683.5 499.5h0M684.5 490.5h0M684.5 545.5h0M684.5 525.5h0M684.5 517.5h0M685.5 516.5h0M685.5 475.5h0M685.5 489.5h0M685.5 519.5h0M686.5 519.5h0M686.5 545.5h0M686.5 536.5h0M686.5 485.5h0M687.5 551.5h0M687.5 502.5h0M687.5 530.5h0M687.5 522.5h0M688.5 518.5h0M688.5 474.5h0M688.5 508.5h0M688.5 504.5h0M689.5 492.5h0M689.5 561.5h0M689.5 472.5h0M689.5 550.5h0M690.5 531.5h0M690.5 500.5h0M690.5 541.5h0M690.5 551.5h0M691.5 489.5h0M691.5 522.5h0M691.5 494.5h0M691.5 504.5h0M692.5 520.5h0M692.5 476.5h0M692.5 521.5h0M692.5 469.5h0M693.5 534.5h0M693.5 536.5h0M693.5 530.5h0M693.5 510.5h0M694.5 539.5h0M694.5 530.5h0M694.5 482.5h0M694.5 511.5h0M695.5 489.5h0M695.5 507.5h0M695.5 527.5h0M695.5 531.5h0M696.5 511.5h0M696.5 514.5h0M696.5 526.5h0M696.5 527.5h0M697.5 482.5h0M697.5 491.5h0M697.5 508.5h0M697.5 522.5h0M698.5 524.5h0M698.5 469.5h0M698.5 527.5h0M698.5 461.5h0M699.5 529.5h0M699.5 546.5h0M699.5 468.5h0M699.5 518.5h0M700.5 480.5h0M700.5 505.5h0M700.5 520.5h0M700.5 493.5h0M701.5 521.5h0M701.5 505.5h0M701.5 518.5h0M701.5 551.5h0M702.5 506.5h0M702.5 526.5h0M702.5 518.5h0M702.5 506.5h0M703.5 544.5h0M703.5 503.5h0M703.5 502.5h0M703.5 471.5h0M704.5 496.5h0M704.5 507.5h0M704.5 529.5h0M704.5 516.5h0M705.5 544.5h0M705.5 506.5h0M705.5 520.5h0M705.5 523.5h0M706.5 515.5h0M706.5 505.5h0M706.5 510.5h0M706.5 540.5h0M707.5 485.5h0M707.5 515.5h0M707.5 508.5h0M707.5 516.5h0M708.5 535.5h0M708.5 510.5h0M708.5 524.5h0M708.5 533.5h0M709.5 513.5h0M709.5 498.5h0M709.5 502.5h0M709.5 511.5h0M710.5 528.5h0M710.5 522.5h0M710.5 519.5h0M710.5 545.5h0M711.5 497.5h0M711.5 514.5h0M711.5 542.5h0M711.5 481.5h0M712.5 471.5h0M712.5 542.5h0M712.5 519.5h0M712.5 533.5h0M713.5 498.5h0M713.5 544.5h0M713.5 505.5h0M713.5 507.5h0M714.5 490.5h0M714.5 554.5h0M714.5 531.5h0M714.5 520.5h0M715.5 494.5h0M715.5 514.5h0M715.5 499.5h0M715.5 506.5h0M716.5 534.5h0M716.5 518.5h0M716.5 524.5h0M716.5 522.5h0M717.5 534.5h0M717.5 499.5h0M717.5 509.5h0M717.5 554.5h0M718.5 499.5h0M718.5 527.5h0M718.5 546.5h0M718.5 488.5h0M719.5 517.5h0M719.5 508.5h0M719.5 519.5h0M719.5 517.5h0M720.5 553.5h0M720.5 499.5h0M720.5 531.5h0M720.5 516.5h0M721.5 518.5h0M721.5 536.5h0M721.5 541.5h0M721.5 519.5h0M722.5 487.5h0M722.5 529.5h0M722.5 528.5h0M722.5 514.5h0M723.5 528.5h0M723.5 486.5h0M723.5 506.5h0M723.5 459.5h0M724.5 512.5h0M724.5 466.5h0M724.5 529.5h0M724.5 513.5h0M725.5 540.5h0M725.5 526.5h0M725.5 525.5h0M725.5 505.5h0M726.5 488.5h0M726.5 525.5h0M726.5 549.5h0M726.5 520.5h0M727.5 524.5h0M727.5 531.5h0M727.5 501.5h0M727.5 495.5h0M728.5 536.5h0M728.5 536.5h0M728.5 574.5h0M728.5 535.5h0M729.5 503.5h0M729.5 541.5h0M729.5 501.5h0M729.5 506.5h0M730.5 508.5h0M730.5 507.5h0M730.5 523.5h0M730.5 498.5h0M731.5 497.5h0M731.5 513.5h0M731.5 522.5h0M731.5 491.5h0M732.5 487.5h0M732.5 534.5h0M732.5 502.5h0M732.5 520.5h0M733.5 467.5h0M733.5 528.5h0M733.5 534.5h0M733.5 540.5h0M734.5 500.5h0M734.5 543.5h0M734.5 506.5h0M734.5 532.5h0M735.5 490.5h0M735.5 485.5h0M735.5 495.5h0M735.5 561.5h0M735.5 551.5h0M736.5 576.5h0M736.5 460.5h0M736.5 533.5h0M736.5 530.5h0M737.5 520.5h0M737.5 507.5h0M737.5 528.5h0M737.5 520.5h0M738.5 521.5h0M738.5 548.5h0M738.5 479.5h0M738.5 481.5h0M739.5 521.5h0M739.5 524.5h0M739.5 477.5h0M739.5 464.5h0M740.5 520.5h0M740.5 507.5h0M740.5 530.5h0M740.5 513.5h0M741.5 573.5h0M741.5 567.5h0M741.5 511.5h0M741.5 526.5h0M742.5 513.5h0M742.5 521.5h0M742.5 509.5h0M742.5 517.5h0M743.5 527.5h0M743.5 514.5h0M743.5 538.5h0M743.5 492.5h0M744.5 545.5h0M744.5 534.5h0M744.5 505.5h0M744.5 534.5h0M745.5 504.5h0M745.5 493.5h0M745.5 509.5h0M745.5 537.5h0M746.5 483.5h0M746.5 517.5h0M746.5 548.5h0M746.5 481.5h0M747.5 524.5h0M747.5 514.5h0M747.5 507.5h0M747.5 539.5h0M748.5 507.5h0M748.5 554.5h0M748.5 548.5h0M748.5 536.5h0M749.5 477.5h0M749.5 514.5h0M749.5 501.5h0M749.5 537.5h0M750.5 515.5h0M750.5 571.5h0M750.5 533.5h0M750.5 518.5h0M751.5 540.5h0M751.5 569.5h0M751.5 562.5h0M751.5 513.5h0M752.5 496.5h0M752.5 536.5h0M752.5 491.5h0M752.5 555.5h0M753.5 513.5h0M753.5 521.5h0M753.5 503.5h0M753.5 559.5h0M754.5 505.5h0M754.5 526.5h0M754.5 546.5h0M754.5 538.5h0M755.5 533.5h0M755.5 522.5h0M755.5 546.5h0M755.5 546.5h0M756.5 527.5h0M756.5 530.5h0M756.5 517.5h0M756.5 508.5h0M757.5 567.5h0M757.5 531.5h0M757.5 524.5h0M757.5 528.5h0M758.5 551.5h0M758.5 513.5h0M758.5 489.5h0M758.5 533.5h0M759.5 546.5h0M759.5 511.5h0M759.5 529.5h0M759.5 527.5h0M760.5 524.5h0M760.5 539.5h0M760.5 530.5h0M760.5 545.5h0M761.5 570.5h0M761.5 506.5h0M761.5 523.5h0M761.5 531.5h0M762.5 498.5h0M762.5 533.5h0M762.5 504.5h0M762.5 510.5h0M763.5 536.5h0M763.5 555.5h0M763.5 518.5h0M763.5 523.5h0M764.5 504.5h0M764.5 559.5h0M764.5 529.5h0M764.5 520.5h0M765.5 517.5h0M765.5 522.5h0M765.5 517.5h0M765.5 571.5h0M766.5 529.5h0M766.5 536.5h0M766.5 553.5h0M766.5 518.5h0M767.5 528.5h0M767.5 543.5h0M767.5 547.5h0M767.5 510.5h0M768.5 570.5h0M768.5 519.5h0M768.5 540.5h0M768.5 513.5h0M769.5 471.5h0M769.5 492.5h0M769.5 517.5h0M769.5 481.5h0M770.5 472.5h0M770.5 493.5h0M770.5 472.5h0M770.5 511.5h0M771.5 501.5h0M771.5 518.5h0M771.5 524.5h0M771.5 515.5h0M772.5 532.5h0M772.5 518.5h0M772.5 464.5h0M772.5 499.5h0M773.5 520.5h0M773.5 475.5h0M773.5 482.5h0M773.5 538.5h0M774.5 530.5h0M774.5 475.5h0M774.5 513.5h0M774.5 511.5h0M775.5 527.5h0M775.5 539.5h0M775.5 489.5h0M775.5 532.5h0M776.5 503.5h0M776.5 472.5h0M776.5 503.5h0M776.5 520.5h0M777.5 501.5h0M777.5 503.5h0M777.5 525.5h0M777.5 509.5h0M778.5 541.5h0M778.5 552.5h0M778.5 527.5h0M778.5 552.5h0M779.5 529.5h0M779.5 518.5h0M779.5 512.5h0M779.5 472.5h0M780.5 535.5h0M780.5 526.5h0M780.5 526.5h0M780.5 537.5h0M781.5 469.5h0M781.5 533.5h0M781.5 522.5h0M781.5 521.5h0M782.5 460.5h0M782.5 525.5h0M782.5 535.5h0M782.5 490.5h0M783.5 534.5h0M783.5 564.5h0M783.5 494.5h0M783.5 500.5h0M784.5 552.5h0M784.5 549.5h0M784.5 524.5h0M784.5 544.5h0M785.5 556.5h0M785.5 550.5h0M785.5 483.5h0M785.5 501.5h0M786.5 549.5h0M786.5 530.5h0M786.5 525.5h0M786.5 535.5h0M787.5 529.5h0M787.5 486.5h0M787.5 541.5h0M787.5 544.5h0M788.5 529.5h0M788.5 542.5h0M788.5 537.5h0M788.5 537.5h0M789.5 549.5h0M789.5 500.5h0M789.5 542.5h0M789.5 497.5h0M790.5 546.5h0M790.5 548.5h0M790.5 523.5h0M790.5 534.5h0M791.5 508.5h0M791.5 513.5h0M791.5 473.5h0M791.5 544.5h0M792.5 550.5h0M792.5 529.5h0M792.5 533.5h0M792.5 530.5h0M793.5 466.5h0M793.5 575.5h0M793.5 512.5h0M793.5 532.5h0M794.5 527.5h0M794.5 500.5h0M794.5 527.5h0M794.5 506.5h0M795.5 494.5h0M795.5 495.5h0M795.5 563.5h0M795.5 537.5h0M796.5 550.5h0M796.5 538.5h0M796.5 525.5h0M796.5 471.5h0M797.5 534.5h0M797.5 526.5h0M797.5 523.5h0M797.5 483.5h0M798.5 530.5h0M798.5 507.5h0M798.5 498.5h0M798.5 504.5h0M799.5 560.5h0M799.5 544.5h0M799.5 501.5h0M799.5 554.5h0M800.5 522.5h0M800.5 549.5h0M800.5 508.5h0M800.5 519.5h0M801.5 550.5h0M801.5 523.5h0M801.5 540.5h0M801.5 530.5h0M802.5 488.5h0M802.5 511.5h0M802.5 510.5h0M802.5 481.5h0M803.5 516.5h0M803.5 487.5h0M803.5 509.5h0M803.5 512.5h0M804.5 525.5h0M804.5 535.5h0M804.5 539.5h0M804.5 537.5h0M805.5 506.5h0M805.5 508.5h0M805.5 535.5h0M805.5 489.5h0M806.5 531.5h0M806.5 526.5h0M806.5 546.5h0M806.5 535.5h0M807.5 497.5h0M807.5 508.5h0M807.5 531.5h0M807.5 489.5h0M808.5 519.5h0M808.5 516.5h0M808.5 493.5h0M808.5 507.5h0M809.5 525.5h0M809.5 540.5h0M809.5 487.5h0M809.5 567.5h0M810.5 531.5h0M810.5 554.5h0M810.5 530.5h0M810.5 498.5h0M811.5 525.5h0M811.5 527.5h0M811.5 519.5h0M811.5 471.5h0M812.5 485.5h0M812.5 513.5h0M812.5 531.5h0M812.5 526.5h0M813.5 510.5h0M813.5 523.5h0M813.5 521.5h0M813.5 540.5h0M814.5 547.5h0M814.5 542.5h0M814.5 515.5h0M814.5 540.5h0M815.5 461.5h0M815.5 508.5h0M815.5 507.5h0M815.5 499.5h0M816.5 544.5h0M816.5 547.5h0M816.5 528.5h0M816.5 510.5h0M817.5 512.5h0M817.5 486.5h0M817.5 492.5h0M817.5 501.5h0M818.5 499.5h0M818.5 520.5h0M818.5 506.5h0M818.5 532.5h0M819.5 535.5h0M819.5 504.5h0M819.5 560.5h0M819.5 493.5h0M820.5 482.5h0M820.5 536.5h0M820.5 508.5h0M820.5 521.5h0M821.5 545.5h0M821.5 516.5h0M821.5 512.5h0M821.5 501.5h0M822.5 532.5h0M822.5 521.5h0M822.5 537.5h0M822.5 501.5h0M823.5 527.5h0M823.5 504.5h0M823.5 538.5h0M823.5 521.5h0M824.5 542.5h0M824.5 538.5h0M824.5 496.5h0M824.5 526.5h0M825.5 523.5h0M825.5 503.5h0M825.5 537.5h0M825.5 473.5h0M826.5 534.5h0M826.5 526.5h0M826.5 466.5h0M826.5 552.5h0M827.5 474.5h0M827.5 506.5h0M827.5 502.5h0M827.5 535.5h0M828.5 509.5h0M828.5 538.5h0M828.5 488.5h0M828.5 517.5h0M829.5 525.5h0M829.5 521.5h0M829.5 514.5h0M829.5 487.5h0M830.5 501.5h0M830.5 526.5h0M830.5 528.5h0M830.5 531.5h0M831.5 491.5h0M831.5 499.5h0M831.5 533.5h0M831.5 544.5h0M832.5 512.5h0M832.5 522.5h0M832.5 498.5h0M832.5 513.5h0M833.5 502.5h0M833.5 492.5h0M833.5 486.5h0M833.5 515.5h0M834.5 494.5h0M834.5 523.5h0M834.5 536.5h0M834.5 506.5h0M835.5 483.5h0M835.5 478.5h0M835.5 512.5h0M835.5 546.5h0M836.5 503.5h0M836.5 515.5h0M836.5 496.5h0M836.5 486.5h0M837.5 520.5h0M837.5 526.5h0M837.5 519.5h0M837.5 525.5h0M838.5 532.5h0M838.5 506.5h0M838.5 526.5h0M838.5 517.5h0M839.5 518.5h0M839.5 524.5h0M839.5 497.5h0M839.5 521.5h0M840.5 513.5h0M840.5 493.5h0M840.5 515.5h0M840.5 541.5h0M841.5 521.5h0M841.5 521.5h0M841.5 497.5h0M841.5 473.5h0M842.5 507.5h0M842.5 515.5h0M842.5 478.5h0M842.5 526.5h0M843.5 505.5h0M843.5 501.5h0M843.5 513.5h0M843.5 516.5h0M844.5 508.5h0M844.5 477.5h0M844.5 499.5h0M844.5 524.5h0M845.5 505.5h0M845.5 490.5h0M845.5 471.5h0M845.5 493.5h0M845.5 507.5h0M846.5 480.5h0M846.5 491.5h0M846.5 509.5h0M846.5 525.5h0M847.5 510.5h0M847.5 490.5h0M847.5 534.5h0M847.5 544.5h0M848.5 500.5h0M848.5 543.5h0M848.5 538.5h0M848.5 516.5h0M849.5 517.5h0M849.5 511.5h0M849.5 508.5h0M849.5 500.5h0M850.5 514.5h0M850.5 529.5h0M850.5 570.5h0M850.5 484.5h0M851.5 494.5h0M851.5 498.5h0M851.5 513.5h0M851.5 530.5h0M852.5 502.5h0M852.5 514.5h0M852.5 540.5h0M852.5 489.5h0M853.5 542.5h0M853.5 521.5h0M853.5 472.5h0M853.5 529.5h0M854.5 509.5h0M854.5 488.5h0M854.5 513.5h0M854.5 541.5h0M855.5 523.5h0M855.5 514.5h0M855.5 543.5h0M855.5 480.5h0M856.5 506.5h0M856.5 497.5h0M856.5 507.5h0M856.5 505.5h0M857.5 520.5h0M857.5 543.5h0M857.5 498.5h0M857.5 513.5h0M858.5 477.5h0M858.5 537.5h0M858.5 510.5h0M858.5 463.5h0M859.5 541.5h0M859.5 537.5h0M859.5 508.5h0M859.5 474.5h0M860.5 538.5h0M860.5 513.5h0M860.5 518.5h0M860.5 526.5h0M861.5 520.5h0M861.5 487.5h0M861.5 513.5h0M861.5 543.5h0M862.5 530.5h0M862.5 516.5h0M862.5 547.5h0M862.5 533.5h0M863.5 528.5h0M863.5 564.5h0M863.5 479.5h0M863.5 556.5h0M864.5 523.5h0M864.5 528.5h0M864.5 538.5h0M864.5 499.5h0M865.5 527.5h0M865.5 546.5h0M865.5 504.5h0M865.5 519.5h0M866.5 554.5h0M866.5 564.5h0M866.5 514.5h0M866.5 538.5h0M867.5 566.5h0M867.5 524.5h0M867.5 566.5h0M867.5 552.5h0M868.5 555.5h0M868.5 579.5h0M868.5 524.5h0M868.5 516.5h0M869.5 525.5h0M869.5 531.5h0M869.5 546.5h0M869.5 542.5h0M870.5 535.5h0M870.5 527.5h0M870.5 551.5h0M870.5 540.5h0M871.5 545.5h0M871.5 528.5h0M871.5 519.5h0M871.5 515.5h0M872.5 549.5h0M872.5 550.5h0M872.5 524.5h0M872.5 545.5h0M873.5 544.5h0M873.5 529.5h0M873.5 531.5h0M873.5 509.5h0M874.5 564.5h0M874.5 513.5h0M874.5 549.5h0M874.5 524.5h0M875.5 566.5h0M875.5 542.5h0M875.5 552.5h0M875.5 498.5h0M876.5 559.5h0M876.5 513.5h0M876.5 556.5h0M876.5 562.5h0M877.5 532.5h0M877.5 514.5h0M877.5 540.5h0M877.5 525.5h0M878.5 533.5h0M878.5 540.5h0M878.5 507.5h0M878.5 539.5h0M879.5 519.5h0M879.5 562.5h0M879.5 543.5h0M879.5 517.5h0M880.5 548.5h0M880.5 582.5h0M880.5 521.5h0M880.5 525.5h0M881.5 544.5h0M881.5 536.5h0M881.5 545.5h0M881.5 529.5h0M882.5 513.5h0M882.5 531.5h0M882.5 540.5h0M882.5 548.5h0M883.5 542.5h0M883.5 549.5h0M883.5 516.5h0M883.5 560.5h0M884.5 550.5h0M884.5 530.5h0M884.5 530.5h0M884.5 532.5h0M885.5 547.5h0M885.5 533.5h0M885.5 567.5h0M885.5 569.5h0M886.5 564.5h0M886.5 529.5h0M886.5 506.5h0M886.5 547.5h0M887.5 549.5h0M887.5 544.5h0M887.5 496.5h0M887.5 533.5h0M888.5 535.5h0M888.5 549.5h0M888.5 526.5h0M888.5 507.5h0M889.5 533.5h0M889.5 554.5h0M889.5 507.5h0M889.5 538.5h0M890.5 496.5h0M890.5 559.5h0M890.5 540.5h0M890.5 531.5h0M891.5 573.5h0M891.5 535.5h0M891.5 523.5h0M891.5 540.5h0M892.5 527.5h0M892.5 533.5h0M892.5 555.5h0M892.5 521.5h0M893.5 553.5h0M893.5 544.5h0M893.5 553.5h0M893.5 523.5h0M894.5 547.5h0M894.5 547.5h0M894.5 581.5h0M894.5 544.5h0M895.5 515.5h0M895.5 580.5h0M895.5 529.5h0M895.5 539.5h0M896.5 573.5h0M896.5 546.5h0M896.5 516.5h0M896.5 538.5h0M897.5 530.5h0M897.5 512.5h0M897.5 545.5h0M897.5 518.5h0M898.5 563.5h0M898.5 555.5h0M898.5 504.5h0M898.5 506.5h0M899.5 516.5h0M899.5 568.5h0M899.5 542.5h0M899.5 556.5h0M900.5 493.5h0M900.5 565.5h0M900.5 564.5h0M900.5 550.5h0M901.5 530.5h0M901.5 549.5h0M901.5 544.5h0M901.5 531.5h0M902.5 537.5h0M902.5 576.5h0M902.5 563.5h0M902.5 500.5h0M903.5 536.5h0M903.5 495.5h0M903.5 504.5h0M903.5 512.5h0M904.5 536.5h0M904.5 502.5h0M904.5 546.5h0M904.5 485.5h0M905.5 523.5h0M905.5 523.5h0M905.5 545.5h0M905.5 548.5h0M906.5 542.5h0M906.5 547.5h0M906.5 554.5h0M906.5 558.5h0M907.5 532.5h0M907.5 508.5h0M907.5 491.5h0M907.5 518.5h0M908.5 538.5h0M908.5 521.5h0M908.5 496.5h0M908.5 532.5h0M909.5 512.5h0M909.5 526.5h0M909.5 532.5h0M909.5 547.5h0M910.5 519.5h0M910.5 552.5h0M910.5 556.5h0M910.5 527.5h0M911.5 513.5h0M911.5 514.5h0M911.5 516.5h0M911.5 542.5h0M912.5 538.5h0M912.5 509.5h0M912.5 488.5h0M912.5 502.5h0M913.5 507.5h0M913.5 530.5h0M913.5 537.5h0M913.5 551.5h0M914.5 549.5h0M914.5 560.5h0M914.5 529.5h0M914.5 556.5h0M915.5 540.5h0M915.5 566.5h0M915.5 508.5h0M915.5 520.5h0M916.5 560.5h0M916.5 525.5h0M916.5 544.5h0M916.5 554.5h0M917.5 534.5h0M917.5 517.5h0M917.5 501.5h0M917.5 530.5h0M918.5 509.5h0M918.5 520.5h0M918.5 520.5h0M918.5 513.5h0M919.5 564.5h0M919.5 544.5h0M919.5 502.5h0M919.5 563.5h0M920.5 553.5h0M920.5 492.5h0M920.5 556.5h0M920.5 532.5h0M921.5 528.5h0M921.5 540.5h0M921.5 512.5h0M921.5 513.5h0M922.5 546.5h0M922.5 490.5h0M922.5 547.5h0M922.5 538.5h0M923.5 531.5h0M923.5 523.5h0M923.5 549.5h0M923.5 520.5h0M924.5 569.5h0M924.5 534.5h0M924.5 541.5h0M924.5 536.5h0M925.5 523.5h0M925.5 515.5h0M925.5 535.5h0M925.5 519.5h0M926.5 549.5h0M926.5 526.5h0M926.5 497.5h0M926.5 532.5h0M927.5 524.5h0M927.5 518.5h0M927.5 499.5h0M927.5 509.5h0M928.5 521.5h0M928.5 538.5h0M928.5 513.5h0M928.5 576.5h0M929.5 509.5h0M929.5 533.5h0M929.5 503.5h0M929.5 519.5h0M930.5 487.5h0M930.5 531.5h0M930.5 558.5h0M930.5 518.5h0M931.5 528.5h0M931.5 520.5h0M931.5 491.5h0M931.5 536.5h0M932.5 503.5h0M932.5 498.5h0M932.5 494.5h0M932.5 558.5h0M933.5 515.5h0M933.5 532.5h0M933.5 523.5h0M933.5 535.5h0M934.5 525.5h0M934.5 497.5h0M934.5 479.5h0M934.5 502.5h0M935.5 543.5h0M935.5 490.5h0M935.5 543.5h0M935.5 526.5h0M936.5 493.5h0M936.5 530.5h0M936.5 502.5h0M936.5 524.5h0M937.5 541.5h0M937.5 514.5h0M937.5 529.5h0M937.5 478.5h0M938.5 476.5h0M938.5 482.5h0M938.5 539.5h0M938.5 475.5h0M939.5 511.5h0M939.5 507.5h0M939.5 514.5h0M939.5 529.5h0M940.5 515.5h0M940.5 498.5h0M940.5 483.5h0M940.5 505.5h0M941.5 518.5h0M941.5 528.5h0M941.5 524.5h0M941.5 481.5h0M942.5 502.5h0M942.5 513.5h0M942.5 551.5h0M942.5 554.5h0M943.5 503.5h0M943.5 504.5h0M943.5 493.5h0M943.5 514.5h0M944.5 531.5h0M944.5 552.5h0M944.5 537.5h0M944.5 565.5h0M945.5 511.5h0M945.5 507.5h0M945.5 487.5h0M945.5 555.5h0M946.5 547.5h0M946.5 504.5h0M946.5 511.5h0M946.5 559.5h0M947.5 532.5h0M947.5 516.5h0M947.5 526.5h0M947.5 510.5h0M948.5 518.5h0M948.5 530.5h0M948.5 510.5h0M948.5 521.5h0M949.5 493.5h0M949.5 549.5h0M949.5 525.5h0M949.5 535.5h0M950.5 526.5h0M950.5 513.5h0M950.5 508.5h0M950.5 566.5h0M951.5 497.5h0M951.5 512.5h0M951.5 512.5h0M951.5 523.5h0M952.5 504.5h0M952.5 516.5h0M952.5 563.5h0M952.5 540.5h0M953.5 532.5h0M953.5 535.5h0M953.5 537.5h0M953.5 514.5h0M954.5 551.5h0M954.5 544.5h0M954.5 549.5h0M954.5 529.5h0M955.5 518.5h0M955.5 547.5h0M955.5 520.5h0M955.5 540.5h0M955.5 496.5h0M956.5 574.5h0M956.5 529.5h0M956.5 502.5h0M956.5 536.5h0M957.5 551.5h0M957.5 546.5h0M957.5 516.5h0M957.5 539.5h0M958.5 504.5h0M958.5 527.5h0M958.5 540.5h0M958.5 537.5h0M959.5 517.5h0M959.5 505.5h0M959.5 545.5h0M959.5 552.5h0M960.5 552.5h0M960.5 517.5h0M960.5 486.5h0M960.5 539.5h0M961.5 512.5h0M961.5 536.5h0M961.5 506.5h0M961.5 558.5h0M962.5 514.5h0M962.5 554.5h0M962.5 545.5h0M962.5 520.5h0M963.5 533.5h0M963.5 529.5h0M963.5 516.5h0M963.5 523.5h0M964.5 493.5h0M964.5 510.5h0M964.5 545.5h0M964.5 529.5h0M965.5 539.5h0M965.5 536.5h0M965.5 486.5h0M965.5 544.5h0M966.5 498.5h0M966.5 493.5h0M966.5 464.5h0M966.5 527.5h0M967.5 522.5h0M967.5 521.5h0M967.5 535.5h0M967.5 486.5h0M968.5 482.5h0M968.5 574.5h0M968.5 534.5h0M968.5 500.5h0M969.5 549.5h0M969.5 542.5h0M969.5 527.5h0M969.5 528.5h0M970.5 531.5h0M970.5 531.5h0M970.5 485.5h0M970.5 575.5h0M971.5 538.5h0M971.5 551.5h0M971.5 522.5h0M971.5 537.5h0M972.5 517.5h0M972.5 528.5h0M972.5 474.5h0M972.5 555.5h0M973.5 538.5h0M973.5 507.5h0M973.5 535.5h0M973.5 524.5h0M974.5 558.5h0M974.5 510.5h0M974.5 529.5h0M974.5 513.5h0M975.5 545.5h0M975.5 537.5h0M975.5 543.5h0M975.5 486.5h0M976.5 561.5h0M976.5 514.5h0M976.5 518.5h0M976.5 494.5h0M977.5 517.5h0M977.5 544.5h0M977.5 510.5h0M977.5 558.5h0M978.5 497.5h0M978.5 524.5h0M978.5 537.5h0M978.5 531.5h0M979.5 507.5h0M979.5 555.5h0M979.5 480.5h0M979.5 535.5h0M980.5 485.5h0M980.5 516.5h0M980.5 475.5h0M980.5 545.5h0M981.5 500.5h0M981.5 522.5h0M981.5 533.5h0M981.5 501.5h0M982.5 525.5h0M982.5 536.5h0M982.5 525.5h0M982.5 536.5h0M983.5 525.5h0M983.5 521.5h0M983.5 495.5h0M983.5 522.5h0M984.5 536.5h0M984.5 503.5h0M984.5 528.5h0M984.5 541.5h0M985.5 545.5h0M985.5 479.5h0M985.5 523.5h0M985.5 483.5h0M986.5 541.5h0M986.5 543.5h0M986.5 481.5h0M986.5 527.5h0M987.5 526.5h0M987.5 527.5h0M987.5 544.5h0M987.5 499.5h0M988.5 548.5h0M988.5 506.5h0M988.5 546.5h0M988.5 463.5h0M989.5 508.5h0M989.5 499.5h0M989.5 561.5h0M989.5 518.5h0M990.5 540.5h0M990.5 545.5h0M990.5 545.5h0M990.5 508.5h0M991.5 527.5h0M991.5 538.5h0M991.5 541.5h0M991.5 542.5h0M992.5 540.5h0M992.5 534.5h0M992.5 552.5h0M992.5 548.5h0M993.5 575.5h0M993.5 529.5h0M993.5 515.5h0M993.5 539.5h0M994.5 496.5h0M994.5 545.5h0M994.5 528.5h0M994.5 501.5h0M995.5 523.5h0M995.5 545.5h0M995.5 520.5h0M995.5 537.5h0M996.5 502.5h0M996.5 511.5h0M996.5 533.5h0M996.5 516.5h0M997.5 488.5h0M997.5 502.5h0M997.5 508.5h0M997.5 532.5h0M998.5 540.5h0M998.5 543.5h0M998.5 503.5h0M998.5 550.5h0M999.5 517.5h0M999.5 489.5h0M999.5 559.5h0M999.5 517.5h0M1000.5 545.5h0M1000.5 527.5h0M1000.5 512.5h0M1000.5 544.5h0M1001.5 550.5h0M1001.5 530.5h0M1001.5 517.5h0M1001.5 529.5h0M1002.5 540.5h0M1002.5 504.5h0M1002.5 543.5h0M1002.5 549.5h0M1003.5 516.5h0M1003.5 468.5h0M1003.5 528.5h0M1003.5 520.5h0M1004.5 539.5h0M1004.5 530.5h0M1004.5 541.5h0M1004.5 511.5h0M1005.5 531.5h0M1005.5 534.5h0M1005.5 496.5h0M1005.5 547.5h0M1006.5 496.5h0M1006.5 521.5h0M1006.5 536.5h0M1006.5 518.5h0M1007.5 523.5h0M1007.5 510.5h0M1007.5 522.5h0M1007.5 473.5h0M1008.5 493.5h0M1008.5 491.5h0M1008.5 542.5h0M1008.5 524.5h0M1009.5 489.5h0M1009.5 503.5h0M1009.5 517.5h0M1009.5 519.5h0M1010.5 493.5h0M1010.5 556.5h0M1010.5 535.5h0M1010.5 546.5h0M1011.5 490.5h0M1011.5 546.5h0M1011.5 523.5h0M1011.5 485.5h0M1012.5 523.5h0M1012.5 510.5h0M1012.5 516.5h0M1012.5 501.5h0M1013.5 465.5h0M1013.5 541.5h0M1013.5 518.5h0M1013.5 478.5h0M1014.5 461.5h0M1014.5 521.5h0M1014.5 484.5h0M1014.5 501.5h0M1015.5 502.5h0M1015.5 546.5h0M1015.5 550.5h0M1015.5 514.5h0M1016.5 519.5h0M1016.5 519.5h0M1016.5 541.5h0M1016.5 483.5h0M1017.5 521.5h0M1017.5 500.5h0M1017.5 522.5h0M1017.5 508.5h0M1018.5 499.5h0M1018.5 524.5h0M1018.5 537.5h0M1018.5 528.5h0M1019.5 516.5h0M1019.5 527.5h0M1019.5 470.5h0M1019.5 527.5h0M1020.5 498.5h0M1020.5 497.5h0M1020.5 512.5h0M1020.5 539.5h0M1021.5 505.5h0M1021.5 494.5h0M1021.5 512.5h0M1021.5 516.5h0M1022.5 561.5h0M1022.5 539.5h0M1022.5 520.5h0M1022.5 512.5h0M1023.5 499.5h0M1023.5 523.5h0M1023.5 512.5h0M1023.5 538.5h0M1024.5 502.5h0M1024.5 499.5h0M1024.5 519.5h0M1024.5 494.5h0M1025.5 523.5h0M1025.5 527.5h0M1025.5 523.5h0M1025.5 470.5h0M1026.5 550.5h0M1026.5 512.5h0M1026.5 524.5h0M1026.5 514.5h0M1027.5 547.5h0M1027.5 499.5h0M1027.5 501.5h0M1027.5 522.5h0M1028.5 525.5h0M1028.5 515.5h0M1028.5 494.5h0M1028.5 548.5h0M1029.5 483.5h0M1029.5 523.5h0M1029.5 497.5h0M1029.5 533.5h0M1030.5 470.5h0M1030.5 510.5h0M1030.5 474.5h0M1030.5 529.5h0M1031.5 529.5h0M1031.5 489.5h0M1031.5 499.5h0M1031.5 508.5h0M1032.5 486.5h0M1032.5 505.5h0M1032.5 523.5h0M1032.5 555.5h0M1033.5 563.5h0M1033.5 500.5h0M1033.5 502.5h0M1033.5 534.5h0M1034.5 503.5h0M1034.5 520.5h0M1034.5 514.5h0M1034.5 493.5h0M1035.5 548.5h0M1035.5 507.5h0M1035.5 503.5h0M1035.5 519.5h0M1036.5 512.5h0M1036.5 539.5h0M1036.5 512.5h0M1036.5 501.5h0M1037.5 498.5h0M1037.5 532.5h0M1037.5 499.5h0M1037.5 511.5h0M1038.5 503.5h0M1038.5 520.5h0M1038.5 505.5h0M1038.5 516.5h0M1039.5 464.5h0M1039.5 528.5h0M1039.5 496.5h0M1039.5 524.5h0M1040.5 555.5h0M1040.5 513.5h0M1040.5 496.5h0M1040.5 508.5h0M1041.5 508.5h0M1041.5 543.5h0M1041.5 520.5h0M1041.5 556.5h0M1042.5 485.5h0M1042.5 491.5h0M1042.5 549.5h0M1042.5 536.5h0M1043.5 553.5h0M1043.5 543.5h0M1043.5 537.5h0M1043.5 552.5h0M1044.5 537.5h0M1044.5 512.5h0M1044.5 533.5h0M1044.5 511.5h0M1045.5 531.5h0M1045.5 525.5h0M1045.5 554.5h0M1045.5 506.5h0M1046.5 551.5h0M1046.5 535.5h0M1046.5 554.5h0M1046.5 516.5h0M1047.5 549.5h0M1047.5 514.5h0M1047.5 482.5h0M1047.5 519.5h0M1048.5 574.5h0M1048.5 504.5h0M1048.5 523.5h0M1048.5 513.5h0M1049.5 518.5h0M1049.5 500.5h0M1049.5 503.5h0M1049.5 529.5h0M1050.5 553.5h0M1050.5 529.5h0M1050.5 509.5h0M1050.5 566.5h0M1051.5 524.5h0M1051.5 564.5h0M1051.5 501.5h0M1051.5 483.5h0M1052.5 506.5h0M1052.5 536.5h0M1052.5 508.5h0M1052.5 495.5h0M1053.5 487.5h0M1053.5 493.5h0M1053.5 501.5h0M1053.5 547.5h0M1054.5 529.5h0M1054.5 516.5h0M1054.5 526.5h0M1054.5 567.5h0M1055.5 531.5h0M1055.5 542.5h0M1055.5 522.5h0M1055.5 519.5h0M1056.5 556.5h0M1056.5 542.5h0M1056.5 522.5h0M1056.5 547.5h0M1057.5 526.5h0M1057.5 542.5h0M1057.5 539.5h0M1057.5 502.5h0M1058.5 525.5h0M1058.5 533.5h0M1058.5 485.5h0M1058.5 527.5h0M1059.5 520.5h0M1059.5 519.5h0M1059.5 548.5h0M1059.5 503.5h0M1060.5 497.5h0M1060.5 524.5h0M1060.5 496.5h0M1060.5 488.5h0M1061.5 538.5h0M1061.5 503.5h0M1061.5 474.5h0M1061.5 470.5h0M1062.5 507.5h0M1062.5 513.5h0M1062.5 526.5h0M1062.5 487.5h0M1063.5 499.5h0M1063.5 534.5h0M1063.5 488.5h0M1063.5 538.5h0M1064.5 526.5h0M1064.5 514.5h0M1064.5 537.5h0M1064.5 484.5h0M1065.5 521.5h0M1065.5 538.5h0M1065.5 506.5h0M1065.5 512.5h0M1065.5 534.5h0M1066.5 523.5h0M1066.5 491.5h0M1066.5 492.5h0M1066.5 545.5h0M1067.5 489.5h0M1067.5 489.5h0M1067.5 484.5h0M1067.5 522.5h0M1068.5 528.5h0M1068.5 514.5h0M1068.5 525.5h0M1068.5 517.5h0M1069.5 524.5h0M1069.5 518.5h0M1069.5 522.5h0M1069.5 511.5h0M1070.5 508.5h0M1070.5 517.5h0M1070.5 523.5h0M1070.5 474.5h0M1071.5 489.5h0M1071.5 500.5h0M1071.5 530.5h0M1071.5 497.5h0M1072.5 515.5h0M1072.5 497.5h0M1072.5 506.5h0M1072.5 534.5h0M1073.5 511.5h0M1073.5 533.5h0M1073.5 486.5h0M1073.5 484.5h0M1074.5 480.5h0M1074.5 566.5h0M1074.5 531.5h0M1074.5 529.5h0M1075.5 546.5h0M1075.5 509.5h0M1075.5 497.5h0M1075.5 487.5h0M1076.5 491.5h0M1076.5 512.5h0M1076.5 476.5h0M1076.5 506.5h0M1077.5 571.5h0M1077.5 519.5h0M1077.5 528.5h0M1077.5 505.5h0M1078.5 522.5h0M1078.5 520.5h0M1078.5 481.5h0M1078.5 529.5h0M1079.5 542.5h0M1079.5 508.5h0M1079.5 498.5h0M1079.5 516.5h0M1080.5 514.5h0M1080.5 526.5h0M1080.5 541.5h0M1080.5 529.5h0M1081.5 536.5h0M1081.5 485.5h0M1081.5 519.5h0M1081.5 481.5h0M1082.5 517.5h0M1082.5 533.5h0M1082.5 510.5h0M1082.5 509.5h0M1083.5 483.5h0M1083.5 556.5h0M1083.5 523.5h0M1083.5 504.5h0M1084.5 530.5h0M1084.5 511.5h0M1084.5 520.5h0M1084.5 480.5h0M1085.5 484.5h0M1085.5 557.5h0M1085.5 546.5h0M1085.5 530.5h0M1086.5 515.5h0M1086.5 517.5h0M1086.5 525.5h0M1086.5 500.5h0M1087.5 493.5h0M1087.5 512.5h0M1087.5 520.5h0M1087.5 513.5h0M1088.5 531.5h0M1088.5 494.5h0M1088.5 494.5h0M1088.5 533.5h0M1089.5 479.5h0M1089.5 515.5h0M1089.5 494.5h0M1089.5 514.5h0M1090.5 518.5h0M1090.5 497.5h0M1090.5 535.5h0M1090.5 520.5h0M1091.5 540.5h0M1091.5 504.5h0M1091.5 521.5h0M1091.5 523.5h0M1092.5 528.5h0M1092.5 503.5h0M1092.5 513.5h0M1092.5 524.5h0M1093.5 530.5h0M1093.5 479.5h0M1093.5 486.5h0M1093.5 546.5h0M1094.5 494.5h0M1094.5 511.5h0M1094.5 517.5h0M1094.5 515.5h0M1095.5 554.5h0M1095.5 468.5h0M1095.5 478.5h0M1095.5 526.5h0M1096.5 527.5h0M1096.5 524.5h0M1096.5 542.5h0M1096.5 515.5h0M1097.5 529.5h0M1097.5 551.5h0M1097.5 539.5h0M1097.5 542.5h0M1098.5 541.5h0M1098.5 535.5h0M1098.5 514.5h0M1098.5 537.5h0M1099.5 562.5h0M1099.5 494.5h0M1099.5 540.5h0M1099.5 493.5h0M1100.5 521.5h0M1100.5 514.5h0M1100.5 543.5h0M1100.5 523.5h0M1101.5 533.5h0M1101.5 526.5h0M1101.5 513.5h0M1101.5 532.5h0M1102.5 504.5h0M1102.5 552.5h0M1102.5 545.5h0M1102.5 512.5h0M1103.5 509.5h0M1103.5 496.5h0M1103.5 483.5h0M1103.5 510.5h0M1104.5 503.5h0M1104.5 514.5h0M1104.5 516.5h0M1104.5 522.5h0M1105.5 517.5h0M1105.5 531.5h0M1105.5 523.5h0M1105.5 501.5h0M1106.5 508.5h0M1106.5 493.5h0M1106.5 529.5h0M1106.5 527.5h0M1107.5 509.5h0M1107.5 537.5h0M1107.5 538.5h0M1107.5 505.5h0M1108.5 526.5h0M1108.5 500.5h0M1108.5 518.5h0M1108.5 529.5h0M1109.5 541.5h0M1109.5 492.5h0M1109.5 522.5h0M1109.5 538.5h0M1110.5 551.5h0M1110.5 546.5h0M1110.5 529.5h0M1110.5 491.5h0M1111.5 539.5h0M1111.5 514.5h0M1111.5 516.5h0M1111.5 541.5h0M1112.5 547.5h0M1112.5 502.5h0M1112.5 563.5h0M1112.5 495.5h0M1113.5 521.5h0M1113.5 556.5h0M1113.5 478.5h0M1113.5 524.5h0M1114.5 484.5h0M1114.5 517.5h0M1114.5 537.5h0M1114.5 495.5h0M1115.5 479.5h0M1115.5 492.5h0M1115.5 546.5h0M1115.5 507.5h0M1116.5 546.5h0M1116.5 534.5h0M1116.5 490.5h0M1116.5 551.5h0M1117.5 463.5h0M1117.5 553.5h0M1117.5 548.5h0M1117.5 504.5h0M1118.5 526.5h0M1118.5 525.5h0M1118.5 541.5h0M1118.5 505.5h0M1119.5 517.5h0M1119.5 523.5h0M1119.5 538.5h0M1119.5 553.5h0M1120.5 522.5h0M1120.5 567.5h0M1120.5 535.5h0M1120.5 507.5h0M1121.5 506.5h0M1121.5 530.5h0M1121.5 575.5h0M1121.5 509.5h0M1122.5 501.5h0M1122.5 520.5h0M1122.5 492.5h0M1122.5 498.5h0M1123.5 556.5h0M1123.5 526.5h0M1123.5 532.5h0M1123.5 485.5h0M1124.5 496.5h0M1124.5 519.5h0M1124.5 508.5h0M1124.5 501.5h0M1125.5 536.5h0M1125.5 525.5h0M1125.5 523.5h0M1125.5 530.5h0M1126.5 528.5h0M1126.5 516.5h0M1126.5 548.5h0M1126.5 545.5h0M1127.5 503.5h0M1127.5 485.5h0M1127.5 476.5h0M1127.5 557.5h0M1128.5 512.5h0M1128.5 537.5h0M1128.5 531.5h0M1128.5 524.5h0M1129.5 510.5h0M1129.5 506.5h0M1129.5 570.5h0M1129.5 532.5h0M1130.5 493.5h0M1130.5 516.5h0M1130.5 552.5h0M1130.5 539.5h0M1131.5 535.5h0M1131.5 495.5h0M1131.5 477.5h0M1131.5 541.5h0M1132.5 506.5h0M1132.5 524.5h0M1132.5 505.5h0M1132.5 523.5h0M1133.5 541.5h0M1133.5 532.5h0M1133.5 532.5h0M1133.5 484.5h0M1134.5 534.5h0M1134.5 505.5h0M1134.5 536.5h0M1134.5 532.5h0M1135.5 513.5h0M1135.5 530.5h0M1135.5 472.5h0M1135.5 487.5h0M1136.5 542.5h0M1136.5 506.5h0M1136.5 483.5h0M1136.5 543.5h0M1137.5 527.5h0M1137.5 483.5h0M1137.5 535.5h0M1137.5 504.5h0M1138.5 520.5h0M1138.5 514.5h0M1138.5 540.5h0M1138.5 520.5h0M1139.5 527.5h0M1139.5 477.5h0M1139.5 503.5h0M1139.5 516.5h0M1140.5 519.5h0M1140.5 502.5h0M1140.5 552.5h0M1140.5 539.5h0M1141.5 537.5h0M1141.5 535.5h0M1141.5 553.5h0M1141.5 507.5h0M1142.5 528.5h0M1142.5 489.5h0M1142.5 521.5h0M1142.5 526.5h0M1143.5 508.5h0M1143.5 509.5h0M1143.5 524.5h0M1143.5 505.5h0M1144.5 489.5h0M1144.5 528.5h0M1144.5 488.5h0M1144.5 522.5h0M1145.5 498.5h0M1145.5 519.5h0M1145.5 526.5h0M1145.5 512.5h0M1146.5 542.5h0M1146.5 552.5h0M1146.5 519.5h0M1146.5 524.5h0M1147.5 542.5h0M1147.5 469.5h0M1147.5 509.5h0M1147.5 533.5h0M1148.5 507.5h0M1148.5 506.5h0M1148.5 527.5h0M1148.5 523.5h0M1149.5 557.5h0M1149.5 514.5h0M1149.5 474.5h0M1149.5 492.5h0M1150.5 494.5h0M1150.5 531.5h0M1150.5 541.5h0M1150.5 498.5h0M1151.5 512.5h0M1151.5 523.5h0M1151.5 525.5h0M1151.5 497.5h0M1152.5 504.5h0M1152.5 528.5h0M1152.5 521.5h0M1152.5 553.5h0M1153.5 543.5h0M1153.5 505.5h0M1153.5 528.5h0M1153.5 536.5h0M1154.5 513.5h0M1154.5 490.5h0M1154.5 537.5h0M1154.5 526.5h0M1155.5 525.5h0M1155.5 463.5h0M1155.5 497.5h0M1155.5 516.5h0M1156.5 552.5h0M1156.5 506.5h0M1156.5 511.5h0M1156.5 529.5h0M1157.5 542.5h0M1157.5 536.5h0M1157.5 562.5h0M1157.5 537.5h0M1158.5 540.5h0M1158.5 551.5h0M1158.5 540.5h0M1158.5 567.5h0M1159.5 509.5h0M1159.5 539.5h0M1159.5 561.5h0M1159.5 520.5h0M1160.5 526.5h0M1160.5 550.5h0M1160.5 567.5h0M1160.5 542.5h0M1161.5 531.5h0M1161.5 527.5h0M1161.5 521.5h0M1161.5 523.5h0M1162.5 573.5h0M1162.5 540.5h0M1162.5 581.5h0M1162.5 520.5h0M1163.5 534.5h0M1163.5 521.5h0M1163.5 542.5h0M1163.5 543.5h0M1164.5 554.5h0M1164.5 499.5h0M1164.5 547.5h0M1164.5 483.5h0M1165.5 513.5h0M1165.5 547.5h0M1165.5 535.5h0M1165.5 533.5h0M1166.5 555.5h0M1166.5 543.5h0M1166.5 535.5h0M1166.5 553.5h0M1167.5 532.5h0M1167.5 514.5h0M1167.5 523.5h0M1167.5 536.5h0M1168.5 546.5h0M1168.5 526.5h0M1168.5 553.5h0M1168.5 555.5h0M1169.5 513.5h0M1169.5 550.5h0M1169.5 570.5h0M1169.5 523.5h0M1170.5 526.5h0M1170.5 516.5h0M1170.5 544.5h0M1170.5 516.5h0M1171.5 545.5h0M1171.5 563.5h0M1171.5 546.5h0M1171.5 536.5h0M1172.5 564.5h0M1172.5 546.5h0M1172.5 536.5h0M1172.5 551.5h0M1173.5 540.5h0M1173.5 542.5h0M1173.5 558.5h0M1173.5 534.5h0M1174.5 529.5h0M1174.5 583.5h0M1174.5 555.5h0M1174.5 523.5h0M1175.5 531.5h0M1175.5 580.5h0M1175.5 536.5h0M1175.5 509.5h0M1175.5 521.5h0M1176.5 524.5h0M1176.5 543.5h0M1176.5 540.5h0M1176.5 565.5h0M1177.5 541.5h0M1177.5 487.5h0M1177.5 541.5h0M1177.5 560.5h0M1178.5 529.5h0M1178.5 582.5h0M1178.5 488.5h0M1178.5 527.5h0M1179.5 546.5h0M1179.5 548.5h0M1179.5 559.5h0M1179.5 538.5h0M1180.5 540.5h0M1180.5 572.5h0M1180.5 518.5h0M1180.5 548.5h0M1181.5 563.5h0M1181.5 519.5h0M1181.5 523.5h0M1181.5 552.5h0M1182.5 554.5h0M1182.5 515.5h0M1182.5 548.5h0M1182.5 536.5h0M1183.5 508.5h0M1183.5 565.5h0M1183.5 571.5h0M1183.5 557.5h0M1184.5 551.5h0M1184.5 538.5h0M1184.5 515.5h0M1184.5 546.5h0M1185.5 496.5h0M1185.5 529.5h0M1185.5 573.5h0M1185.5 532.5h0M1186.5 514.5h0M1186.5 503.5h0M1186.5 542.5h0M1186.5 529.5h0M1187.5 473.5h0M1187.5 520.5h0M1187.5 541.5h0M1187.5 552.5h0M1188.5 529.5h0M1188.5 510.5h0M1188.5 540.5h0M1188.5 484.5h0M1189.5 530.5h0M1189.5 553.5h0M1189.5 498.5h0M1189.5 512.5h0M1190.5 517.5h0M1190.5 483.5h0M1190.5 525.5h0M1190.5 496.5h0M1191.5 523.5h0M1191.5 474.5h0M1191.5 512.5h0M1191.5 512.5h0M1192.5 498.5h0M1192.5 514.5h0M1192.5 502.5h0M1192.5 517.5h0M1193.5 498.5h0M1193.5 511.5h0M1193.5 523.5h0M1193.5 499.5h0M1194.5 501.5h0M1194.5 534.5h0M1194.5 518.5h0M1194.5 546.5h0M1195.5 510.5h0M1195.5 493.5h0M1195.5 530.5h0M1195.5 505.5h0M1196.5 488.5h0M1196.5 478.5h0M1196.5 495.5h0M1196.5 550.5h0M1197.5 521.5h0M1197.5 504.5h0M1197.5 505.5h0M1197.5 509.5h0M1198.5 530.5h0M1198.5 550.5h0M1198.5 503.5h0M1198.5 485.5h0M1199.5 522.5h0M1199.5 499.5h0M1199.5 523.5h0M1199.5 515.5h0M1200.5 524.5h0M1200.5 493.5h0M1200.5 531.5h0M1200.5 509.5h0M1201.5 491.5h0M1201.5 512.5h0M1201.5 537.5h0M1201.5 503.5h0M1202.5 517.5h0M1202.5 540.5h0M1202.5 518.5h0M1202.5 521.5h0M1203.5 502.5h0M1203.5 527.5h0M1203.5 516.5h0M1203.5 506.5h0M1204.5 560.5h0M1204.5 500.5h0M1204.5 524.5h0M1204.5 545.5h0M1205.5 523.5h0M1205.5 504.5h0M1205.5 543.5h0M1205.5 542.5h0M1206.5 500.5h0M1206.5 497.5h0M1206.5 488.5h0M1206.5 534.5h0M1207.5 556.5h0M1207.5 557.5h0M1207.5 545.5h0M1207.5 559.5h0M1208.5 529.5h0M1208.5 510.5h0M1208.5 561.5h0M1208.5 505.5h0M1209.5 557.5h0M1209.5 553.5h0M1209.5 567.5h0M1209.5 522.5h0M1210.5 541.5h0M1210.5 538.5h0M1210.5 572.5h0M1210.5 551.5h0M1211.5 532.5h0M1211.5 560.5h0M1211.5 494.5h0M1211.5 532.5h0M1212.5 514.5h0M1212.5 545.5h0M1212.5 518.5h0M1212.5 509.5h0M1213.5 479.5h0M1213.5 560.5h0M1213.5 490.5h0M1213.5 560.5h0M1214.5 535.5h0M1214.5 546.5h0M1214.5 542.5h0M1214.5 577.5h0M1215.5 544.5h0M1215.5 562.5h0M1215.5 542.5h0M1215.5 532.5h0M1216.5 536.5h0M1216.5 540.5h0M1216.5 505.5h0M1216.5 530.5h0M1217.5 524.5h0M1217.5 506.5h0M1217.5 539.5h0M1217.5 535.5h0M1218.5 522.5h0M1218.5 543.5h0M1218.5 508.5h0M1218.5 550.5h0M1219.5 542.5h0M1219.5 540.5h0M1219.5 544.5h0M1219.5 538.5h0M1220.5 547.5h0M1220.5 586.5h0M1220.5 511.5h0M1220.5 547.5h0M1221.5 521.5h0M1221.5 560.5h0M1221.5 524.5h0M1221.5 564.5h0M1222.5 504.5h0M1222.5 541.5h0M1222.5 547.5h0M1222.5 555.5h0M1223.5 584.5h0M1223.5 549.5h0M1223.5 551.5h0M1223.5 551.5h0M1224.5 549.5h0M1224.5 517.5h0M1224.5 547.5h0M1224.5 547.5h0M1225.5 554.5h0M1225.5 561.5h0M1225.5 531.5h0M1225.5 548.5h0M1226.5 547.5h0M1226.5 532.5h0M1226.5 538.5h0M1226.5 521.5h0M1227.5 522.5h0M1227.5 565.5h0M1227.5 555.5h0M1227.5 517.5h0M1228.5 547.5h0M1228.5 524.5h0M1228.5 557.5h0M1228.5 589.5h0M1229.5 584.5h0M1229.5 553.5h0M1229.5 548.5h0M1229.5 484.5h0M1230.5 521.5h0M1230.5 523.5h0M1230.5 517.5h0M1230.5 571.5h0M1231.5 537.5h0M1231.5 541.5h0M1231.5 493.5h0M1231.5 553.5h0M1232.5 568.5h0M1232.5 537.5h0M1232.5 542.5h0M1232.5 536.5h0M1233.5 533.5h0M1233.5 534.5h0M1233.5 551.5h0M1233.5 547.5h0M1234.5 484.5h0M1234.5 550.5h0M1234.5 525.5h0M1234.5 556.5h0M1235.5 570.5h0M1235.5 513.5h0M1235.5 528.5h0M1235.5 501.5h0M1236.5 506.5h0M1236.5 524.5h0M1236.5 544.5h0M1236.5 483.5h0M1237.5 525.5h0M1237.5 475.5h0M1237.5 508.5h0M1237.5 501.5h0M1238.5 507.5h0M1238.5 510.5h0M1238.5 524.5h0M1238.5 464.5h0M1239.5 536.5h0M1239.5 548.5h0M1239.5 509.5h0M1239.5 530.5h0M1240.5 493.5h0M1240.5 519.5h0M1240.5 488.5h0M1240.5 513.5h0M1241.5 532.5h0M1241.5 522.5h0M1241.5 499.5h0M1241.5 529.5h0M1242.5 533.5h0M1242.5 520.5h0M1242.5 509.5h0M1242.5 489.5h0M1243.5 508.5h0M1243.5 499.5h0M1243.5 524.5h0M1243.5 477.5h0M1244.5 470.5h0M1244.5 535.5h0M1244.5 517.5h0M1244.5 526.5h0M1245.5 516.5h0M1245.5 531.5h0M1245.5 540.5h0M1245.5 553.5h0M1246.5 538.5h0M1246.5 527.5h0M1246.5 505.5h0M1246.5 516.5h0M1247.5 539.5h0M1247.5 544.5h0M1247.5 562.5h0M1247.5 516.5h0M1248.5 530.5h0M1248.5 518.5h0M1248.5 515.5h0M1248.5 519.5h0M1249.5 534.5h0M1249.5 539.5h0M1249.5 553.5h0M1249.5 546.5h0M1250.5 523.5h0M1250.5 480.5h0M1250.5 541.5h0M1250.5 527.5h0M1251.5 527.5h0M1251.5 530.5h0M1251.5 540.5h0M1251.5 533.5h0M1252.5 538.5h0M1252.5 573.5h0M1252.5 514.5h0M1252.5 570.5h0M1253.5 545.5h0M1253.5 543.5h0M1253.5 524.5h0M1253.5 539.5h0M1254.5 544.5h0M1254.5 552.5h0M1254.5 528.5h0M1254.5 540.5h0M1255.5 547.5h0M1255.5 559.5h0M1255.5 549.5h0M1255.5 527.5h0M1256.5 561.5h0M1256.5 526.5h0M1256.5 526.5h0M1256.5 500.5h0M1257.5 540.5h0M1257.5 545.5h0M1257.5 527.5h0M1257.5 532.5h0M1258.5 576.5h0M1258.5 494.5h0M1258.5 516.5h0M1258.5 517.5h0M1259.5 536.5h0M1259.5 510.5h0M1259.5 524.5h0M1259.5 481.5h0M1260.5 501.5h0M1260.5 484.5h0M1260.5 542.5h0M1260.5 535.5h0M1261.5 526.5h0M1261.5 530.5h0M1261.5 480.5h0M1261.5 509.5h0M1262.5 539.5h0M1262.5 523.5h0M1262.5 475.5h0M1262.5 523.5h0M1263.5 503.5h0M1263.5 552.5h0M1263.5 528.5h0M1263.5 520.5h0M1264.5 522.5h0M1264.5 517.5h0M1264.5 509.5h0M1264.5 491.5h0M1265.5 552.5h0M1265.5 516.5h0M1265.5 501.5h0M1265.5 512.5h0M1266.5 491.5h0M1266.5 520.5h0M1266.5 526.5h0M1266.5 534.5h0M1267.5 496.5h0M1267.5 543.5h0M1267.5 526.5h0M1267.5 518.5h0M1268.5 503.5h0M1268.5 523.5h0M1268.5 536.5h0M1268.5 504.5h0M1269.5 541.5h0M1269.5 532.5h0M1269.5 558.5h0M1269.5 514.5h0M1270.5 515.5h0M1270.5 553.5h0M1270.5 522.5h0M1270.5 505.5h0M1271.5 532.5h0M1271.5 552.5h0M1271.5 520.5h0M1271.5 504.5h0M1272.5 556.5h0M1272.5 499.5h0M1272.5 520.5h0M1272.5 497.5h0M1273.5 539.5h0M1273.5 497.5h0M1273.5 511.5h0M1273.5 500.5h0M1274.5 517.5h0M1274.5 496.5h0M1274.5 522.5h0M1274.5 527.5h0M1275.5 539.5h0M1275.5 550.5h0M1275.5 517.5h0M1275.5 525.5h0M1276.5 520.5h0M1276.5 524.5h0M1276.5 510.5h0M1276.5 517.5h0M1277.5 530.5h0M1277.5 501.5h0M1277.5 470.5h0M1277.5 536.5h0M1278.5 527.5h0M1278.5 506.5h0M1278.5 533.5h0M1278.5 495.5h0M1279.5 532.5h0M1279.5 542.5h0M1279.5 537.5h0M1279.5 494.5h0M1280.5 559.5h0M1280.5 515.5h0M1280.5 561.5h0M1280.5 500.5h0M1281.5 508.5h0M1281.5 502.5h0M1281.5 468.5h0M1281.5 518.5h0M1282.5 490.5h0M1282.5 502.5h0M1282.5 492.5h0M1282.5 531.5h0M1283.5 489.5h0M1283.5 522.5h0M1283.5 481.5h0M1283.5 493.5h0M1284.5 513.5h0M1284.5 500.5h0M1284.5 501.5h0M1284.5 508.5h0M1285.5 497.5h0M1285.5 531.5h0M1285.5 541.5h0M1285.5 540.5h0M1286.5 519.5h0M1286.5 514.5h0M1286.5 497.5h0M1286.5 490.5h0M1286.5 507.5h0M1287.5 509.5h0M1287.5 532.5h0M1287.5 489.5h0M1287.5 480.5h0M1288.5 515.5h0M1288.5 496.5h0M1288.5 526.5h0M1288.5 513.5h0M1289.5 510.5h0M1289.5 492.5h0M1289.5 542.5h0M1289.5 511.5h0M1290.5 491.5h0M1290.5 504.5h0M1290.5 497.5h0M1290.5 564.5h0M1291.5 531.5h0M1291.5 522.5h0M1291.5 529.5h0M1291.5 561.5h0M1292.5 489.5h0M1292.5 509.5h0M1292.5 555.5h0M1292.5 527.5h0M1293.5 517.5h0M1293.5 496.5h0M1293.5 504.5h0M1293.5 542.5h0M1294.5 536.5h0M1294.5 518.5h0M1294.5 502.5h0M1294.5 535.5h0M1295.5 540.5h0M1295.5 515.5h0M1295.5 526.5h0M1295.5 499.5h0M1296.5 520.5h0M1296.5 509.5h0M1296.5 574.5h0M1296.5 563.5h0M1297.5 567.5h0M1297.5 551.5h0M1297.5 529.5h0M1297.5 544.5h0M1298.5 526.5h0M1298.5 554.5h0M1298.5 516.5h0M1298.5 519.5h0M1299.5 574.5h0M1299.5 561.5h0M1299.5 552.5h0M1299.5 520.5h0M1300.5 521.5h0M1300.5 497.5h0M1300.5 570.5h0M1300.5 534.5h0M1301.5 540.5h0M1301.5 545.5h0M1301.5 542.5h0M1301.5 582.5h0M1302.5 533.5h0M1302.5 548.5h0M1302.5 566.5h0M1302.5 507.5h0" stroke="#000" stroke-width="3.75" stroke-linecap="round" fill="none"/>
<rect x="105.5" y="498.8" width="1255.5" height="48.8" fill="#f00" fill-opacity="0.1"/>
<rect x="162.8" y="498.8" width="1140.34" height="48.8" fill="#ffa500" fill-opacity="0.1"/>
<line x1="162.8" y1="523.6" x2="1305" y2="523.6" stroke="#ffa500" stroke-width="2.78"/>
<line x1="105.5" y1="522.8" x2="1361" y2="522.8" stroke="#f00" stroke-width="2.08"/>
<line x1="162.0" y1="666.5" x2="162.0" y2="380.5" stroke="#800080" stroke-width="2.08" stroke-dasharray="2.08 3.44"/>
<line x1="1303.0" y1="666.5" x2="1303.0" y2="380.5" stroke="#800080" stroke-width="2.08" stroke-dasharray="2.08 3.44"/>
</g>
<rect x="105.5" y="380.5" width="1380" height="286" fill="none" stroke="#000" stroke-width="1.1"/>
<line x1="162.5" y1="666.5" x2="162.5" y2="671.4" stroke="#000" stroke-width="1.1"/><text x="163.0" y="686.8" font-size="13.89" text-anchor="middle">0</text>
<line x1="406.5" y1="666.5" x2="406.5" y2="671.4" stroke="#000" stroke-width="1.1"/><text x="405.3" y="686.8" font-size="13.89" text-anchor="middle">1000</text>
<line x1="649.5" y1="666.5" x2="649.5" y2="671.4" stroke="#000" stroke-width="1.1"/><text x="648.8" y="686.8" font-size="13.89" text-anchor="middle">2000</text>
<line x1="892.5" y1="666.5" x2="892.5" y2="671.4" stroke="#000" stroke-width="1.1"/><text x="892.2" y="686.8" font-size="13.89" text-anchor="middle">3000</text>
<line x1="1136.5" y1="666.5" x2="1136.5" y2="671.4" stroke="#000" stroke-width="1.1"/><text x="1135.8" y="686.8" font-size="13.89" text-anchor="middle">4000</text>
<line x1="1379.5" y1="666.5" x2="1379.5" y2="671.4" stroke="#000" stroke-width="1.1"/><text x="1378.5" y="686.8" font-size="13.89" text-anchor="middle">5000</text>
<line x1="100.6" y1="631.5" x2="105.5" y2="631.5" stroke="#000" stroke-width="1.1"/><text x="96.2" y="636.8" font-size="13.89" text-anchor="end">8.78</text>
<line x1="100.6" y1="574.5" x2="105.5" y2="574.5" stroke="#000" stroke-width="1.1"/><text x="96.2" y="579.8" font-size="13.89" text-anchor="end">8.80</text>
<line x1="100.6" y1="517.5" x2="105.5" y2="517.5" stroke="#000" stroke-width="1.1"/><text x="96.2" y="522.8" font-size="13.89" text-anchor="end">8.82</text>
<line x1="100.6" y1="460.5" x2="105.5" y2="460.5" stroke="#000" stroke-width="1.1"/><text x="96.2" y="465.8" font-size="13.89" text-anchor="end">8.84</text>
<line x1="100.6" y1="403.5" x2="105.5" y2="403.5" stroke="#000" stroke-width="1.1"/><text x="96.2" y="408.8" font-size="13.89" text-anchor="end">8.86</text>
<text x="795" y="372" font-size="16.67" text-anchor="middle">Magnitude Estimates</text>
<text x="732" y="657" font-size="13.89" text-anchor="middle">60288</text>
<rect x="1365.3" y="387.3" width="113.3" height="48" rx="2.8" fill="#fff" fill-opacity="0.8" stroke="#ccc" stroke-width="1.1"/>
<line x1="1369.5" y1="399.5" x2="1399.5" y2="399.5" stroke="#ffa500" stroke-width="2.78"/>
<line x1="1369.5" y1="422" x2="1398.5" y2="422" stroke="#f00" stroke-width="2.08"/>
<text x="1410" y="404.2" font-size="13.89">mag<tspan font-size="9.72" font-style="oblique" dy="2.3">OBSID</tspan></text>
<text x="1410" y="426.7" font-size="13.89">mag</text>
<rect x="1348.3" y="613.4" width="130" height="45.8" rx="2.8" fill="#fff" fill-opacity="0.8" stroke="#ccc" stroke-width="1.1"/>
<circle cx="1367.5" cy="625.5" r="1.8" fill="#ffa500"/><text x="1392.5" y="629.5" font-size="13.89">Highlighted</text>
<circle cx="1367.5" cy="646.5" r="1.8" fill="#000"/><text x="1392.5" y="650.5" font-size="13.89">OK</text>
<g clip-path="url(#c3)">
<line x1="105.5" y1="758.5" x2="1485.5" y2="758.5" stroke="#b0b0b0" stroke-width="1.1" stroke-dasharray="1.1 1.83"/>
<line x1="105.5" y1="791.5" x2="1485.5" y2="791.5" stroke="#b0b0b0" stroke-width="1.1" stroke-dasharray="1.1 1.83"/>
<line x1="105.5" y1="823.5" x2="1485.5" y2="823.5" stroke="#b0b0b0" stroke-width="1.1" stroke-dasharray="1.1 1.83"/>
<line x1="105.5" y1="856.5" x2="1485.5" y2="856.5" stroke="#b0b0b0" stroke-width="1.1" stroke-dasharray="1.1 1.83"/>
<line x1="105.5" y1="889.5" x2="1485.5" y2="889.5" stroke="#b0b0b0" stroke-width="1.1" stroke-dasharray="1.1 1.83"/>
<line x1="105.5" y1="921.5" x2="1485.5" y2="921.5" stroke="#b0b0b0" stroke-width="1.1" stroke-dasharray="1.1 1.83"/>
<line x1="105.5" y1="957.5" x2="1485.5" y2="957.5" stroke="#b0b0b0" stroke-width="1.1" stroke-dasharray="1.1 1.83"/>
<line x1="105.5" y1="983.5" x2="1485.5" y2="983.5" stroke="#b0b0b0" stroke-width="1.1" stroke-dasharray="1.1 1.83"/>
<line x1="105.5" y1="1009.5" x2="1485.5" y2="1009.5" stroke="#b0b0b0" stroke-width="1.1" stroke-dasharray="1.1 1.83"/>
<path d="M162.5 1008.5h0M163.5 1008.5h0M163.5 1007.5h0M164.5 1008.5h0M164.5 1008.5h0M165.5 1007.5h0M165.5 1008.5h0M166.5 1008.5h0M166.5 1007.5h0M167.5 1007.5h0M167.5 1007.5h0M168.5 1007.5h0M168.5 1007.5h0M169.5 1008.5h0M169.5 1007.5h0M170.5 1007.5h0M170.5 1008.5h0M171.5 1008.5h0M171.5 1007.5h0M172.5 1007.5h0M172.5 1007.5h0M173.5 1008.5h0M173.5 1008.5h0M174.5 1008.5h0M174.5 1008.5h0M175.5 1008.5h0M175.5 1008.5h0M176.5 1007.5h0M176.5 1008.5h0M177.5 1008.5h0M177.5 1008.5h0M178.5 1008.5h0M178.5 1008.5h0M179.5 1008.5h0M179.5 1008.5h0M180.5 1008.5h0M180.5 1008.5h0M181.5 1008.5h0M181.5 1008.5h0M182.5 1008.5h0M182.5 1008.5h0M183.5 1008.5h0M183.5 1008.5h0M184.5 1008.5h0M184.5 1008.5h0M185.5 1008.5h0M185.5 1007.5h0M186.5 1008.5h0M186.5 1008.5h0M187.5 1008.5h0M187.5 1007.5h0M188.5 1008.5h0M188.5 1008.5h0M189.5 1008.5h0M189.5 1008.5h0M190.5 1008.5h0M190.5 1008.5h0M191.5 1008.5h0M191.5 1008.5h0M192.5 1008.5h0M192.5 1008.5h0M193.5 1008.5h0M193.5 1008.5h0M194.5 1008.5h0M194.5 1008.5h0M195.5 1008.5h0M195.5 1008.5h0M196.5 1008.5h0M196.5 1008.5h0M197.5 1008.5h0M197.5 1008.5h0M198.5 1007.5h0M198.5 1007.5h0M199.5 1007.5h0M199.5 1007.5h0M200.5 1007.5h0M200.5 1008.5h0M201.5 1007.5h0M201.5 1007.5h0M202.5 1007.5h0M202.5 1006.5h0M203.5 1007.5h0M203.5 1007.5h0M204.5 1008.5h0M204.5 1008.5h0M205.5 1008.5h0M205.5 1007.5h0M206.5 1007.5h0M206.5 1008.5h0M207.5 1007.5h0M207.5 1007.5h0M208.5 1008.5h0M208.5 1007.5h0M209.5 1008.5h0M209.5 1008.5h0M210.5 1007.5h0M210.5 1008.5h0M211.5 1008.5h0M211.5 1008.5h0M212.5 1008.5h0M212.5 1008.5h0M213.5 1008.5h0M213.5 1008.5h0M214.5 1008.5h0M214.5 1008.5h0M215.5 1008.5h0M215.5 1008.5h0M216.5 1008.5h0M216.5 1008.5h0M217.5 1008.5h0M217.5 1008.5h0M218.5 1008.5h0M218.5 1008.5h0M219.5 1008.5h0M219.5 1008.5h0M220.5 1008.5h0M220.5 1008.5h0M221.5 1007.5h0M221.5 1008.5h0M222.5 1008.5h0M222.5 1008.5h0M223.5 1008.5h0M223.5 1008.5h0M224.5 1008.5h0M224.5 1008.5h0M225.5 1008.5h0M225.5 1008.5h0M226.5 1008.5h0M226.5 1008.5h0M227.5 1008.5h0M227.5 1007.5h0M228.5 1007.5h0M228.5 1008.5h0M229.5 1008.5h0M229.5 1007.5h0M230.5 1008.5h0M230.5 1008.5h0M231.5 1008.5h0M231.5 1008.5h0M232.5 1007.5h0M232.5 1008.5h0M233.5 1008.5h0M233.5 1007.5h0M234.5 1007.5h0M234.5 1007.5h0M235.5 1007.5h0M235.5 1008.5h0M236.5 1008.5h0M236.5 1007.5h0M237.5 1007.5h0M237.5 1007.5h0M238.5 1008.5h0M238.5 1008.5h0M239.5 1008.5h0M239.5 1008.5h0M240.5 1008.5h0M240.5 1008.5h0M241.5 1008.5h0M241.5 1008.5h0M242.5 1008.5h0M242.5 1008.5h0M243.5 1008.5h0M243.5 1008.5h0M244.5 1008.5h0M244.5 1008.5h0M245.5 1008.5h0M245.5 1007.5h0M246.5 1007.5h0M246.5 1008.5h0M247.5 1008.5h0M247.5 1007.5h0M248.5 1008.5h0M248.5 1008.5h0M249.5 1008.5h0M249.5 1008.5h0M250.5 1008.5h0M250.5 1007.5h0M251.5 1007.5h0M251.5 1007.5h0M252.5 1007.5h0M252.5 1007.5h0M253.5 1007.5h0M253.5 1008.5h0M254.5 1008.5h0M254.5 1008.5h0M255.5 1008.5h0M255.5 1008.5h0M256.5 1008.5h0M256.5 1007.5h0M257.5 1008.5h0M257.5 1008.5h0M258.5 1008.5h0M258.5 1008.5h0M259.5 1008.5h0M259.5 1008.5h0M260.5 1008.5h0M260.5 1007.5h0M261.5 1007.5h0M261.5 1008.5h0M262.5 1008.5h0M262.5 1008.5h0M263.5 1007.5h0M263.5 1007.5h0M264.5 1008.5h0M264.5 1008.5h0M265.5 1007.5h0M265.5 1007.5h0M266.5 1007.5h0M266.5 1007.5h0M267.5 1007.5h0M267.5 1007.5h0M268.5 1007.5h0M268.5 1007.5h0M269.5 1007.5h0M269.5 1008.5h0M270.5 1008.5h0M270.5 1008.5h0M271.5 1008.5h0M271.5 1008.5h0M272.5 1008.5h0M272.5 1008.5h0M273.5 1007.5h0M273.5 1007.5h0M274.5 1008.5h0M274.5 1008.5h0M275.5 1008.5h0M275.5 1008.5h0M276.5 1008.5h0M276.5 1008.5h0M277.5 1008.5h0M277.5 1007.5h0M278.5 1007.5h0M278.5 1007.5h0M279.5 1007.5h0M279.5 1007.5h0M280.5 1006.5h0M280.5 1007.5h0M281.5 1007.5h0M281.5 1007.5h0M282.5 1007.5h0M282.5 1006.5h0M283.5 1007.5h0M283.5 1006.5h0M284.5 1007.5h0M284.5 1006.5h0M285.5 1006.5h0M285.5 1007.5h0M286.5 1007.5h0M286.5 1007.5h0M287.5 1006.5h0M287.5 1006.5h0M288.5 1007.5h0M288.5 1006.5h0M289.5 1007.5h0M289.5 1006.5h0M290.5 1006.5h0M290.5 1007.5h0M291.5 1007.5h0M291.5 1007.5h0M292.5 1007.5h0M292.5 1007.5h0M293.5 1007.5h0M293.5 1007.5h0M294.5 1006.5h0M294.5 1007.5h0M294.5 1007.5h0M295.5 1008.5h0M295.5 1007.5h0M296.5 1007.5h0M296.5 1008.5h0M297.5 1007.5h0M297.5 1007.5h0M298.5 1008.5h0M298.5 1007.5h0M299.5 1008.5h0M299.5 1008.5h0M300.5 1007.5h0M300.5 1008.5h0M301.5 1008.5h0M301.5 1008.5h0M302.5 1008.5h0M302.5 1008.5h0M303.5 1008.5h0M303.5 1008.5h0M304.5 1008.5h0M304.5 1008.5h0M305.5 1007.5h0M305.5 1008.5h0M306.5 1008.5h0M306.5 1008.5h0M307.5 1008.5h0M307.5 1008.5h0M308.5 1008.5h0M308.5 1007.5h0M309.5 1008.5h0M309.5 1007.5h0M310.5 1007.5h0M310.5 1007.5h0M311.5 1007.5h0M311.5 1007.5h0M312.5 1006.5h0M312.5 1007.5h0M313.5 1007.5h0M313.5 1006.5h0M314.5 1006.5h0M314.5 1006.5h0M315.5 1007.5h0M315.5 1007.5h0M316.5 1006.5h0M316.5 1007.5h0M317.5 1006.5h0M317.5 1006.5h0M318.5 1007.5h0M318.5 1007.5h0M319.5 1006.5h0M319.5 1007.5h0M320.5 1007.5h0M320.5 1007.5h0M321.5 1007.5h0M321.5 1007.5h0M322.5 1007.5h0M322.5 1007.5h0M323.5 1007.5h0M323.5 1008.5h0M324.5 1007.5h0M324.5 1008.5h0M325.5 1007.5h0M325.5 1008.5h0M326.5 1007.5h0M326.5 1008.5h0M327.5 1008.5h0M327.5 1007.5h0M328.5 1008.5h0M328.5 1008.5h0M329.5 1008.5h0M329.5 1008.5h0M330.5 1008.5h0M330.5 1008.5h0M331.5 1008.5h0M331.5 1008.5h0M332.5 1008.5h0M332.5 1008.5h0M333.5 1008.5h0M333.5 1008.5h0M334.5 1008.5h0M334.5 1008.5h0M335.5 1008.5h0M335.5 1008.5h0M336.5 1008.5h0M336.5 1008.5h0M337.5 1008.5h0M337.5 1008.5h0M338.5 1008.5h0M338.5 1008.5h0M339.5 1008.5h0M339.5 1007.5h0M340.5 1008.5h0M340.5 1008.5h0M341.5 1008.5h0M341.5 1008.5h0M342.5 1008.5h0M342.5 1008.5h0M343.5 1008.5h0M343.5 1008.5h0M344.5 1008.5h0M344.5 1007.5h0M345.5 1008.5h0M345.5 1007.5h0M346.5 1007.5h0M346.5 1007.5h0M347.5 1007.5h0M347.5 1007.5h0M348.5 1007.5h0M348.5 1007.5h0M349.5 1007.5h0M349.5 1007.5h0M350.5 1008.5h0M350.5 1007.5h0M351.5 1008.5h0M351.5 1008.5h0M352.5 1007.5h0M352.5 1007.5h0M353.5 1007.5h0M353.5 1007.5h0M354.5 1007.5h0M354.5 1007.5h0M355.5 1008.5h0M355.5 1008.5h0M356.5 1008.5h0M356.5 1008.5h0M357.5 1008.5h0M357.5 1008.5h0M358.5 1008.5h0M358.5 1008.5h0M359.5 1008.5h0M359.5 1008.5h0M360.5 1008.5h0M360.5 1008.5h0M361.5 1008.5h0M361.5 1008.5h0M362.5 1008.5h0M362.5 1008.5h0M363.5 1008.5h0M363.5 1008.5h0M364.5 1008.5h0M364.5 1008.5h0M365.5 1008.5h0M365.5 1008.5h0M366.5 1008.5h0M366.5 1008.5h0M367.5 1007.5h0M367.5 1008.5h0M368.5 1008.5h0M368.5 1007.5h0M369.5 1007.5h0M369.5 1007.5h0M370.5 1008.5h0M370.5 1007.5h0M371.5 1007.5h0M371.5 1007.5h0M372.5 1007.5h0M372.5 1007.5h0M373.5 1007.5h0M373.5 1007.5h0M374.5 1007.5h0M374.5 1007.5h0M375.5 1008.5h0M375.5 1008.5h0M376.5 1008.5h0M376.5 1008.5h0M377.5 1008.5h0M377.5 1008.5h0M378.5 1008.5h0M378.5 1008.5h0M379.5 1008.5h0M379.5 1008.5h0M380.5 1008.5h0M380.5 1008.5h0M381.5 1008.5h0M381.5 1008.5h0M382.5 1008.5h0M382.5 1008.5h0M383.5 1008.5h0M383.5 1008.5h0M384.5 1008.5h0M384.5 1008.5h0M385.5 1008.5h0M385.5 1008.5h0M386.5 1008.5h0M386.5 1008.5h0M387.5 1008.5h0M387.5 1008.5h0M388.5 1008.5h0M388.5 1008.5h0M389.5 1008.5h0M389.5 1008.5h0M390.5 1008.5h0M390.5 1008.5h0M391.5 1008.5h0M391.5 1008.5h0M392.5 1008.5h0M392.5 1008.5h0M393.5 1008.5h0M393.5 1008.5h0M394.5 1008.5h0M394.5 1008.5h0M395.5 1008.5h0M395.5 1007.5h0M396.5 1008.5h0M396.5 1008.5h0M397.5 1008.5h0M397.5 1008.5h0M398.5 1008.5h0M398.5 1008.5h0M399.5 1008.5h0M399.5 1008.5h0M400.5 1008.5h0M400.5 1008.5h0M401.5 1007.5h0M401.5 1008.5h0M402.5 1008.5h0M402.5 1008.5h0M403.5 1007.5h0M403.5 1007.5h0M404.5 1007.5h0M404.5 1007.5h0M405.5 1007.5h0M405.5 1006.5h0M406.5 1007.5h0M406.5 1007.5h0M407.5 1007.5h0M407.5 1007.5h0M408.5 1007.5h0M408.5 1008.5h0M409.5 1008.5h0M409.5 1007.5h0M410.5 1008.5h0M410.5 1008.5h0M411.5 1007.5h0M411.5 1007.5h0M412.5 1008.5h0M412.5 1008.5h0M413.5 1008.5h0M413.5 1008.5h0M414.5 1008.5h0M414.5 1007.5h0M415.5 1008.5h0M415.5 1008.5h0M416.5 1008.5h0M416.5 1008.5h0M417.5 1008.5h0M417.5 1007.5h0M418.5 1008.5h0M418.5 1008.5h0M419.5 1008.5h0M419.5 1008.5h0M420.5 1007.5h0M420.5 1008.5h0M421.5 1007.5h0M421.5 1007.5h0M422.5 1007.5h0M422.5 1006.5h0M423.5 1006.5h0M423.5 1006.5h0M424.5 1006.5h0M424.5 1007.5h0M425.5 1007.5h0M425.5 1006.5h0M426.5 1006.5h0M426.5 1007.5h0M427.5 1006.5h0M427.5 1006.5h0M428.5 1006.5h0M428.5 1006.5h0M429.5 1006.5h0M429.5 1006.5h0M430.5 1006.5h0M430.5 1006.5h0M431.5 1006.5h0M431.5 1006.5h0M432.5 1006.5h0M432.5 1006.5h0M433.5 1006.5h0M433.5 1007.5h0M434.5 1008.5h0M434.5 1006.5h0M435.5 1006.5h0M435.5 1006.5h0M436.5 1006.5h0M436.5 1006.5h0M437.5 1006.5h0M437.5 1007.5h0M438.5 1007.5h0M438.5 1007.5h0M439.5 1008.5h0M439.5 1007.5h0M440.5 1007.5h0M440.5 1007.5h0M441.5 1007.5h0M441.5 1007.5h0M442.5 1007.5h0M442.5 1007.5h0M443.5 1007.5h0M443.5 1007.5h0M444.5 1007.5h0M444.5 1007.5h0M445.5 1008.5h0M445.5 1007.5h0M446.5 1007.5h0M446.5 1007.5h0M447.5 1007.5h0M447.5 1007.5h0M448.5 1007.5h0M448.5 1007.5h0M449.5 1007.5h0M449.5 1007.5h0M450.5 1007.5h0M450.5 1007.5h0M451.5 1007.5h0M451.5 1007.5h0M452.5 1007.5h0M452.5 1007.5h0M453.5 1007.5h0M453.5 1007.5h0M454.5 1007.5h0M454.5 1007.5h0M455.5 1007.5h0M455.5 1008.5h0M456.5 1008.5h0M456.5 1008.5h0M457.5 1008.5h0M457.5 1008.5h0M458.5 1008.5h0M458.5 1008.5h0M459.5 1008.5h0M459.5 1008.5h0M460.5 1008.5h0M460.5 1008.5h0M461.5 1008.5h0M461.5 1008.5h0M462.5 1007.5h0M462.5 1008.5h0M463.5 1008.5h0M463.5 1008.5h0M464.5 1008.5h0M464.5 1008.5h0M465.5 1008.5h0M465.5 1008.5h0M466.5 1008.5h0M466.5 1008.5h0M467.5 1007.5h0M467.5 1008.5h0M468.5 1008.5h0M468.5 1008.5h0M469.5 1008.5h0M469.5 1008.5h0M470.5 1007.5h0M470.5 1008.5h0M471.5 1008.5h0M471.5 1007.5h0M472.5 1008.5h0M472.5 1008.5h0M473.5 1008.5h0M473.5 1007.5h0M474.5 1008.5h0M474.5 1008.5h0M475.5 1007.5h0M475.5 1007.5h0M476.5 1008.5h0M476.5 1008.5h0M477.5 1008.5h0M477.5 1008.5h0M478.5 1008.5h0M478.5 1008.5h0M479.5 1008.5h0M479.5 1008.5h0M480.5 1008.5h0M480.5 1008.5h0M481.5 1008.5h0M481.5 1008.5h0M482.5 1008.5h0M482.5 1008.5h0M483.5 1008.5h0M483.5 1008.5h0M484.5 1008.5h0M484.5 1007.5h0M485.5 1007.5h0M485.5 1006.5h0M486.5 1007.5h0M486.5 1007.5h0M487.5 1007.5h0M487.5 1007.5h0M488.5 1006.5h0M488.5 1006.5h0M489.5 1006.5h0M489.5 1007.5h0M490.5 1006.5h0M490.5 1006.5h0M491.5 1006.5h0M491.5 1007.5h0M492.5 1007.5h0M492.5 1006.5h0M493.5 1007.5h0M493.5 1006.5h0M494.5 1007.5h0M494.5 1007.5h0M495.5 1007.5h0M495.5 1007.5h0M496.5 1008.5h0M496.5 1007.5h0M497.5 1007.5h0M497.5 1007.5h0M498.5 1008.5h0M498.5 1007.5h0M499.5 1008.5h0M499.5 1008.5h0M500.5 1007.5h0M500.5 1007.5h0M501.5 1007.5h0M501.5 1008.5h0M502.5 1007.5h0M502.5 1007.5h0M503.5 1007.5h0M503.5 1008.5h0M504.5 1007.5h0M504.5 1007.5h0M505.5 1008.5h0M505.5 1007.5h0M506.5 1007.5h0M506.5 1007.5h0M507.5 1008.5h0M507.5 1007.5h0M508.5 1007.5h0M508.5 1008.5h0M509.5 1008.5h0M509.5 1008.5h0M510.5 1008.5h0M510.5 1008.5h0M511.5 1008.5h0M511.5 1008.5h0M512.5 1008.5h0M512.5 1008.5h0M513.5 1008.5h0M513.5 1008.5h0M514.5 1008.5h0M514.5 1008.5h0M515.5 1008.5h0M515.5 1008.5h0M515.5 1008.5h0M516.5 1008.5h0M516.5 1008.5h0M517.5 1008.5h0M517.5 1008.5h0M518.5 1008.5h0M518.5 1008.5h0M519.5 1008.5h0M519.5 1008.5h0M520.5 1008.5h0M520.5 1008.5h0M521.5 1008.5h0M521.5 1007.5h0M522.5 1008.5h0M522.5 1008.5h0M523.5 1008.5h0M523.5 1007.5h0M524.5 1007.5h0M524.5 1007.5h0M525.5 1008.5h0M525.5 1008.5h0M526.5 1008.5h0M526.5 1008.5h0M527.5 1008.5h0M527.5 1008.5h0M528.5 1008.5h0M528.5 1008.5h0M529.5 1008.5h0M529.5 1008.5h0M530.5 1007.5h0M530.5 1007.5h0M531.5 1007.5h0M531.5 1008.5h0M532.5 1007.5h0M532.5 1007.5h0M533.5 1007.5h0M533.5 1007.5h0M534.5 1008.5h0M534.5 1007.5h0M535.5 1006.5h0M535.5 1006.5h0M536.5 1006.5h0M536.5 1006.5h0M537.5 1006.5h0M537.5 1006.5h0M538.5 1006.5h0M538.5 1006.5h0M539.5 1007.5h0M539.5 1007.5h0M540.5 1007.5h0M540.5 1007.5h0M541.5 1006.5h0M541.5 1007.5h0M542.5 1006.5h0M542.5 1006.5h0M543.5 1007.5h0M543.5 1008.5h0M544.5 1007.5h0M544.5 1007.5h0M545.5 1008.5h0M545.5 1007.5h0M546.5 1007.5h0M546.5 1008.5h0M547.5 1007.5h0M547.5 1007.5h0M548.5 1008.5h0M548.5 1008.5h0M549.5 1008.5h0M549.5 1008.5h0M550.5 1007.5h0M550.5 1007.5h0M551.5 1007.5h0M551.5 1008.5h0M552.5 1008.5h0M552.5 1008.5h0M553.5 1008.5h0M553.5 1008.5h0M554.5 1008.5h0M554.5 1008.5h0M555.5 1008.5h0M555.5 1008.5h0M556.5 1008.5h0M556.5 1008.5h0M557.5 1008.5h0M557.5 1008.5h0M558.5 1008.5h0M558.5 1008.5h0M559.5 1008.5h0M559.5 1008.5h0M560.5 1008.5h0M560.5 1008.5h0M561.5 1007.5h0M561.5 1008.5h0M562.5 1008.5h0M562.5 1008.5h0M563.5 1008.5h0M563.5 1008.5h0M564.5 1007.5h0M564.5 1008.5h0M565.5 1007.5h0M565.5 1007.5h0M566.5 1007.5h0M566.5 1008.5h0M567.5 1007.5h0M567.5 1008.5h0M568.5 1008.5h0M568.5 1007.5h0M569.5 1007.5h0M569.5 1008.5h0M570.5 1008.5h0M570.5 1007.5h0M571.5 1007.5h0M571.5 1008.5h0M572.5 1007.5h0M572.5 1007.5h0M573.5 1007.5h0M573.5 1007.5h0M574.5 1007.5h0M574.5 1007.5h0M575.5 1007.5h0M575.5 1007.5h0M576.5 1008.5h0M576.5 1007.5h0M577.5 1007.5h0M577.5 1007.5h0M578.5 1007.5h0M578.5 1007.5h0M579.5 1008.5h0M579.5 1007.5h0M580.5 1006.5h0M580.5 1008.5h0M581.5 1008.5h0M581.5 1008.5h0M582.5 1008.5h0M582.5 1008.5h0M583.5 1008.5h0M583.5 1008.5h0M584.5 1008.5h0M584.5 1008.5h0M585.5 1008.5h0M585.5 1008.5h0M586.5 1008.5h0M586.5 1008.5h0M587.5 1008.5h0M587.5 1008.5h0M588.5 1008.5h0M588.5 1008.5h0M589.5 1008.5h0M589.5 1008.5h0M590.5 1008.5h0M590.5 1008.5h0M591.5 1007.5h0M591.5 1008.5h0M592.5 1007.5h0M592.5 1007.5h0M593.5 1007.5h0M593.5 1008.5h0M594.5 1008.5h0M594.5 1007.5h0M595.5 1007.5h0M595.5 1007.5h0M596.5 1008.5h0M596.5 1007.5h0M597.5 1007.5h0M597.5 1008.5h0M598.5 1007.5h0M598.5 1007.5h0M599.5 1007.5h0M599.5 1008.5h0M600.5 1007.5h0M600.5 1008.5h0M601.5 1007.5h0M601.5 1008.5h0M602.5 1008.5h0M602.5 1008.5h0M603.5 1008.5h0M603.5 1008.5h0M604.5 1008.5h0M604.5 1008.5h0M605.5 1008.5h0M605.5 1008.5h0M606.5 1008.5h0M606.5 1008.5h0M607.5 1008.5h0M607.5 1007.5h0M608.5 1008.5h0M608.5 1007.5h0M609.5 1008.5h0M609.5 1008.5h0M610.5 1008.5h0M610.5 1007.5h0M611.5 1008.5h0M611.5 1008.5h0M612.5 1008.5h0M612.5 1007.5h0M613.5 1007.5h0M613.5 1008.5h0M614.5 1007.5h0M614.5 1007.5h0M615.5 1007.5h0M615.5 1007.5h0M616.5 1008.5h0M616.5 1008.5h0M617.5 1008.5h0M617.5 1008.5h0M618.5 1008.5h0M618.5 1008.5h0M619.5 1008.5h0M619.5 1008.5h0M620.5 1008.5h0M620.5 1008.5h0M621.5 1008.5h0M621.5 1008.5h0M622.5 1008.5h0M622.5 1008.5h0M623.5 1008.5h0M623.5 1008.5h0M624.5 1008.5h0M624.5 1008.5h0M625.5 1008.5h0M625.5 1008.5h0M626.5 1008.5h0M626.5 1008.5h0M627.5 1008.5h0M627.5 1008.5h0M628.5 1008.5h0M628.5 1008.5h0M629.5 1008.5h0M629.5 1008.5h0M630.5 1008.5h0M630.5 1008.5h0M631.5 1008.5h0M631.5 1008.5h0M632.5 1008.5h0M632.5 1008.5h0M633.5 1008.5h0M633.5 1008.5h0M634.5 1008.5h0M634.5 1008.5h0M635.5 1008.5h0M635.5 1008.5h0M636.5 1008.5h0M636.5 1008.5h0M637.5 1008.5h0M637.5 1008.5h0M638.5 1008.5h0M638.5 1008.5h0M639.5 1008.5h0M639.5 1008.5h0M640.5 1007.5h0M640.5 1008.5h0M641.5 1008.5h0M641.5 1008.5h0M642.5 1008.5h0M642.5 1008.5h0M643.5 1008.5h0M643.5 1008.5h0M644.5 1007.5h0M644.5 1007.5h0M645.5 1007.5h0M645.5 1007.5h0M646.5 1007.5h0M646.5 1007.5h0M647.5 1007.5h0M647.5 1007.5h0M648.5 1007.5h0M648.5 1007.5h0M649.5 1007.5h0M649.5 1008.5h0M650.5 1007.5h0M650.5 1008.5h0M651.5 1007.5h0M651.5 1007.5h0M652.5 1008.5h0M652.5 1008.5h0M653.5 1008.5h0M653.5 1008.5h0M654.5 1007.5h0M654.5 1008.5h0M655.5 1008.5h0M655.5 1008.5h0M656.5 1008.5h0M656.5 1008.5h0M657.5 1008.5h0M657.5 1008.5h0M658.5 1008.5h0M658.5 1008.5h0M659.5 1008.5h0M659.5 1007.5h0M660.5 1007.5h0M660.5 1007.5h0M661.5 1007.5h0M661.5 1007.5h0M662.5 1007.5h0M662.5 1006.5h0M663.5 1007.5h0M663.5 1006.5h0M664.5 1006.5h0M664.5 1007.5h0M665.5 1007.5h0M665.5 1007.5h0M666.5 1008.5h0M666.5 1008.5h0M667.5 1008.5h0M667.5 1008.5h0M668.5 1008.5h0M668.5 1007.5h0M669.5 1008.5h0M669.5 1008.5h0M670.5 1008.5h0M670.5 1008.5h0M671.5 1008.5h0M671.5 1008.5h0M672.5 1008.5h0M672.5 1008.5h0M673.5 1007.5h0M673.5 1007.5h0M674.5 1008.5h0M674.5 1008.5h0M675.5 1008.5h0M675.5 1007.5h0M676.5 1008.5h0M676.5 1008.5h0M677.5 1008.5h0M677.5 1008.5h0M678.5 1007.5h0M678.5 1007.5h0M679.5 1007.5h0M679.5 1007.5h0M680.5 1007.5h0M680.5 1007.5h0M681.5 1008.5h0M681.5 1007.5h0M682.5 1007.5h0M682.5 1008.5h0M683.5 1008.5h0M683.5 1008.5h0M684.5 1008.5h0M684.5 1008.5h0M685.5 1008.5h0M685.5 1007.5h0M686.5 1007.5h0M686.5 1008.5h0M687.5 1008.5h0M687.5 1008.5h0M688.5 1007.5h0M688.5 1008.5h0M689.5 1008.5h0M689.5 1008.5h0M690.5 1008.5h0M690.5 1007.5h0M691.5 1008.5h0M691.5 1008.5h0M692.5 1008.5h0M692.5 1007.5h0M693.5 1007.5h0M693.5 1006.5h0M694.5 1007.5h0M694.5 1007.5h0M695.5 1006.5h0M695.5 1007.5h0M696.5 1007.5h0M696.5 1007.5h0M697.5 1007.5h0M697.5 1007.5h0M698.5 1008.5h0M698.5 1007.5h0M699.5 1008.5h0M699.5 1008.5h0M700.5 1007.5h0M700.5 1007.5h0M701.5 1008.5h0M701.5 1007.5h0M702.5 1008.5h0M702.5 1007.5h0M703.5 1008.5h0M703.5 1007.5h0M704.5 1007.5h0M704.5 1008.5h0M705.5 1007.5h0M705.5 1007.5h0M706.5 1007.5h0M706.5 1007.5h0M707.5 1007.5h0M707.5 1006.5h0M708.5 1007.5h0M708.5 1006.5h0M709.5 1007.5h0M709.5 1006.5h0M710.5 1006.5h0M710.5 1007.5h0M711.5 1006.5h0M711.5 1006.5h0M712.5 1006.5h0M712.5 1006.5h0M713.5 1006.5h0M713.5 1006.5h0M714.5 1006.5h0M714.5 1006.5h0M715.5 1006.5h0M715.5 1007.5h0M716.5 1006.5h0M716.5 1006.5h0M717.5 1007.5h0M717.5 1007.5h0M718.5 1007.5h0M718.5 1006.5h0M719.5 1006.5h0M719.5 1006.5h0M720.5 1006.5h0M720.5 1006.5h0M721.5 1006.5h0M721.5 1007.5h0M722.5 1008.5h0M722.5 1007.5h0M723.5 1007.5h0M723.5 1007.5h0M724.5 1006.5h0M724.5 1007.5h0M725.5 1007.5h0M725.5 1007.5h0M726.5 1007.5h0M726.5 1007.5h0M727.5 1007.5h0M727.5 1008.5h0M728.5 1008.5h0M728.5 1007.5h0M729.5 1007.5h0M729.5 1007.5h0M730.5 1006.5h0M730.5 1008.5h0M731.5 1008.5h0M731.5 1008.5h0M732.5 1008.5h0M732.5 1007.5h0M733.5 1008.5h0M733.5 1008.5h0M734.5 1007.5h0M734.5 1008.5h0M735.5 1008.5h0M735.5 1008.5h0M735.5 1008.5h0M736.5 1008.5h0M736.5 1008.5h0M737.5 1008.5h0M737.5 1008.5h0M738.5 1008.5h0M738.5 1008.5h0M739.5 1008.5h0M739.5 1008.5h0M740.5 1008.5h0M740.5 1008.5h0M741.5 1008.5h0M741.5 1008.5h0M742.5 1008.5h0M742.5 1008.5h0M743.5 1007.5h0M743.5 1007.5h0M744.5 1007.5h0M744.5 1007.5h0M745.5 1007.5h0M745.5 1007.5h0M746.5 1008.5h0M746.5 1008.5h0M747.5 1008.5h0M747.5 1007.5h0M748.5 1007.5h0M748.5 1007.5h0M749.5 1008.5h0M749.5 1007.5h0M750.5 1007.5h0M750.5 1007.5h0M751.5 1007.5h0M751.5 1007.5h0M752.5 1007.5h0M752.5 1007.5h0M753.5 1007.5h0M753.5 1008.5h0M754.5 1008.5h0M754.5 1008.5h0M755.5 1007.5h0M755.5 1008.5h0M756.5 1007.5h0M756.5 1007.5h0M757.5 1006.5h0M757.5 1007.5h0M758.5 1007.5h0M758.5 1007.5h0M759.5 1007.5h0M759.5 1006.5h0M760.5 1007.5h0M760.5 1006.5h0M761.5 1007.5h0M761.5 1006.5h0M762.5 1006.5h0M762.5 1007.5h0M763.5 1006.5h0M763.5 1006.5h0M764.5 1006.5h0M764.5 1006.5h0M765.5 1006.5h0M765.5 1007.5h0M766.5 1007.5h0M766.5 1006.5h0M767.5 1007.5h0M767.5 1007.5h0M768.5 1007.5h0M768.5 1007.5h0M769.5 1007.5h0M769.5 1008.5h0M770.5 1007.5h0M770.5 1007.5h0M771.5 1007.5h0M771.5 1007.5h0M772.5 1008.5h0M772.5 1008.5h0M773.5 1007.5h0M773.5 1008.5h0M774.5 1008.5h0M774.5 1008.5h0M775.5 1008.5h0M775.5 1008.5h0M776.5 1007.5h0M776.5 1007.5h0M777.5 1007.5h0M777.5 1007.5h0M778.5 1007.5h0M778.5 1008.5h0M779.5 1008.5h0M779.5 1007.5h0M780.5 1008.5h0M780.5 1007.5h0M781.5 1007.5h0M781.5 1008.5h0M782.5 1007.5h0M782.5 1007.5h0M783.5 1007.5h0M783.5 1008.5h0M784.5 1007.5h0M784.5 1007.5h0M785.5 1007.5h0M785.5 1008.5h0M786.5 1008.5h0M786.5 1008.5h0M787.5 1008.5h0M787.5 1008.5h0M788.5 1008.5h0M788.5 1008.5h0M789.5 1008.5h0M789.5 1008.5h0M790.5 1008.5h0M790.5 1008.5h0M791.5 1008.5h0M791.5 1008.5h0M792.5 1008.5h0M792.5 1007.5h0M793.5 1007.5h0M793.5 1008.5h0M794.5 1007.5h0M794.5 1008.5h0M795.5 1008.5h0M795.5 1008.5h0M796.5 1007.5h0M796.5 1008.5h0M797.5 1008.5h0M797.5 1008.5h0M798.5 1008.5h0M798.5 1008.5h0M799.5 1007.5h0M799.5 1008.5h0M800.5 1008.5h0M800.5 1008.5h0M801.5 1008.5h0M801.5 1008.5h0M802.5 1008.5h0M802.5 1008.5h0M803.5 1008.5h0M803.5 1007.5h0M804.5 1008.5h0M804.5 1008.5h0M805.5 1008.5h0M805.5 1008.5h0M806.5 1008.5h0M806.5 1008.5h0M807.5 1008.5h0M807.5 1008.5h0M808.5 1007.5h0M808.5 1007.5h0M809.5 1008.5h0M809.5 1008.5h0M810.5 1007.5h0M810.5 1008.5h0M811.5 1008.5h0M811.5 1008.5h0M812.5 1008.5h0M812.5 1007.5h0M813.5 1008.5h0M813.5 1008.5h0M814.5 1008.5h0M814.5 1007.5h0M815.5 1007.5h0M815.5 1007.5h0M816.5 1008.5h0M816.5 1008.5h0M817.5 1008.5h0M817.5 1008.5h0M818.5 1007.5h0M818.5 1008.5h0M819.5 1008.5h0M819.5 1008.5h0M820.5 1008.5h0M820.5 1008.5h0M821.5 1008.5h0M821.5 1007.5h0M822.5 1008.5h0M822.5 1008.5h0M823.5 1008.5h0M823.5 1008.5h0M824.5 1008.5h0M824.5 1008.5h0M825.5 1008.5h0M825.5 1007.5h0M826.5 1007.5h0M826.5 1007.5h0M827.5 1008.5h0M827.5 1008.5h0M828.5 1007.5h0M828.5 1007.5h0M829.5 1007.5h0M829.5 1006.5h0M830.5 1007.5h0M830.5 1007.5h0M831.5 1006.5h0M831.5 1006.5h0M832.5 1006.5h0M832.5 1006.5h0M833.5 1006.5h0M833.5 1006.5h0M834.5 1006.5h0M834.5 1006.5h0M835.5 1007.5h0M835.5 1006.5h0M836.5 1007.5h0M836.5 1006.5h0M837.5 1006.5h0M837.5 1006.5h0M838.5 1006.5h0M838.5 1006.5h0M839.5 1006.5h0M839.5 1007.5h0M840.5 1008.5h0M840.5 1007.5h0M841.5 1006.5h0M841.5 1007.5h0M842.5 1007.5h0M842.5 1008.5h0M843.5 1008.5h0M843.5 1008.5h0M844.5 1008.5h0M844.5 1008.5h0M845.5 1008.5h0M845.5 1008.5h0M846.5 1008.5h0M846.5 1008.5h0M847.5 1008.5h0M847.5 1008.5h0M848.5 1008.5h0M848.5 1008.5h0M849.5 1008.5h0M849.5 1008.5h0M850.5 1008.5h0M850.5 1008.5h0M851.5 1008.5h0M851.5 1008.5h0M852.5 1008.5h0M852.5 1008.5h0M853.5 1008.5h0M853.5 1008.5h0M854.5 1008.5h0M854.5 1008.5h0M855.5 1008.5h0M855.5 1008.5h0M856.5 1008.5h0M856.5 1008.5h0M857.5 1008.5h0M857.5 1008.5h0M858.5 1008.5h0M858.5 1008.5h0M859.5 1008.5h0M859.5 1008.5h0M860.5 1008.5h0M860.5 1008.5h0M861.5 1008.5h0M861.5 1008.5h0M862.5 1008.5h0M862.5 1008.5h0M863.5 1007.5h0M863.5 1008.5h0M864.5 1008.5h0M864.5 1008.5h0M865.5 1008.5h0M865.5 1008.5h0M866.5 1008.5h0M866.5 1008.5h0M867.5 1008.5h0M867.5 1008.5h0M868.5 1008.5h0M868.5 1007.5h0M869.5 1007.5h0M869.5 1007.5h0M870.5 1008.5h0M870.5 1008.5h0M871.5 1007.5h0M871.5 1007.5h0M872.5 1007.5h0M872.5 1007.5h0M873.5 1007.5h0M873.5 1007.5h0M874.5 1007.5h0M874.5 1007.5h0M875.5 1008.5h0M875.5 1007.5h0M876.5 1007.5h0M876.5 1007.5h0M877.5 1007.5h0M877.5 1007.5h0M878.5 1007.5h0M878.5 1007.5h0M879.5 1007.5h0M879.5 1008.5h0M880.5 1007.5h0M880.5 1008.5h0M881.5 1008.5h0M881.5 1008.5h0M882.5 1007.5h0M882.5 1008.5h0M883.5 1007.5h0M883.5 1008.5h0M884.5 1008.5h0M884.5 1008.5h0M885.5 1008.5h0M885.5 1008.5h0M886.5 1008.5h0M886.5 1008.5h0M887.5 1008.5h0M887.5 1008.5h0M888.5 1008.5h0M888.5 1008.5h0M889.5 1008.5h0M889.5 1008.5h0M890.5 1008.5h0M890.5 1008.5h0M891.5 1008.5h0M891.5 1007.5h0M892.5 1008.5h0M892.5 1007.5h0M893.5 1007.5h0M893.5 1007.5h0M894.5 1007.5h0M894.5 1008.5h0M895.5 1006.5h0M895.5 1007.5h0M896.5 1007.5h0M896.5 1007.5h0M897.5 1007.5h0M897.5 1007.5h0M898.5 1007.5h0M898.5 1008.5h0M899.5 1007.5h0M899.5 1008.5h0M900.5 1007.5h0M900.5 1007.5h0M901.5 1008.5h0M901.5 1008.5h0M902.5 1008.5h0M902.5 1008.5h0M903.5 1008.5h0M903.5 1008.5h0M904.5 1008.5h0M904.5 1007.5h0M905.5 1008.5h0M905.5 1008.5h0M906.5 1007.5h0M906.5 1008.5h0M907.5 1007.5h0M907.5 1007.5h0M908.5 1008.5h0M908.5 1008.5h0M909.5 1008.5h0M909.5 1008.5h0M910.5 1008.5h0M910.5 1008.5h0M911.5 1008.5h0M911.5 1008.5h0M912.5 1008.5h0M912.5 1008.5h0M913.5 1008.5h0M913.5 1008.5h0M914.5 1008.5h0M914.5 1008.5h0M915.5 1008.5h0M915.5 1008.5h0M916.5 1008.5h0M916.5 1008.5h0M917.5 1008.5h0M917.5 1008.5h0M918.5 1007.5h0M918.5 1008.5h0M919.5 1008.5h0M919.5 1008.5h0M920.5 1008.5h0M920.5 1008.5h0M921.5 1008.5h0M921.5 1007.5h0M922.5 1008.5h0M922.5 1007.5h0M923.5 1007.5h0M923.5 1008.5h0M924.5 1007.5h0M924.5 1007.5h0M925.5 1007.5h0M925.5 1008.5h0M926.5 1008.5h0M926.5 1008.5h0M927.5 1008.5h0M927.5 1008.5h0M928.5 1008.5h0M928.5 1008.5h0M929.5 1008.5h0M929.5 1008.5h0M930.5 1008.5h0M930.5 1008.5h0M931.5 1008.5h0M931.5 1008.5h0M932.5 1008.5h0M932.5 1008.5h0M933.5 1008.5h0M933.5 1008.5h0M934.5 1008.5h0M934.5 1008.5h0M935.5 1008.5h0M935.5 1008.5h0M936.5 1008.5h0M936.5 1008.5h0M937.5 1008.5h0M937.5 1008.5h0M938.5 1008.5h0M938.5 1008.5h0M939.5 1008.5h0M939.5 1008.5h0M940.5 1007.5h0M940.5 1008.5h0M941.5 1007.5h0M941.5 1008.5h0M942.5 1008.5h0M942.5 1008.5h0M943.5 1007.5h0M943.5 1008.5h0M944.5 1008.5h0M944.5 1008.5h0M945.5 1008.5h0M945.5 1008.5h0M946.5 1007.5h0M946.5 1007.5h0M947.5 1007.5h0M947.5 1008.5h0M948.5 1007.5h0M948.5 1008.5h0M949.5 1008.5h0M949.5 1007.5h0M950.5 1007.5h0M950.5 1008.5h0M951.5 1007.5h0M951.5 1007.5h0M952.5 1008.5h0M952.5 1007.5h0M953.5 1008.5h0M953.5 1008.5h0M954.5 1008.5h0M954.5 1008.5h0M955.5 1008.5h0M955.5 1008.5h0M955.5 1008.5h0M956.5 1008.5h0M956.5 1008.5h0M957.5 1008.5h0M957.5 1008.5h0M958.5 1008.5h0M958.5 1008.5h0M959.5 1008.5h0M959.5 1008.5h0M960.5 1008.5h0M960.5 1008.5h0M961.5 1008.5h0M961.5 1008.5h0M962.5 1008.5h0M962.5 1008.5h0M963.5 1008.5h0M963.5 1008.5h0M964.5 1008.5h0M964.5 1008.5h0M965.5 1008.5h0M965.5 1008.5h0M966.5 1008.5h0M966.5 1008.5h0M967.5 1008.5h0M967.5 1008.5h0M968.5 1008.5h0M968.5 1008.5h0M969.5 1008.5h0M969.5 1008.5h0M970.5 1008.5h0M970.5 1008.5h0M971.5 1008.5h0M971.5 1008.5h0M972.5 1007.5h0M972.5 1007.5h0M973.5 1008.5h0M973.5 1007.5h0M974.5 1008.5h0M974.5 1008.5h0M975.5 1008.5h0M975.5 1008.5h0M976.5 1008.5h0M976.5 1008.5h0M977.5 1008.5h0M977.5 1008.5h0M978.5 1008.5h0M978.5 1008.5h0M979.5 1008.5h0M979.5 1008.5h0M980.5 1008.5h0M980.5 1008.5h0M981.5 1008.5h0M981.5 1007.5h0M982.5 1008.5h0M982.5 1008.5h0M983.5 1007.5h0M983.5 1007.5h0M984.5 1007.5h0M984.5 1007.5h0M985.5 1006.5h0M985.5 1006.5h0M986.5 1007.5h0M986.5 1007.5h0M987.5 1007.5h0M987.5 1007.5h0M988.5 1006.5h0M988.5 1007.5h0M989.5 1007.5h0M989.5 1007.5h0M990.5 1007.5h0M990.5 1007.5h0M991.5 1006.5h0M991.5 1007.5h0M992.5 1007.5h0M992.5 1007.5h0M993.5 1007.5h0M993.5 1007.5h0M994.5 1007.5h0M994.5 1007.5h0M995.5 1007.5h0M995.5 1008.5h0M996.5 1007.5h0M996.5 1007.5h0M997.5 1007.5h0M997.5 1006.5h0M998.5 1007.5h0M998.5 1006.5h0M999.5 1007.5h0M999.5 1006.5h0M1000.5 1007.5h0M1000.5 1007.5h0M1001.5 1007.5h0M1001.5 1007.5h0M1002.5 1007.5h0M1002.5 1007.5h0M1003.5 1006.5h0M1003.5 1007.5h0M1004.5 1007.5h0M1004.5 1007.5h0M1005.5 1007.5h0M1005.5 1007.5h0M1006.5 1007.5h0M1006.5 1007.5h0M1007.5 1007.5h0M1007.5 1007.5h0M1008.5 1007.5h0M1008.5 1007.5h0M1009.5 1007.5h0M1009.5 1007.5h0M1010.5 1008.5h0M1010.5 1007.5h0M1011.5 1008.5h0M1011.5 1008.5h0M1012.5 1007.5h0M1012.5 1008.5h0M1013.5 1008.5h0M1013.5 1008.5h0M1014.5 1008.5h0M1014.5 1008.5h0M1015.5 1008.5h0M1015.5 1008.5h0M1016.5 1008.5h0M1016.5 1008.5h0M1017.5 1008.5h0M1017.5 1008.5h0M1018.5 1008.5h0M1018.5 1008.5h0M1019.5 1008.5h0M1019.5 1008.5h0M1020.5 1008.5h0M1020.5 1008.5h0M1021.5 1008.5h0M1021.5 1008.5h0M1022.5 1008.5h0M1022.5 1008.5h0M1023.5 1008.5h0M1023.5 1008.5h0M1024.5 1008.5h0M1024.5 1008.5h0M1025.5 1008.5h0M1025.5 1008.5h0M1026.5 1008.5h0M1026.5 1008.5h0M1027.5 1008.5h0M1027.5 1008.5h0M1028.5 1008.5h0M1028.5 1008.5h0M1029.5 1008.5h0M1029.5 1008.5h0M1030.5 1008.5h0M1030.5 1008.5h0M1031.5 1008.5h0M1031.5 1008.5h0M1032.5 1007.5h0M1032.5 1007.5h0M1033.5 1007.5h0M1033.5 1007.5h0M1034.5 1008.5h0M1034.5 1007.5h0M1035.5 1007.5h0M1035.5 1007.5h0M1036.5 1007.5h0M1036.5 1007.5h0M1037.5 1007.5h0M1037.5 1007.5h0M1038.5 1007.5h0M1038.5 1007.5h0M1039.5 1006.5h0M1039.5 1008.5h0M1040.5 1007.5h0M1040.5 1008.5h0M1041.5 1008.5h0M1041.5 1007.5h0M1042.5 1008.5h0M1042.5 1008.5h0M1043.5 1007.5h0M1043.5 1007.5h0M1044.5 1008.5h0M1044.5 1007.5h0M1045.5 1007.5h0M1045.5 1008.5h0M1046.5 1007.5h0M1046.5 1008.5h0M1047.5 1008.5h0M1047.5 1008.5h0M1048.5 1008.5h0M1048.5 1008.5h0M1049.5 1007.5h0M1049.5 1008.5h0M1050.5 1008.5h0M1050.5 1008.5h0M1051.5 1008.5h0M1051.5 1007.5h0M1052.5 1007.5h0M1052.5 1008.5h0M1053.5 1007.5h0M1053.5 1007.5h0M1054.5 1007.5h0M1054.5 1007.5h0M1055.5 1008.5h0M1055.5 1008.5h0M1056.5 1008.5h0M1056.5 1007.5h0M1057.5 1008.5h0M1057.5 1007.5h0M1058.5 1008.5h0M1058.5 1008.5h0M1059.5 1007.5h0M1059.5 1008.5h0M1060.5 1007.5h0M1060.5 1007.5h0M1061.5 1007.5h0M1061.5 1008.5h0M1062.5 1007.5h0M1062.5 1008.5h0M1063.5 1008.5h0M1063.5 1008.5h0M1064.5 1007.5h0M1064.5 1008.5h0M1065.5 1007.5h0M1065.5 1007.5h0M1066.5 1007.5h0M1066.5 1007.5h0M1067.5 1006.5h0M1067.5 1006.5h0M1068.5 1006.5h0M1068.5 1007.5h0M1069.5 1007.5h0M1069.5 1007.5h0M1070.5 1007.5h0M1070.5 1008.5h0M1071.5 1007.5h0M1071.5 1008.5h0M1072.5 1007.5h0M1072.5 1008.5h0M1073.5 1008.5h0M1073.5 1007.5h0M1074.5 1007.5h0M1074.5 1007.5h0M1075.5 1007.5h0M1075.5 1007.5h0M1076.5 1007.5h0M1076.5 1007.5h0M1077.5 1008.5h0M1077.5 1008.5h0M1078.5 1008.5h0M1078.5 1007.5h0M1079.5 1007.5h0M1079.5 1006.5h0M1080.5 1007.5h0M1080.5 1007.5h0M1081.5 1007.5h0M1081.5 1006.5h0M1082.5 1007.5h0M1082.5 1006.5h0M1083.5 1007.5h0M1083.5 1007.5h0M1084.5 1007.5h0M1084.5 1007.5h0M1085.5 1006.5h0M1085.5 1007.5h0M1086.5 1007.5h0M1086.5 1006.5h0M1087.5 1006.5h0M1087.5 1007.5h0M1088.5 1006.5h0M1088.5 1007.5h0M1089.5 1007.5h0M1089.5 1007.5h0M1090.5 1007.5h0M1090.5 1007.5h0M1091.5 1007.5h0M1091.5 1008.5h0M1092.5 1008.5h0M1092.5 1008.5h0M1093.5 1007.5h0M1093.5 1008.5h0M1094.5 1007.5h0M1094.5 1008.5h0M1095.5 1007.5h0M1095.5 1007.5h0M1096.5 1006.5h0M1096.5 1007.5h0M1097.5 1007.5h0M1097.5 1007.5h0M1098.5 1007.5h0M1098.5 1008.5h0M1099.5 1007.5h0M1099.5 1008.5h0M1100.5 1007.5h0M1100.5 1007.5h0M1101.5 1007.5h0M1101.5 1007.5h0M1102.5 1007.5h0M1102.5 1007.5h0M1103.5 1008.5h0M1103.5 1007.5h0M1104.5 1007.5h0M1104.5 1008.5h0M1105.5 1008.5h0M1105.5 1008.5h0M1106.5 1008.5h0M1106.5 1008.5h0M1107.5 1007.5h0M1107.5 1008.5h0M1108.5 1008.5h0M1108.5 1007.5h0M1109.5 1007.5h0M1109.5 1007.5h0M1110.5 1007.5h0M1110.5 1008.5h0M1111.5 1007.5h0M1111.5 1006.5h0M1112.5 1007.5h0M1112.5 1007.5h0M1113.5 1007.5h0M1113.5 1007.5h0M1114.5 1008.5h0M1114.5 1007.5h0M1115.5 1007.5h0M1115.5 1008.5h0M1116.5 1007.5h0M1116.5 1007.5h0M1117.5 1008.5h0M1117.5 1008.5h0M1118.5 1007.5h0M1118.5 1007.5h0M1119.5 1007.5h0M1119.5 1007.5h0M1120.5 1007.5h0M1120.5 1007.5h0M1121.5 1008.5h0M1121.5 1008.5h0M1122.5 1007.5h0M1122.5 1008.5h0M1123.5 1008.5h0M1123.5 1008.5h0M1124.5 1008.5h0M1124.5 1008.5h0M1125.5 1007.5h0M1125.5 1007.5h0M1126.5 1008.5h0M1126.5 1007.5h0M1127.5 1007.5h0M1127.5 1007.5h0M1128.5 1007.5h0M1128.5 1007.5h0M1129.5 1007.5h0M1129.5 1008.5h0M1130.5 1008.5h0M1130.5 1007.5h0M1131.5 1007.5h0M1131.5 1007.5h0M1132.5 1008.5h0M1132.5 1007.5h0M1133.5 1008.5h0M1133.5 1008.5h0M1134.5 1008.5h0M1134.5 1008.5h0M1135.5 1008.5h0M1135.5 1007.5h0M1136.5 1007.5h0M1136.5 1008.5h0M1137.5 1007.5h0M1137.5 1008.5h0M1138.5 1008.5h0M1138.5 1007.5h0M1139.5 1008.5h0M1139.5 1008.5h0M1140.5 1007.5h0M1140.5 1008.5h0M1141.5 1008.5h0M1141.5 1008.5h0M1142.5 1008.5h0M1142.5 1008.5h0M1143.5 1008.5h0M1143.5 1007.5h0M1144.5 1007.5h0M1144.5 1007.5h0M1145.5 1008.5h0M1145.5 1008.5h0M1146.5 1007.5h0M1146.5 1008.5h0M1147.5 1007.5h0M1147.5 1007.5h0M1148.5 1006.5h0M1148.5 1007.5h0M1149.5 1006.5h0M1149.5 1007.5h0M1150.5 1006.5h0M1150.5 1006.5h0M1151.5 1007.5h0M1151.5 1008.5h0M1152.5 1006.5h0M1152.5 1007.5h0M1153.5 1006.5h0M1153.5 1006.5h0M1154.5 1007.5h0M1154.5 1006.5h0M1155.5 1006.5h0M1155.5 1007.5h0M1156.5 1007.5h0M1156.5 1006.5h0M1157.5 1008.5h0M1157.5 1008.5h0M1158.5 1007.5h0M1158.5 1008.5h0M1159.5 1008.5h0M1159.5 1008.5h0M1160.5 1007.5h0M1160.5 1007.5h0M1161.5 1008.5h0M1161.5 1008.5h0M1162.5 1008.5h0M1162.5 1008.5h0M1163.5 1008.5h0M1163.5 1008.5h0M1164.5 1008.5h0M1164.5 1008.5h0M1165.5 1008.5h0M1165.5 1008.5h0M1166.5 1008.5h0M1166.5 1008.5h0M1167.5 1008.5h0M1167.5 1007.5h0M1168.5 1008.5h0M1168.5 1007.5h0M1169.5 1008.5h0M1169.5 1008.5h0M1170.5 1008.5h0M1170.5 1008.5h0M1171.5 1008.5h0M1171.5 1008.5h0M1172.5 1008.5h0M1172.5 1008.5h0M1173.5 1008.5h0M1173.5 1008.5h0M1174.5 1008.5h0M1174.5 1008.5h0M1175.5 1008.5h0M1175.5 1008.5h0M1175.5 1008.5h0M1176.5 1007.5h0M1176.5 1008.5h0M1177.5 1008.5h0M1177.5 1008.5h0M1178.5 1008.5h0M1178.5 1008.5h0M1179.5 1007.5h0M1179.5 1007.5h0M1180.5 1007.5h0M1180.5 1008.5h0M1181.5 1007.5h0M1181.5 1007.5h0M1182.5 1007.5h0M1182.5 1007.5h0M1183.5 1007.5h0M1183.5 1006.5h0M1184.5 1006.5h0M1184.5 1007.5h0M1185.5 1007.5h0M1185.5 1007.5h0M1186.5 1007.5h0M1186.5 1008.5h0M1187.5 1007.5h0M1187.5 1007.5h0M1188.5 1007.5h0M1188.5 1008.5h0M1189.5 1008.5h0M1189.5 1008.5h0M1190.5 1007.5h0M1190.5 1008.5h0M1191.5 1008.5h0M1191.5 1008.5h0M1192.5 1008.5h0M1192.5 1008.5h0M1193.5 1008.5h0M1193.5 1008.5h0M1194.5 1008.5h0M1194.5 1008.5h0M1195.5 1008.5h0M1195.5 1008.5h0M1196.5 1008.5h0M1196.5 1008.5h0M1197.5 1008.5h0M1197.5 1008.5h0M1198.5 1008.5h0M1198.5 1008.5h0M1199.5 1008.5h0M1199.5 1008.5h0M1200.5 1008.5h0M1200.5 1008.5h0M1201.5 1008.5h0M1201.5 1008.5h0M1202.5 1008.5h0M1202.5 1008.5h0M1203.5 1008.5h0M1203.5 1007.5h0M1204.5 1007.5h0M1204.5 1008.5h0M1205.5 1008.5h0M1205.5 1008.5h0M1206.5 1008.5h0M1206.5 1008.5h0M1207.5 1008.5h0M1207.5 1008.5h0M1208.5 1008.5h0M1208.5 1008.5h0M1209.5 1007.5h0M1209.5 1008.5h0M1210.5 1008.5h0M1210.5 1007.5h0M1211.5 1008.5h0M1211.5 1007.5h0M1212.5 1008.5h0M1212.5 1008.5h0M1213.5 1007.5h0M1213.5 1007.5h0M1214.5 1008.5h0M1214.5 1008.5h0M1215.5 1008.5h0M1215.5 1007.5h0M1216.5 1007.5h0M1216.5 1007.5h0M1217.5 1007.5h0M1217.5 1008.5h0M1218.5 1008.5h0M1218.5 1007.5h0M1219.5 1007.5h0M1219.5 1008.5h0M1220.5 1007.5h0M1220.5 1007.5h0M1221.5 1007.5h0M1221.5 1008.5h0M1222.5 1007.5h0M1222.5 1008.5h0M1223.5 1007.5h0M1223.5 1008.5h0M1224.5 1008.5h0M1224.5 1008.5h0M1225.5 1008.5h0M1225.5 1008.5h0M1226.5 1008.5h0M1226.5 1008.5h0M1227.5 1008.5h0M1227.5 1008.5h0M1228.5 1008.5h0M1228.5 1007.5h0M1229.5 1008.5h0M1229.5 1007.5h0M1230.5 1008.5h0M1230.5 1008.5h0M1231.5 1008.5h0M1231.5 1007.5h0M1232.5 1007.5h0M1232.5 1007.5h0M1233.5 1008.5h0M1233.5 1008.5h0M1234.5 1008.5h0M1234.5 1007.5h0M1235.5 1008.5h0M1235.5 1008.5h0M1236.5 1008.5h0M1236.5 1008.5h0M1237.5 1007.5h0M1237.5 1008.5h0M1238.5 1008.5h0M1238.5 1008.5h0M1239.5 1008.5h0M1239.5 1008.5h0M1240.5 1008.5h0M1240.5 1008.5h0M1241.5 1008.5h0M1241.5 1008.5h0M1242.5 1008.5h0M1242.5 1008.5h0M1243.5 1008.5h0M1243.5 1008.5h0M1244.5 1008.5h0M1244.5 1008.5h0M1245.5 1008.5h0M1245.5 1008.5h0M1246.5 1008.5h0M1246.5 1008.5h0M1247.5 1008.5h0M1247.5 1008.5h0M1248.5 1008.5h0M1248.5 1008.5h0M1249.5 1008.5h0M1249.5 1008.5h0M1250.5 1008.5h0M1250.5 1008.5h0M1251.5 1008.5h0M1251.5 1008.5h0M1252.5 1008.5h0M1252.5 1008.5h0M1253.5 1008.5h0M1253.5 1008.5h0M1254.5 1008.5h0M1254.5 1008.5h0M1255.5 1008.5h0M1255.5 1008.5h0M1256.5 1008.5h0M1256.5 1008.5h0M1257.5 1008.5h0M1257.5 1008.5h0M1258.5 1008.5h0M1258.5 1008.5h0M1259.5 1008.5h0M1259.5 1008.5h0M1260.5 1008.5h0M1260.5 1008.5h0M1261.5 1007.5h0M1261.5 1008.5h0M1262.5 1007.5h0M1262.5 1007.5h0M1263.5 1008.5h0M1263.5 1008.5h0M1264.5 1008.5h0M1264.5 1007.5h0M1265.5 1007.5h0M1265.5 1008.5h0M1266.5 1008.5h0M1266.5 1007.5h0M1267.5 1006.5h0M1267.5 1007.5h0M1268.5 1006.5h0M1268.5 1007.5h0M1269.5 1007.5h0M1269.5 1007.5h0M1270.5 1007.5h0M1270.5 1008.5h0M1271.5 1007.5h0M1271.5 1007.5h0M1272.5 1007.5h0M1272.5 1007.5h0M1273.5 1007.5h0M1273.5 1007.5h0M1274.5 1007.5h0M1274.5 1007.5h0M1275.5 1007.5h0M1275.5 1007.5h0M1276.5 1007.5h0M1276.5 1008.5h0M1277.5 1008.5h0M1277.5 1007.5h0M1278.5 1007.5h0M1278.5 1008.5h0M1279.5 1008.5h0M1279.5 1008.5h0M1280.5 1008.5h0M1280.5 1007.5h0M1281.5 1007.5h0M1281.5 1007.5h0M1282.5 1007.5h0M1282.5 1007.5h0M1283.5 1007.5h0M1283.5 1007.5h0M1284.5 1007.5h0M1284.5 1007.5h0M1285.5 1008.5h0M1285.5 1008.5h0M1286.5 1008.5h0M1286.5 1007.5h0M1287.5 1007.5h0M1287.5 1008.5h0M1288.5 1008.5h0M1288.5 1008.5h0M1289.5 1007.5h0M1289.5 1008.5h0M1290.5 1008.5h0M1290.5 1008.5h0M1291.5 1008.5h0M1291.5 1008.5h0M1292.5 1008.5h0M1292.5 1008.5h0M1293.5 1008.5h0M1293.5 1008.5h0M1294.5 1007.5h0M1294.5 1008.5h0M1295.5 1008.5h0M1295.5 1007.5h0M1296.5 1008.5h0M1296.5 1007.5h0M1297.5 1008.5h0M1297.5 1008.5h0M1298.5 1008.5h0M1298.5 1008.5h0M1299.5 1008.5h0M1299.5 1008.5h0M1300.5 1008.5h0M1300.5 1007.5h0M1301.5 1008.5h0M1301.5 1007.5h0M1302.5 1007.5h0M1302.5 1008.5h0" stroke="#000" stroke-width="3" stroke-linecap="round" fill="none"/>
<path d="M285.5 1002.5h0M935.5 997.5h0" stroke="#000" stroke-width="2.6" stroke-linecap="round" fill="none"/>
<path d="M350.5 956.2l1.5 2.8h-3zM531.5 956.2l1.5 2.8h-3zM846.5 956.2l1.5 2.8h-3zM985.5 956.2l1.5 2.8h-3zM1227.5 956.2l1.5 2.8h-3z" fill="none" stroke="#f00" stroke-width="1.1"/>
<path d="M350.5 856.5h0M350.5 889.5h0M531.5 889.5h0M846.5 856.5h0M846.5 889.5h0M985.5 889.5h0M1227.5 856.5h0M1227.5 889.5h0" stroke="#000" stroke-width="3" stroke-linecap="round" fill="none"/>
<path d="M350 856.5h1M350 889.5h1" stroke="#fff" stroke-width="1" fill="none"/>
<line x1="162.0" y1="1011.5" x2="162.0" y2="725.5" stroke="#800080" stroke-width="2.08" stroke-dasharray="2.08 3.44"/>
<line x1="1303.0" y1="1011.5" x2="1303.0" y2="725.5" stroke="#800080" stroke-width="2.08" stroke-dasharray="2.08 3.44"/>
<line x1="105.5" y1="954.5" x2="1485.5" y2="954.5" stroke="#000" stroke-width="1.1"/>
</g>
<rect x="105.5" y="725.5" width="1380" height="286" fill="none" stroke="#000" stroke-width="1.1"/>
<line x1="162.5" y1="1011.5" x2="162.5" y2="1016.4" stroke="#000" stroke-width="1.1"/><text x="163.0" y="1031.8" font-size="13.89" text-anchor="middle">0</text>
<line x1="406.5" y1="1011.5" x2="406.5" y2="1016.4" stroke="#000" stroke-width="1.1"/><text x="405.3" y="1031.8" font-size="13.89" text-anchor="middle">1000</text>
<line x1="649.5" y1="1011.5" x2="649.5" y2="1016.4" stroke="#000" stroke-width="1.1"/><text x="648.8" y="1031.8" font-size="13.89" text-anchor="middle">2000</text>
<line x1="892.5" y1="1011.5" x2="892.5" y2="1016.4" stroke="#000" stroke-width="1.1"/><text x="892.2" y="1031.8" font-size="13.89" text-anchor="middle">3000</text>
<line x1="1136.5" y1="1011.5" x2="1136.5" y2="1016.4" stroke="#000" stroke-width="1.1"/><text x="1135.8" y="1031.8" font-size="13.89" text-anchor="middle">4000</text>
<line x1="1379.5" y1="1011.5" x2="1379.5" y2="1016.4" stroke="#000" stroke-width="1.1"/><text x="1378.5" y="1031.8" font-size="13.89" text-anchor="middle">5000</text>
<line x1="100.6" y1="758.5" x2="105.5" y2="758.5" stroke="#000" stroke-width="1.1"/><text x="95.7" y="763.9" font-size="13.89" text-anchor="end">not Kalman</text>
<line x1="100.6" y1="791.5" x2="105.5" y2="791.5" stroke="#000" stroke-width="1.1"/><text x="95.7" y="795.9" font-size="13.89" text-anchor="end">not track</text>
<line x1="100.6" y1="823.5" x2="105.5" y2="823.5" stroke="#000" stroke-width="1.1"/><text x="95.7" y="828.8" font-size="13.89" text-anchor="end">Sat. pixel.</text>
<line x1="100.6" y1="856.5" x2="105.5" y2="856.5" stroke="#000" stroke-width="1.1"/><text x="95.7" y="861.8" font-size="13.89" text-anchor="end">Ion. rad.</text>
<line x1="100.6" y1="889.5" x2="105.5" y2="889.5" stroke="#000" stroke-width="1.1"/><text x="95.7" y="893.8" font-size="13.89" text-anchor="end">dr &gt; 5</text>
<line x1="100.6" y1="921.5" x2="105.5" y2="921.5" stroke="#000" stroke-width="1.1"/><text x="95.7" y="926.7" font-size="13.89" text-anchor="end">OBS not OK</text>
<line x1="100.6" y1="1009.5" x2="105.5" y2="1009.5" stroke="#000" stroke-width="1.1"/><text x="96.5" y="1013.8" font-size="13.89" text-anchor="end">0</text>
<line x1="100.6" y1="983.5" x2="105.5" y2="983.5" stroke="#000" stroke-width="1.1"/><text x="96.5" y="987.8" font-size="13.89" text-anchor="end">5</text>
<line x1="100.6" y1="957.5" x2="105.5" y2="957.5" stroke="#000" stroke-width="1.1"/><text x="96.5" y="961.8" font-size="13.89" text-anchor="end">10</text>
<line x1="102.7" y1="996.5" x2="105.5" y2="996.5" stroke="#000" stroke-width="0.83"/>
<line x1="102.7" y1="970.4" x2="105.5" y2="970.4" stroke="#000" stroke-width="0.83"/>
<text transform="translate(68.5,983.8) rotate(-90)" font-size="13.89" text-anchor="middle">dr</text>
</svg>
</body></html>
